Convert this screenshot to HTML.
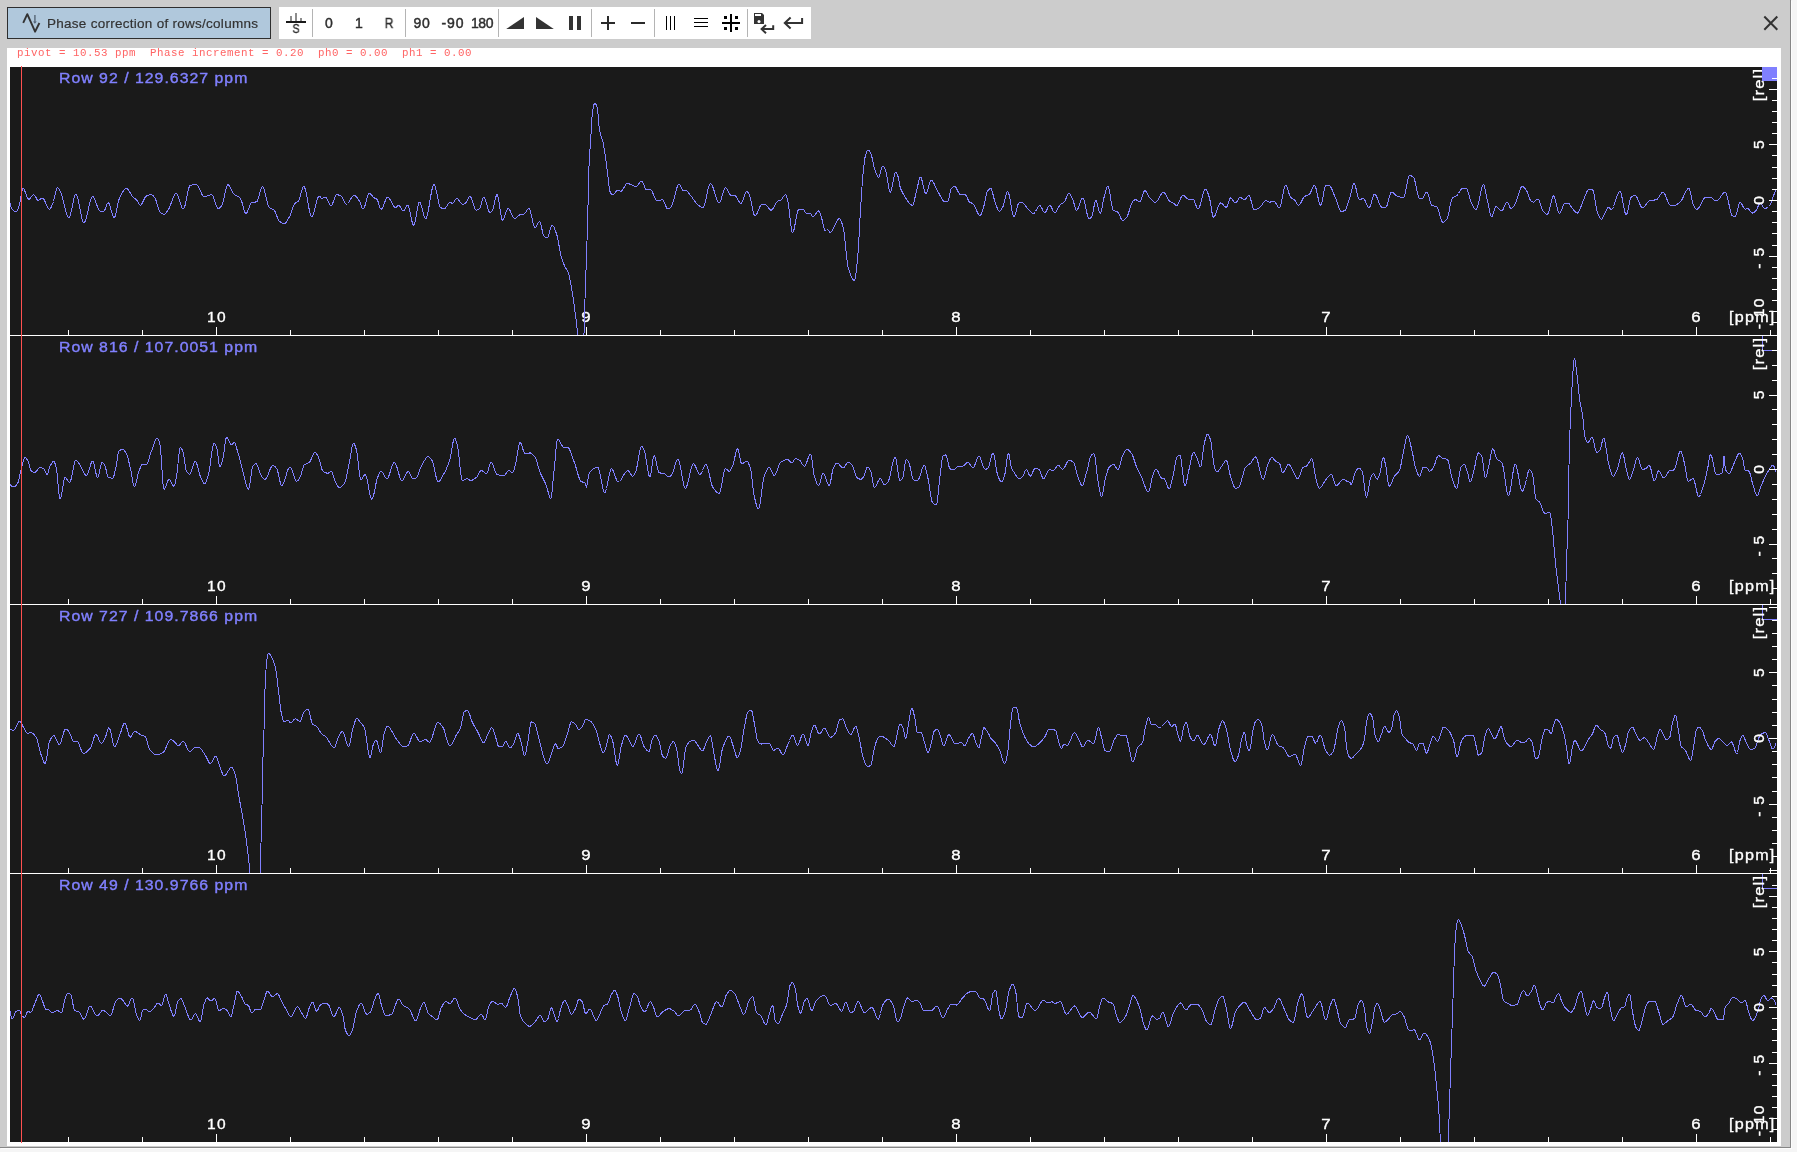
<!DOCTYPE html>
<html><head><meta charset="utf-8"><title>Phase correction of rows/columns</title>
<style>
html,body{margin:0;padding:0;}
body{width:1797px;height:1152px;overflow:hidden;background:#f5f5f5;position:relative;font-family:"Liberation Sans",sans-serif;}
.abs{position:absolute;}
.t{position:absolute;white-space:pre;line-height:1;will-change:transform;}
#win{left:0;top:0;width:1790px;height:1147px;background:#cccccc;border-right:1px solid #868686;border-bottom:1px solid #868686;box-shadow:1px 1px 0 #fcfcfc;}
#btn{left:7px;top:7px;width:262px;height:30px;background:#b0c8dc;border:1px solid #2e2e2e;}
#tb{left:279px;top:7px;width:532px;height:32px;background:#ffffff;}
#white{left:7px;top:48px;width:1774px;height:1098px;background:#ffffff;}
#plot{left:10px;top:67px;width:1767px;height:1075px;background:#1a1a1a;}
.tl{font-size:13px;color:#333333;}
.row{font-size:14px;color:#8080ff;-webkit-text-stroke:0.38px #8080ff;}
.ax{font-size:14px;color:#ffffff;-webkit-text-stroke:0.33px #ffffff;}
.mono{font-family:"Liberation Mono",monospace;color:#ff6464;}
svg{position:absolute;left:0;top:0;will-change:transform;}
.yl{font-family:"Liberation Sans",sans-serif;font-size:14px;fill:#ffffff;stroke:#ffffff;stroke-width:0.33px;}
</style></head><body>
<div id="win" class="abs"></div>
<div id="btn" class="abs"></div>
<div id="tb" class="abs"></div>
<div id="white" class="abs"></div>
<div id="plot" class="abs"></div>
<span class="t tl" id="btntxt" style="left:46.7px;top:16.6px;font-size:13.5px;letter-spacing:0.27px;-webkit-text-stroke:0.2px #333;">Phase correction of rows/columns</span>
<span class="t tl" style="left:278.9px;width:100px;text-align:center;top:16.15px;font-size:14px;letter-spacing:0px;-webkit-text-stroke:0.45px #2e2e2e;color:#2e2e2e;">0</span>
<span class="t tl" style="left:309.3px;width:100px;text-align:center;top:16.15px;font-size:14px;letter-spacing:0px;-webkit-text-stroke:0.45px #2e2e2e;color:#2e2e2e;">1</span>
<span class="t tl" style="left:339.3px;width:100px;text-align:center;top:16.15px;font-size:14px;letter-spacing:0px;-webkit-text-stroke:0.45px #2e2e2e;color:#2e2e2e;transform:scaleX(0.86);">R</span>
<span class="t tl" style="left:372.2px;width:100px;text-align:center;top:16.15px;font-size:14px;letter-spacing:0.6px;-webkit-text-stroke:0.45px #2e2e2e;color:#2e2e2e;">90</span>
<span class="t tl" style="left:402.7px;width:100px;text-align:center;top:16.15px;font-size:14px;letter-spacing:1.0px;-webkit-text-stroke:0.45px #2e2e2e;color:#2e2e2e;">-90</span>
<span class="t tl" style="left:431.8px;width:100px;text-align:center;top:16.15px;font-size:14px;letter-spacing:-0.4px;-webkit-text-stroke:0.45px #2e2e2e;color:#2e2e2e;">180</span>
<span class="t tl" style="left:246.0px;width:100px;text-align:center;top:23.08px;font-size:12.9px;transform:scaleX(0.82);-webkit-text-stroke:0.4px #2a2a2a;color:#2a2a2a;">S</span>
<span class="t mono" id="status" style="left:16.9px;top:48.2px;font-size:10.8px;letter-spacing:0.52px;">pivot = 10.53 ppm  Phase increment = 0.20  ph0 = 0.00  ph1 = 0.00</span>
<span class="t row" style="left:58.5px;top:71.15px;letter-spacing:0.9px;transform:scaleX(1.13);transform-origin:0 0;">Row 92 / 129.6327 ppm</span>
<span class="t ax" style="left:167.1px;width:100px;text-align:center;top:310.15px;font-size:14px;letter-spacing:1.2px;transform:scaleX(1.11);">10</span>
<span class="t ax" style="left:536.2px;width:100px;text-align:center;top:310.15px;font-size:14px;transform:scaleX(1.2);">9</span>
<span class="t ax" style="left:906.2px;width:100px;text-align:center;top:310.15px;font-size:14px;transform:scaleX(1.2);">8</span>
<span class="t ax" style="left:1276.2px;width:100px;text-align:center;top:310.15px;font-size:14px;transform:scaleX(1.2);">7</span>
<span class="t ax" style="left:1646.2px;width:100px;text-align:center;top:310.15px;font-size:14px;transform:scaleX(1.2);">6</span>
<span class="t ax" style="left:1729px;top:310.15px;letter-spacing:1.1px;transform:scaleX(1.15);transform-origin:0 0;">[ppm]</span>
<span class="t row" style="left:58.5px;top:340.15px;letter-spacing:0.9px;transform:scaleX(1.13);transform-origin:0 0;">Row 816 / 107.0051 ppm</span>
<span class="t ax" style="left:167.1px;width:100px;text-align:center;top:579.15px;font-size:14px;letter-spacing:1.2px;transform:scaleX(1.11);">10</span>
<span class="t ax" style="left:536.2px;width:100px;text-align:center;top:579.15px;font-size:14px;transform:scaleX(1.2);">9</span>
<span class="t ax" style="left:906.2px;width:100px;text-align:center;top:579.15px;font-size:14px;transform:scaleX(1.2);">8</span>
<span class="t ax" style="left:1276.2px;width:100px;text-align:center;top:579.15px;font-size:14px;transform:scaleX(1.2);">7</span>
<span class="t ax" style="left:1646.2px;width:100px;text-align:center;top:579.15px;font-size:14px;transform:scaleX(1.2);">6</span>
<span class="t ax" style="left:1729px;top:579.15px;letter-spacing:1.1px;transform:scaleX(1.15);transform-origin:0 0;">[ppm]</span>
<span class="t row" style="left:58.5px;top:609.15px;letter-spacing:0.9px;transform:scaleX(1.13);transform-origin:0 0;">Row 727 / 109.7866 ppm</span>
<span class="t ax" style="left:167.1px;width:100px;text-align:center;top:848.15px;font-size:14px;letter-spacing:1.2px;transform:scaleX(1.11);">10</span>
<span class="t ax" style="left:536.2px;width:100px;text-align:center;top:848.15px;font-size:14px;transform:scaleX(1.2);">9</span>
<span class="t ax" style="left:906.2px;width:100px;text-align:center;top:848.15px;font-size:14px;transform:scaleX(1.2);">8</span>
<span class="t ax" style="left:1276.2px;width:100px;text-align:center;top:848.15px;font-size:14px;transform:scaleX(1.2);">7</span>
<span class="t ax" style="left:1646.2px;width:100px;text-align:center;top:848.15px;font-size:14px;transform:scaleX(1.2);">6</span>
<span class="t ax" style="left:1729px;top:848.15px;letter-spacing:1.1px;transform:scaleX(1.15);transform-origin:0 0;">[ppm]</span>
<span class="t row" style="left:58.5px;top:878.15px;letter-spacing:0.9px;transform:scaleX(1.13);transform-origin:0 0;">Row 49 / 130.9766 ppm</span>
<span class="t ax" style="left:167.1px;width:100px;text-align:center;top:1117.15px;font-size:14px;letter-spacing:1.2px;transform:scaleX(1.11);">10</span>
<span class="t ax" style="left:536.2px;width:100px;text-align:center;top:1117.15px;font-size:14px;transform:scaleX(1.2);">9</span>
<span class="t ax" style="left:906.2px;width:100px;text-align:center;top:1117.15px;font-size:14px;transform:scaleX(1.2);">8</span>
<span class="t ax" style="left:1276.2px;width:100px;text-align:center;top:1117.15px;font-size:14px;transform:scaleX(1.2);">7</span>
<span class="t ax" style="left:1646.2px;width:100px;text-align:center;top:1117.15px;font-size:14px;transform:scaleX(1.2);">6</span>
<span class="t ax" style="left:1729px;top:1117.15px;letter-spacing:1.1px;transform:scaleX(1.15);transform-origin:0 0;">[ppm]</span>
<svg width="1797" height="1152" viewBox="0 0 1797 1152" shape-rendering="crispEdges">
<defs><clipPath id="cp0"><rect x="10" y="67" width="1767" height="268"/></clipPath><clipPath id="cp1"><rect x="10" y="336" width="1767" height="268"/></clipPath><clipPath id="cp2"><rect x="10" y="605" width="1767" height="268"/></clipPath><clipPath id="cp3"><rect x="10" y="874" width="1767" height="268"/></clipPath></defs>
<path d="M10.0,203.5 10.5,205.1 11.0,206.6 11.5,207.8 12.0,208.7 12.5,209.5 13.0,210.2 13.5,210.6 14.0,211.0 14.5,211.2 15.0,211.4 15.5,211.5 16.0,211.5 16.5,211.4 17.0,210.9 17.5,210.0 18.0,208.8 18.5,207.3 19.0,205.8 19.5,204.3 20.0,202.3 20.5,199.7 21.0,196.6 21.5,193.7 22.0,191.0 22.5,189.2 23.0,188.5 23.5,188.7 24.0,189.3 24.5,190.2 25.0,191.4 25.5,192.7 26.0,194.1 26.5,195.5 27.0,196.8 27.5,197.9 28.0,198.7 28.5,199.1 29.0,199.2 29.5,199.0 30.0,198.5 30.5,198.0 31.0,197.3 31.5,196.7 32.0,196.0 32.5,195.5 33.0,195.0 33.5,194.8 34.0,194.8 34.5,195.1 35.0,195.8 35.5,196.7 36.0,197.6 36.5,198.6 37.0,199.4 37.5,200.0 38.0,200.2 38.5,200.2 39.0,200.0 39.5,199.7 40.0,199.4 40.5,199.1 41.0,198.8 41.5,198.5 42.0,198.3 42.5,198.2 43.0,198.4 43.5,198.8 44.0,199.5 44.5,200.4 45.0,201.5 45.5,202.7 46.0,203.9 46.5,205.1 47.0,206.3 47.5,207.3 48.0,208.2 48.5,208.8 49.0,209.2 49.5,209.2 50.0,208.9 50.5,208.3 51.0,207.5 51.5,206.5 52.0,205.4 52.5,204.4 53.0,203.1 53.5,201.5 54.0,199.5 54.5,197.3 55.0,195.0 55.5,192.8 56.0,190.9 56.5,189.3 57.0,188.2 57.5,187.7 58.0,187.8 58.5,188.3 59.0,189.1 59.5,190.0 60.0,191.0 60.5,192.1 61.0,193.1 61.5,194.5 62.0,196.1 62.5,197.9 63.0,199.8 63.5,201.9 64.0,204.0 64.5,206.1 65.0,208.2 65.5,210.1 66.0,212.0 66.5,213.7 67.0,215.1 67.5,216.3 68.0,217.2 68.5,217.7 69.0,217.7 69.5,217.2 70.0,216.0 70.5,214.4 71.0,212.4 71.5,210.2 72.0,207.7 72.5,205.2 73.0,202.7 73.5,200.4 74.0,198.3 74.5,196.5 75.0,195.2 75.5,194.4 76.0,194.2 76.5,194.7 77.0,195.8 77.5,197.3 78.0,199.2 78.5,201.5 79.0,203.9 79.5,206.5 80.0,209.2 80.5,211.9 81.0,214.4 81.5,216.7 82.0,218.8 82.5,220.5 83.0,221.8 83.5,222.6 84.0,222.7 84.5,222.4 85.0,221.6 85.5,220.4 86.0,218.9 86.5,217.1 87.0,215.1 87.5,213.0 88.0,210.7 88.5,208.5 89.0,206.3 89.5,204.1 90.0,202.2 90.5,200.4 91.0,198.9 91.5,197.7 92.0,196.9 92.5,196.5 93.0,196.6 93.5,197.0 94.0,197.7 94.5,198.7 95.0,199.9 95.5,201.2 96.0,202.6 96.5,204.0 97.0,205.5 97.5,206.9 98.0,208.1 98.5,209.2 99.0,210.1 99.5,210.7 100.0,211.0 100.5,211.0 101.0,211.0 101.5,211.0 102.0,211.0 102.5,211.0 103.0,211.0 103.5,211.0 104.0,211.0 104.5,210.5 105.0,209.6 105.5,208.4 106.0,206.9 106.5,205.5 107.0,204.2 107.5,203.3 108.0,202.8 108.5,202.9 109.0,203.5 109.5,204.6 110.0,206.1 110.5,207.8 111.0,209.6 111.5,211.5 112.0,213.3 112.5,214.9 113.0,216.3 113.5,217.2 114.0,217.7 114.5,217.6 115.0,216.6 115.5,214.9 116.0,212.8 116.5,210.3 117.0,207.7 117.5,205.2 118.0,202.9 118.5,200.9 119.0,199.6 119.5,198.5 120.0,197.4 120.5,196.3 121.0,195.2 121.5,194.2 122.0,193.2 122.5,192.3 123.0,191.5 123.5,190.7 124.0,190.1 124.5,189.5 125.0,189.0 125.5,188.7 126.0,188.5 126.5,188.5 127.0,188.6 127.5,188.9 128.0,189.5 128.5,190.1 129.0,190.9 129.5,191.7 130.0,192.6 130.5,193.5 131.0,194.3 131.5,195.2 132.0,195.9 132.5,196.5 133.0,197.0 133.5,197.4 134.0,197.8 134.5,198.1 135.0,198.5 135.5,198.9 136.0,199.3 136.5,199.8 137.0,200.4 137.5,201.3 138.0,202.3 138.5,203.3 139.0,204.2 139.5,204.8 140.0,205.2 140.5,205.2 141.0,204.9 141.5,204.3 142.0,203.5 142.5,202.6 143.0,201.6 143.5,200.6 144.0,199.5 144.5,198.5 145.0,197.6 145.5,196.9 146.0,196.3 146.5,196.0 147.0,195.7 147.5,195.6 148.0,195.4 148.5,195.2 149.0,195.1 149.5,194.9 150.0,194.8 150.5,194.8 151.0,194.7 151.5,194.7 152.0,194.8 152.5,195.1 153.0,195.6 153.5,196.1 154.0,196.7 154.5,197.4 155.0,198.1 155.5,199.1 156.0,200.4 156.5,202.0 157.0,203.6 157.5,205.3 158.0,207.0 158.5,208.6 159.0,210.0 159.5,211.1 160.0,212.0 160.5,212.5 161.0,212.9 161.5,213.2 162.0,213.6 162.5,213.8 163.0,214.1 163.5,214.2 164.0,214.2 164.5,214.1 165.0,213.9 165.5,213.4 166.0,212.9 166.5,212.2 167.0,211.5 167.5,210.8 168.0,210.1 168.5,209.4 169.0,208.5 169.5,207.4 170.0,206.2 170.5,204.9 171.0,203.5 171.5,202.1 172.0,200.7 172.5,199.3 173.0,198.0 173.5,196.7 174.0,195.7 174.5,194.8 175.0,194.1 175.5,193.6 176.0,193.5 176.5,193.7 177.0,194.2 177.5,195.1 178.0,196.3 178.5,197.6 179.0,199.1 179.5,200.7 180.0,202.3 180.5,203.9 181.0,205.3 181.5,206.6 182.0,207.7 182.5,208.5 183.0,208.9 183.5,208.9 184.0,208.3 184.5,207.1 185.0,205.5 185.5,203.5 186.0,201.2 186.5,198.7 187.0,196.2 187.5,193.7 188.0,191.4 188.5,189.2 189.0,187.5 189.5,186.2 190.0,185.4 190.5,185.2 191.0,185.1 191.5,185.0 192.0,185.0 192.5,184.9 193.0,184.9 193.5,184.8 194.0,184.8 194.5,184.8 195.0,184.7 195.5,184.7 196.0,184.7 196.5,184.7 197.0,184.8 197.5,185.2 198.0,185.9 198.5,186.7 199.0,187.7 199.5,188.8 200.0,190.0 200.5,191.1 201.0,192.3 201.5,193.5 202.0,194.5 202.5,195.4 203.0,196.1 203.5,196.5 204.0,196.7 204.5,196.7 205.0,196.6 205.5,196.5 206.0,196.4 206.5,196.2 207.0,196.0 207.5,195.8 208.0,195.6 208.5,195.4 209.0,195.3 209.5,195.1 210.0,194.9 210.5,194.8 211.0,194.7 211.5,194.7 212.0,194.9 212.5,195.4 213.0,196.3 213.5,197.4 214.0,198.7 214.5,200.2 215.0,201.7 215.5,203.2 216.0,204.7 216.5,206.0 217.0,207.1 217.5,207.9 218.0,208.4 218.5,208.5 219.0,208.3 219.5,208.1 220.0,207.7 220.5,207.2 221.0,206.7 221.5,206.1 222.0,205.3 222.5,204.0 223.0,202.3 223.5,200.2 224.0,197.9 224.5,195.5 225.0,193.1 225.5,190.8 226.0,188.8 226.5,187.0 227.0,185.7 227.5,184.9 228.0,184.7 228.5,185.0 229.0,185.5 229.5,186.2 230.0,187.1 230.5,188.1 231.0,189.2 231.5,190.3 232.0,191.3 232.5,192.3 233.0,193.0 233.5,193.6 234.0,194.0 234.5,194.4 235.0,194.8 235.5,195.1 236.0,195.4 236.5,195.6 237.0,195.9 237.5,196.2 238.0,196.5 238.5,196.8 239.0,197.1 239.5,197.6 240.0,198.1 240.5,198.6 241.0,199.6 241.5,200.9 242.0,202.5 242.5,204.4 243.0,206.3 243.5,208.1 244.0,209.9 244.5,211.4 245.0,212.6 245.5,213.3 246.0,213.5 246.5,213.2 247.0,212.5 247.5,211.6 248.0,210.4 248.5,209.1 249.0,207.7 249.5,206.4 250.0,205.2 250.5,204.1 251.0,203.3 251.5,202.8 252.0,202.6 252.5,202.5 253.0,202.4 253.5,202.3 254.0,202.3 254.5,202.2 255.0,202.1 255.5,202.0 256.0,201.9 256.5,201.8 257.0,201.5 257.5,200.6 258.0,199.4 258.5,197.8 259.0,196.0 259.5,194.1 260.0,192.2 260.5,190.4 261.0,188.9 261.5,187.7 262.0,186.9 262.5,186.7 263.0,187.1 263.5,188.0 264.0,189.3 264.5,190.9 265.0,192.8 265.5,194.9 266.0,197.0 266.5,199.2 267.0,201.2 267.5,203.1 268.0,204.8 268.5,206.1 269.0,207.0 269.5,207.5 270.0,207.9 270.5,208.2 271.0,208.5 271.5,208.7 272.0,208.9 272.5,209.1 273.0,209.4 273.5,209.7 274.0,210.1 274.5,210.6 275.0,211.4 275.5,212.5 276.0,213.8 276.5,215.1 277.0,216.5 277.5,217.8 278.0,219.0 278.5,220.1 279.0,220.8 279.5,221.3 280.0,221.7 280.5,222.1 281.0,222.5 281.5,222.8 282.0,223.1 282.5,223.4 283.0,223.6 283.5,223.7 284.0,223.8 284.5,223.7 285.0,223.5 285.5,223.1 286.0,222.5 286.5,221.9 287.0,221.1 287.5,220.2 288.0,219.4 288.5,218.5 289.0,217.6 289.5,216.7 290.0,215.7 290.5,214.4 291.0,213.1 291.5,211.6 292.0,210.2 292.5,208.7 293.0,207.4 293.5,206.1 294.0,205.0 294.5,204.1 295.0,203.4 295.5,203.0 296.0,202.6 296.5,202.4 297.0,202.1 297.5,201.8 298.0,201.4 298.5,201.0 299.0,200.1 299.5,198.8 300.0,197.2 300.5,195.4 301.0,193.4 301.5,191.5 302.0,189.7 302.5,188.2 303.0,187.1 303.5,186.5 304.0,186.5 304.5,187.2 305.0,188.5 305.5,190.2 306.0,192.3 306.5,194.8 307.0,197.4 307.5,200.2 308.0,203.0 308.5,205.8 309.0,208.5 309.5,210.9 310.0,213.0 310.5,214.8 311.0,216.0 311.5,216.7 312.0,216.7 312.5,216.2 313.0,215.2 313.5,213.9 314.0,212.3 314.5,210.4 315.0,208.4 315.5,206.4 316.0,204.3 316.5,202.3 317.0,200.5 317.5,198.9 318.0,197.5 318.5,196.6 319.0,196.0 319.5,196.0 320.0,196.5 320.5,197.2 321.0,197.9 321.5,198.4 322.0,198.5 322.5,198.3 323.0,198.2 323.5,197.9 324.0,197.7 324.5,197.4 325.0,197.3 325.5,197.2 326.0,197.4 326.5,197.9 327.0,198.7 327.5,199.7 328.0,200.7 328.5,201.9 329.0,202.9 329.5,203.9 330.0,204.7 330.5,205.3 331.0,205.5 331.5,205.3 332.0,204.7 332.5,203.7 333.0,202.6 333.5,201.2 334.0,199.8 334.5,198.5 335.0,197.2 335.5,196.1 336.0,195.3 336.5,194.8 337.0,194.7 337.5,194.8 338.0,194.9 338.5,195.0 339.0,195.2 339.5,195.4 340.0,195.6 340.5,195.9 341.0,196.2 341.5,196.5 342.0,196.9 342.5,197.6 343.0,198.6 343.5,199.8 344.0,201.0 344.5,202.2 345.0,203.2 345.5,203.9 346.0,204.2 346.5,204.2 347.0,203.9 347.5,203.5 348.0,203.0 348.5,202.4 349.0,201.7 349.5,200.9 350.0,200.1 350.5,199.4 351.0,198.6 351.5,197.8 352.0,197.1 352.5,196.6 353.0,196.1 353.5,195.7 354.0,195.5 354.5,195.5 355.0,195.6 355.5,195.9 356.0,196.4 356.5,196.9 357.0,197.5 357.5,198.2 358.0,199.0 358.5,199.7 359.0,200.5 359.5,201.2 360.0,202.3 360.5,203.6 361.0,205.1 361.5,206.5 362.0,207.7 362.5,208.6 363.0,209.0 363.5,208.8 364.0,208.1 364.5,207.0 365.0,205.5 365.5,203.9 366.0,202.0 366.5,200.2 367.0,198.4 367.5,196.7 368.0,195.3 368.5,194.2 369.0,193.6 369.5,193.5 370.0,193.6 370.5,193.9 371.0,194.4 371.5,194.9 372.0,195.5 372.5,196.1 373.0,196.7 373.5,197.3 374.0,197.7 374.5,198.1 375.0,198.3 375.5,198.5 376.0,198.7 376.5,199.0 377.0,199.4 377.5,200.2 378.0,201.5 378.5,203.0 379.0,204.7 379.5,206.3 380.0,207.7 380.5,208.7 381.0,209.2 381.5,209.1 382.0,208.6 382.5,207.8 383.0,206.8 383.5,205.6 384.0,204.3 384.5,202.9 385.0,201.5 385.5,200.2 386.0,199.1 386.5,198.2 387.0,197.5 387.5,197.2 388.0,197.3 388.5,197.6 389.0,198.0 389.5,198.7 390.0,199.4 390.5,200.3 391.0,201.2 391.5,202.2 392.0,203.2 392.5,204.2 393.0,205.1 393.5,205.9 394.0,206.6 394.5,207.2 395.0,207.5 395.5,207.7 396.0,207.6 396.5,207.2 397.0,206.7 397.5,206.0 398.0,205.5 398.5,205.2 399.0,205.3 399.5,205.8 400.0,206.5 400.5,207.4 401.0,208.3 401.5,209.2 402.0,210.1 402.5,210.7 403.0,211.0 403.5,210.9 404.0,210.5 404.5,209.8 405.0,208.9 405.5,207.9 406.0,207.0 406.5,206.2 407.0,205.6 407.5,205.3 408.0,205.4 408.5,206.3 409.0,207.8 409.5,209.7 410.0,212.0 410.5,214.4 411.0,216.9 411.5,219.3 412.0,221.5 412.5,223.3 413.0,224.6 413.5,225.2 414.0,225.0 414.5,224.0 415.0,222.1 415.5,219.8 416.0,217.0 416.5,214.0 417.0,211.1 417.5,208.3 418.0,205.8 418.5,203.8 419.0,202.6 419.5,202.2 420.0,202.6 420.5,203.5 421.0,204.8 421.5,206.4 422.0,208.2 422.5,210.1 423.0,212.1 423.5,213.9 424.0,215.6 424.5,217.0 425.0,218.0 425.5,218.5 426.0,218.4 426.5,217.6 427.0,216.2 427.5,214.3 428.0,212.0 428.5,209.4 429.0,206.6 429.5,203.6 430.0,200.5 430.5,197.5 431.0,194.6 431.5,191.9 432.0,189.5 432.5,187.5 433.0,185.9 433.5,185.0 434.0,184.7 434.5,185.1 435.0,186.1 435.5,187.7 436.0,189.6 436.5,191.8 437.0,194.3 437.5,196.8 438.0,199.3 438.5,201.6 439.0,203.7 439.5,205.5 440.0,206.8 440.5,207.6 441.0,207.8 441.5,208.0 442.0,208.1 442.5,208.3 443.0,208.4 443.5,208.4 444.0,208.5 444.5,208.5 445.0,208.3 445.5,207.9 446.0,207.3 446.5,206.6 447.0,205.7 447.5,204.9 448.0,204.1 448.5,203.3 449.0,202.7 449.5,202.4 450.0,202.2 450.5,202.4 451.0,202.7 451.5,203.1 452.0,203.4 452.5,203.5 453.0,203.3 453.5,202.8 454.0,202.0 454.5,201.2 455.0,200.3 455.5,199.5 456.0,198.9 456.5,198.5 457.0,198.5 457.5,198.7 458.0,199.2 458.5,199.8 459.0,200.4 459.5,201.2 460.0,201.9 460.5,202.6 461.0,203.3 461.5,203.8 462.0,204.1 462.5,204.2 463.0,204.2 463.5,204.1 464.0,203.9 464.5,203.7 465.0,203.5 465.5,203.1 466.0,202.5 466.5,201.6 467.0,200.7 467.5,199.7 468.0,198.7 468.5,197.9 469.0,197.1 469.5,196.6 470.0,196.5 470.5,196.7 471.0,197.4 471.5,198.4 472.0,199.8 472.5,201.3 473.0,202.9 473.5,204.5 474.0,206.1 474.5,207.6 475.0,208.8 475.5,209.7 476.0,210.2 476.5,210.2 477.0,210.1 477.5,209.9 478.0,209.7 478.5,209.3 479.0,208.9 479.5,208.5 480.0,207.8 480.5,206.5 481.0,204.8 481.5,203.0 482.0,201.1 482.5,199.5 483.0,198.1 483.5,197.4 484.0,197.3 484.5,197.8 485.0,198.7 485.5,200.1 486.0,201.7 486.5,203.4 487.0,205.3 487.5,207.1 488.0,208.8 488.5,210.4 489.0,211.6 489.5,212.4 490.0,212.7 490.5,212.6 491.0,212.1 491.5,211.5 492.0,210.7 492.5,209.8 493.0,208.7 493.5,207.0 494.0,204.9 494.5,202.7 495.0,200.4 495.5,198.3 496.0,196.5 496.5,195.2 497.0,194.7 497.5,195.2 498.0,196.7 498.5,199.0 499.0,202.0 499.5,205.3 500.0,208.8 500.5,212.1 501.0,215.2 501.5,217.7 502.0,219.5 502.5,220.2 503.0,220.1 503.5,219.4 504.0,218.3 504.5,216.9 505.0,215.4 505.5,213.8 506.0,212.3 506.5,210.8 507.0,209.7 507.5,208.8 508.0,208.5 508.5,208.6 509.0,209.0 509.5,209.7 510.0,210.6 510.5,211.6 511.0,212.7 511.5,213.9 512.0,215.0 512.5,216.1 513.0,217.0 513.5,217.8 514.0,218.3 514.5,218.5 515.0,218.4 515.5,218.3 516.0,217.9 516.5,217.6 517.0,217.1 517.5,216.6 518.0,216.1 518.5,215.7 519.0,215.3 519.5,215.0 520.0,214.8 520.5,214.7 521.0,214.6 521.5,214.5 522.0,214.5 522.5,214.5 523.0,214.4 523.5,214.3 524.0,214.2 524.5,213.9 525.0,213.3 525.5,212.6 526.0,211.8 526.5,211.0 527.0,210.2 527.5,209.5 528.0,208.9 528.5,208.6 529.0,208.5 529.5,209.0 530.0,210.2 530.5,211.8 531.0,213.7 531.5,215.9 532.0,218.2 532.5,220.5 533.0,222.6 533.5,224.6 534.0,226.1 534.5,227.2 535.0,227.7 535.5,227.6 536.0,227.1 536.5,226.4 537.0,225.4 537.5,224.4 538.0,223.4 538.5,222.5 539.0,221.8 539.5,221.5 540.0,221.8 540.5,222.9 541.0,224.7 541.5,227.0 542.0,229.4 542.5,231.8 543.0,233.8 543.5,235.4 544.0,236.1 544.5,236.6 545.0,237.1 545.5,237.4 546.0,237.7 546.5,237.9 547.0,238.0 547.5,237.8 548.0,237.0 548.5,235.7 549.0,234.1 549.5,232.2 550.0,230.3 550.5,228.5 551.0,227.0 551.5,225.9 552.0,225.3 552.5,225.4 553.0,225.7 553.5,226.4 554.0,227.3 554.5,228.5 555.0,229.7 555.5,231.0 556.0,232.4 556.5,233.8 557.0,235.5 557.5,237.6 558.0,240.1 558.5,242.7 559.0,245.5 559.5,248.3 560.0,251.0 560.5,253.5 561.0,255.7 561.5,257.6 562.0,259.2 562.5,260.7 563.0,262.1 563.5,263.4 564.0,264.6 564.5,265.7 565.0,266.7 565.5,267.6 566.0,268.4 566.5,269.1 567.0,269.9 567.5,270.8 568.0,271.9 568.5,273.3 569.0,275.1 569.5,277.2 570.0,279.7 570.5,282.3 571.0,285.0 571.5,287.8 572.0,290.6 572.5,293.8 573.0,297.1 573.5,300.6 574.0,304.2 574.5,307.8 575.0,311.5 575.5,315.2 576.0,319.0 576.5,323.2 577.0,327.7 577.5,332.8 578.0,339.6 578.5,349.8 579.0,355.0 579.5,355.0 580.0,355.0 580.5,355.0 581.0,355.0 581.5,355.0 582.0,355.0 582.5,355.0 583.0,355.0 583.5,350.0 584.0,333.5 584.5,316.7 585.0,299.1 585.5,283.9 586.0,270.3 586.5,256.1 587.0,240.9 587.5,224.6 588.0,205.5 588.5,183.0 589.0,166.3 589.5,156.8 590.0,149.6 590.5,142.8 591.0,134.5 591.5,124.8 592.0,116.8 592.5,112.5 593.0,109.2 593.5,106.5 594.0,104.5 594.5,103.4 595.0,103.4 595.5,103.8 596.0,104.6 596.5,105.6 597.0,106.9 597.5,108.9 598.0,113.6 598.5,119.7 599.0,125.6 599.5,129.7 600.0,132.2 600.5,134.1 601.0,135.8 601.5,137.3 602.0,138.8 602.5,140.4 603.0,142.3 603.5,144.7 604.0,147.5 604.5,150.7 605.0,154.1 605.5,157.6 606.0,161.2 606.5,164.7 607.0,168.6 607.5,172.9 608.0,177.4 608.5,181.9 609.0,185.9 609.5,189.2 610.0,191.5 610.5,192.7 611.0,193.6 611.5,194.3 612.0,194.7 612.5,194.7 613.0,194.5 613.5,194.2 614.0,193.8 614.5,193.3 615.0,192.7 615.5,192.2 616.0,191.6 616.5,191.1 617.0,190.7 617.5,190.4 618.0,190.2 618.5,190.2 619.0,190.5 619.5,190.8 620.0,191.2 620.5,191.4 621.0,191.4 621.5,191.2 622.0,190.7 622.5,190.0 623.0,189.3 623.5,188.4 624.0,187.5 624.5,186.6 625.0,185.7 625.5,184.9 626.0,184.2 626.5,183.8 627.0,183.5 627.5,183.4 628.0,183.5 628.5,183.6 629.0,183.8 629.5,184.0 630.0,184.2 630.5,184.4 631.0,184.7 631.5,184.9 632.0,185.2 632.5,185.4 633.0,185.7 633.5,185.9 634.0,186.1 634.5,186.3 635.0,186.4 635.5,186.4 636.0,186.4 636.5,186.2 637.0,185.9 637.5,185.3 638.0,184.7 638.5,184.1 639.0,183.4 639.5,182.7 640.0,182.1 640.5,181.7 641.0,181.3 641.5,181.2 642.0,181.4 642.5,182.0 643.0,182.9 643.5,184.1 644.0,185.3 644.5,186.6 645.0,187.7 645.5,188.7 646.0,189.4 646.5,189.7 647.0,189.7 647.5,189.7 648.0,189.7 648.5,189.7 649.0,189.7 649.5,189.7 650.0,189.7 650.5,189.7 651.0,190.0 651.5,190.6 652.0,191.3 652.5,192.3 653.0,193.4 653.5,194.6 654.0,195.8 654.5,197.0 655.0,198.1 655.5,199.1 656.0,199.9 656.5,200.5 657.0,200.9 657.5,201.0 658.0,200.9 658.5,200.8 659.0,200.6 659.5,200.5 660.0,200.3 660.5,200.1 661.0,199.9 661.5,199.8 662.0,199.7 662.5,199.7 663.0,200.1 663.5,200.8 664.0,201.8 664.5,202.9 665.0,204.1 665.5,205.4 666.0,206.6 666.5,207.6 667.0,208.4 667.5,208.9 668.0,209.0 668.5,208.9 669.0,208.6 669.5,208.3 670.0,208.0 670.5,207.5 671.0,207.1 671.5,206.3 672.0,205.3 672.5,203.9 673.0,202.3 673.5,200.6 674.0,198.7 674.5,196.7 675.0,194.7 675.5,192.8 676.0,190.9 676.5,189.1 677.0,187.6 677.5,186.3 678.0,185.2 678.5,184.5 679.0,184.2 679.5,184.4 680.0,185.0 680.5,185.9 681.0,187.0 681.5,188.2 682.0,189.3 682.5,190.2 683.0,190.8 683.5,190.9 684.0,190.8 684.5,190.5 685.0,190.3 685.5,190.2 686.0,190.3 686.5,190.6 687.0,191.0 687.5,191.5 688.0,192.1 688.5,192.8 689.0,193.5 689.5,194.2 690.0,194.9 690.5,195.5 691.0,196.1 691.5,196.7 692.0,197.3 692.5,198.0 693.0,198.7 693.5,199.4 694.0,200.1 694.5,200.8 695.0,201.5 695.5,202.2 696.0,202.8 696.5,203.4 697.0,203.9 697.5,204.4 698.0,204.8 698.5,205.2 699.0,205.6 699.5,206.1 700.0,206.4 700.5,206.8 701.0,207.1 701.5,207.4 702.0,207.6 702.5,207.7 703.0,207.7 703.5,207.3 704.0,206.3 704.5,204.9 705.0,203.1 705.5,201.0 706.0,198.7 706.5,196.3 707.0,193.9 707.5,191.6 708.0,189.3 708.5,187.4 709.0,185.7 709.5,184.4 710.0,183.7 710.5,183.5 711.0,183.7 711.5,184.3 712.0,185.1 712.5,186.2 713.0,187.5 713.5,188.9 714.0,190.5 714.5,192.1 715.0,193.8 715.5,195.4 716.0,197.0 716.5,198.4 717.0,199.7 717.5,200.9 718.0,201.8 718.5,202.4 719.0,202.7 719.5,202.6 720.0,202.0 720.5,201.0 721.0,199.7 721.5,198.1 722.0,196.3 722.5,194.5 723.0,192.8 723.5,191.1 724.0,189.7 724.5,188.6 725.0,187.9 725.5,187.7 726.0,187.9 726.5,188.3 727.0,189.0 727.5,189.8 728.0,190.7 728.5,191.7 729.0,192.7 729.5,193.6 730.0,194.5 730.5,195.2 731.0,195.7 731.5,195.9 732.0,196.0 732.5,195.9 733.0,195.8 733.5,195.6 734.0,195.5 734.5,195.5 735.0,195.5 735.5,195.8 736.0,196.4 736.5,197.1 737.0,197.9 737.5,198.8 738.0,199.8 738.5,200.7 739.0,201.6 739.5,202.4 740.0,203.0 740.5,203.4 741.0,203.5 741.5,203.2 742.0,202.4 742.5,201.4 743.0,200.0 743.5,198.5 744.0,197.0 744.5,195.4 745.0,194.0 745.5,192.8 746.0,192.0 746.5,191.5 747.0,191.5 747.5,191.9 748.0,192.6 748.5,193.4 749.0,194.3 749.5,195.3 750.0,196.8 750.5,198.8 751.0,201.0 751.5,203.5 752.0,206.1 752.5,208.6 753.0,210.9 753.5,213.0 754.0,214.6 754.5,215.6 755.0,216.0 755.5,215.8 756.0,215.3 756.5,214.6 757.0,213.6 757.5,212.5 758.0,211.3 758.5,210.0 759.0,208.8 759.5,207.6 760.0,206.6 760.5,205.7 761.0,205.1 761.5,204.8 762.0,204.7 762.5,204.7 763.0,204.7 763.5,204.7 764.0,204.7 764.5,204.7 765.0,204.7 765.5,204.7 766.0,204.9 766.5,205.2 767.0,205.7 767.5,206.4 768.0,207.1 768.5,207.8 769.0,208.6 769.5,209.2 770.0,209.7 770.5,210.1 771.0,210.2 771.5,210.1 772.0,209.8 772.5,209.3 773.0,208.6 773.5,207.8 774.0,207.0 774.5,206.0 775.0,205.1 775.5,204.2 776.0,203.3 776.5,202.5 777.0,201.8 777.5,201.3 778.0,201.0 778.5,200.8 779.0,200.7 779.5,200.5 780.0,200.4 780.5,200.2 781.0,199.9 781.5,199.4 782.0,198.8 782.5,198.0 783.0,197.2 783.5,196.5 784.0,195.8 784.5,195.3 785.0,194.9 785.5,194.7 786.0,195.1 786.5,196.2 787.0,197.8 787.5,199.6 788.0,201.8 788.5,205.0 789.0,209.0 789.5,213.4 790.0,218.0 790.5,222.4 791.0,226.4 791.5,229.6 792.0,231.9 792.5,232.8 793.0,232.4 793.5,231.3 794.0,229.5 794.5,227.2 795.0,224.6 795.5,221.8 796.0,219.0 796.5,216.3 797.0,213.9 797.5,211.9 798.0,210.5 798.5,209.8 799.0,209.6 799.5,209.4 800.0,209.3 800.5,209.2 801.0,209.1 801.5,209.0 802.0,209.0 802.5,209.0 803.0,209.1 803.5,209.5 804.0,210.2 804.5,210.9 805.0,211.7 805.5,212.5 806.0,213.1 806.5,213.4 807.0,213.5 807.5,213.5 808.0,213.5 808.5,213.5 809.0,213.5 809.5,213.5 810.0,213.5 810.5,213.7 811.0,214.2 811.5,215.0 812.0,215.8 812.5,216.4 813.0,216.7 813.5,216.7 814.0,216.3 814.5,215.8 815.0,215.1 815.5,214.4 816.0,213.6 816.5,212.9 817.0,212.2 817.5,211.6 818.0,211.2 818.5,211.0 819.0,211.2 819.5,212.1 820.0,213.3 820.5,214.5 821.0,215.8 821.5,217.5 822.0,219.5 822.5,221.7 823.0,223.9 823.5,226.0 824.0,227.9 824.5,229.4 825.0,230.5 825.5,231.0 826.0,230.9 826.5,230.5 827.0,230.0 827.5,229.8 828.0,229.9 828.5,230.5 829.0,231.2 829.5,231.9 830.0,232.3 830.5,232.2 831.0,231.9 831.5,231.4 832.0,230.8 832.5,230.0 833.0,229.1 833.5,228.1 834.0,227.0 834.5,225.9 835.0,224.8 835.5,223.7 836.0,222.7 836.5,221.7 837.0,220.8 837.5,220.0 838.0,219.3 838.5,218.9 839.0,218.6 839.5,218.5 840.0,218.8 840.5,219.5 841.0,220.6 841.5,221.9 842.0,223.4 842.5,225.0 843.0,226.8 843.5,228.9 844.0,232.1 844.5,236.2 845.0,240.9 845.5,245.9 846.0,251.1 846.5,256.0 847.0,260.4 847.5,264.1 848.0,266.8 848.5,268.5 849.0,270.2 849.5,271.7 850.0,273.2 850.5,274.6 851.0,275.9 851.5,277.0 852.0,278.0 852.5,278.8 853.0,279.5 853.5,280.0 854.0,280.3 854.5,280.3 855.0,279.2 855.5,276.7 856.0,273.1 856.5,268.8 857.0,264.0 857.5,258.9 858.0,253.4 858.5,246.0 859.0,237.2 859.5,227.8 860.0,218.4 860.5,209.7 861.0,202.0 861.5,194.2 862.0,186.6 862.5,179.7 863.0,173.9 863.5,169.1 864.0,164.7 864.5,160.8 865.0,157.5 865.5,155.2 866.0,153.7 866.5,152.4 867.0,151.3 867.5,150.6 868.0,150.2 868.5,150.2 869.0,150.6 869.5,151.3 870.0,152.1 870.5,153.2 871.0,154.2 871.5,155.5 872.0,157.4 872.5,159.7 873.0,162.3 873.5,164.7 874.0,166.9 874.5,168.6 875.0,170.0 875.5,171.5 876.0,172.9 876.5,174.1 877.0,175.3 877.5,176.2 878.0,176.8 878.5,177.2 879.0,177.0 879.5,176.0 880.0,174.4 880.5,172.4 881.0,170.3 881.5,168.3 882.0,166.8 882.5,166.0 883.0,166.0 883.5,166.4 884.0,167.1 884.5,168.1 885.0,169.2 885.5,170.4 886.0,171.8 886.5,173.9 887.0,176.7 887.5,179.9 888.0,183.2 888.5,186.3 889.0,189.0 889.5,191.0 890.0,192.1 890.5,192.0 891.0,191.1 891.5,189.4 892.0,187.2 892.5,184.7 893.0,182.0 893.5,179.3 894.0,176.8 894.5,174.7 895.0,173.1 895.5,172.3 896.0,172.3 896.5,172.8 897.0,173.8 897.5,175.1 898.0,176.5 898.5,178.2 899.0,181.1 899.5,184.2 900.0,186.5 900.5,188.0 901.0,189.4 901.5,190.6 902.0,191.6 902.5,192.6 903.0,193.5 903.5,194.3 904.0,195.1 904.5,196.0 905.0,196.8 905.5,197.6 906.0,198.5 906.5,199.3 907.0,200.1 907.5,200.8 908.0,201.6 908.5,202.3 909.0,202.9 909.5,203.5 910.0,204.0 910.5,204.4 911.0,204.8 911.5,205.0 912.0,205.2 912.5,205.2 913.0,204.8 913.5,203.6 914.0,201.9 914.5,199.8 915.0,197.6 915.5,195.3 916.0,193.2 916.5,191.3 917.0,189.2 917.5,186.9 918.0,184.6 918.5,182.3 919.0,180.3 919.5,178.7 920.0,177.6 920.5,177.2 921.0,177.6 921.5,178.7 922.0,180.4 922.5,182.4 923.0,184.7 923.5,187.0 924.0,189.2 924.5,191.1 925.0,192.5 925.5,193.3 926.0,193.4 926.5,192.8 927.0,191.8 927.5,190.4 928.0,188.8 928.5,187.0 929.0,185.3 929.5,183.6 930.0,182.2 930.5,181.1 931.0,180.5 931.5,180.5 932.0,180.7 932.5,181.2 933.0,181.9 933.5,182.7 934.0,183.6 934.5,184.7 935.0,185.8 935.5,186.9 936.0,188.0 936.5,189.1 937.0,190.0 937.5,190.9 938.0,191.7 938.5,192.6 939.0,193.5 939.5,194.4 940.0,195.4 940.5,196.3 941.0,197.3 941.5,198.1 942.0,199.0 942.5,199.7 943.0,200.4 943.5,200.9 944.0,201.3 944.5,201.6 945.0,201.7 945.5,201.7 946.0,201.6 946.5,201.5 947.0,201.4 947.5,201.2 948.0,201.0 948.5,200.3 949.0,198.4 949.5,196.0 950.0,193.3 950.5,190.8 951.0,189.1 951.5,188.3 952.0,187.8 952.5,187.3 953.0,187.0 953.5,186.7 954.0,186.5 954.5,186.5 955.0,186.6 955.5,187.0 956.0,187.6 956.5,188.5 957.0,189.4 957.5,190.4 958.0,191.5 958.5,192.4 959.0,193.3 959.5,194.0 960.0,194.5 960.5,194.7 961.0,194.7 961.5,194.7 962.0,194.7 962.5,194.7 963.0,194.7 963.5,194.7 964.0,194.7 964.5,194.7 965.0,194.7 965.5,194.9 966.0,195.4 966.5,196.3 967.0,197.3 967.5,198.5 968.0,199.6 968.5,200.7 969.0,201.6 969.5,202.2 970.0,202.5 970.5,202.7 971.0,202.8 971.5,203.0 972.0,203.2 972.5,203.4 973.0,203.8 973.5,204.4 974.0,205.1 974.5,206.0 975.0,207.1 975.5,208.1 976.0,209.3 976.5,210.4 977.0,211.5 977.5,212.5 978.0,213.4 978.5,214.2 979.0,214.9 979.5,215.3 980.0,215.5 980.5,215.3 981.0,214.6 981.5,213.6 982.0,212.2 982.5,210.6 983.0,208.9 983.5,207.2 984.0,205.6 984.5,203.6 985.0,201.3 985.5,198.9 986.0,196.4 986.5,194.2 987.0,192.4 987.5,191.2 988.0,190.5 988.5,189.9 989.0,189.3 989.5,188.9 990.0,188.6 990.5,188.5 991.0,188.6 991.5,189.4 992.0,190.8 992.5,192.4 993.0,194.4 993.5,196.4 994.0,198.4 994.5,200.3 995.0,201.9 995.5,203.2 996.0,204.6 996.5,206.1 997.0,207.5 997.5,208.8 998.0,209.9 998.5,210.8 999.0,211.3 999.5,211.5 1000.0,211.3 1000.5,210.8 1001.0,210.1 1001.5,209.3 1002.0,208.4 1002.5,207.5 1003.0,206.5 1003.5,205.0 1004.0,203.1 1004.5,201.0 1005.0,198.9 1005.5,196.8 1006.0,194.8 1006.5,193.2 1007.0,192.1 1007.5,191.5 1008.0,191.7 1008.5,192.7 1009.0,194.4 1009.5,196.7 1010.0,199.4 1010.5,202.4 1011.0,205.4 1011.5,208.3 1012.0,211.1 1012.5,213.4 1013.0,215.3 1013.5,216.4 1014.0,216.7 1014.5,216.3 1015.0,215.2 1015.5,213.7 1016.0,211.8 1016.5,209.9 1017.0,207.9 1017.5,206.1 1018.0,204.5 1018.5,203.4 1019.0,202.9 1019.5,202.7 1020.0,202.5 1020.5,202.4 1021.0,202.3 1021.5,202.2 1022.0,202.3 1022.5,202.6 1023.0,202.9 1023.5,203.4 1024.0,203.9 1024.5,204.6 1025.0,205.2 1025.5,205.9 1026.0,206.5 1026.5,207.2 1027.0,207.8 1027.5,208.3 1028.0,208.8 1028.5,209.3 1029.0,209.9 1029.5,210.4 1030.0,211.0 1030.5,211.6 1031.0,212.1 1031.5,212.6 1032.0,213.0 1032.5,213.3 1033.0,213.4 1033.5,213.5 1034.0,213.3 1034.5,212.9 1035.0,212.3 1035.5,211.5 1036.0,210.6 1036.5,209.6 1037.0,208.7 1037.5,207.8 1038.0,206.9 1038.5,206.3 1039.0,205.8 1039.5,205.5 1040.0,205.6 1040.5,206.0 1041.0,206.7 1041.5,207.6 1042.0,208.6 1042.5,209.7 1043.0,210.8 1043.5,211.7 1044.0,212.3 1044.5,212.7 1045.0,212.7 1045.5,212.3 1046.0,211.5 1046.5,210.6 1047.0,209.5 1047.5,208.4 1048.0,207.3 1048.5,206.4 1049.0,205.7 1049.5,205.3 1050.0,205.3 1050.5,205.7 1051.0,206.4 1051.5,207.4 1052.0,208.5 1052.5,209.6 1053.0,210.7 1053.5,211.6 1054.0,212.3 1054.5,212.7 1055.0,212.7 1055.5,212.4 1056.0,211.9 1056.5,211.2 1057.0,210.3 1057.5,209.3 1058.0,208.4 1058.5,207.4 1059.0,206.4 1059.5,205.6 1060.0,205.0 1060.5,204.5 1061.0,204.2 1061.5,203.8 1062.0,203.6 1062.5,203.3 1063.0,203.0 1063.5,202.7 1064.0,202.2 1064.5,201.6 1065.0,200.7 1065.5,199.6 1066.0,198.5 1066.5,197.3 1067.0,196.1 1067.5,195.1 1068.0,194.2 1068.5,193.7 1069.0,193.5 1069.5,193.6 1070.0,194.1 1070.5,194.9 1071.0,195.8 1071.5,196.9 1072.0,198.0 1072.5,199.1 1073.0,200.3 1073.5,201.8 1074.0,203.5 1074.5,205.4 1075.0,207.2 1075.5,208.7 1076.0,209.8 1076.5,210.2 1077.0,210.0 1077.5,209.4 1078.0,208.5 1078.5,207.3 1079.0,206.0 1079.5,204.5 1080.0,203.1 1080.5,201.7 1081.0,200.4 1081.5,199.3 1082.0,198.5 1082.5,198.0 1083.0,198.0 1083.5,198.7 1084.0,200.0 1084.5,201.8 1085.0,203.9 1085.5,206.2 1086.0,208.7 1086.5,211.1 1087.0,213.4 1087.5,215.4 1088.0,217.0 1088.5,218.1 1089.0,218.5 1089.5,218.5 1090.0,218.3 1090.5,218.0 1091.0,217.7 1091.5,217.3 1092.0,216.4 1092.5,214.6 1093.0,212.2 1093.5,209.4 1094.0,206.6 1094.5,204.0 1095.0,202.0 1095.5,200.7 1096.0,200.5 1096.5,201.3 1097.0,202.7 1097.5,204.6 1098.0,206.7 1098.5,208.9 1099.0,210.8 1099.5,212.4 1100.0,213.3 1100.5,213.4 1101.0,212.4 1101.5,210.5 1102.0,208.0 1102.5,205.2 1103.0,202.3 1103.5,199.6 1104.0,197.5 1104.5,195.7 1105.0,193.8 1105.5,191.8 1106.0,190.0 1106.5,188.5 1107.0,187.3 1107.5,186.6 1108.0,186.5 1108.5,187.4 1109.0,189.1 1109.5,191.4 1110.0,194.3 1110.5,197.4 1111.0,200.5 1111.5,203.5 1112.0,206.2 1112.5,208.3 1113.0,209.8 1113.5,210.3 1114.0,210.6 1114.5,210.8 1115.0,210.9 1115.5,211.1 1116.0,211.2 1116.5,211.4 1117.0,211.6 1117.5,211.9 1118.0,212.4 1118.5,213.2 1119.0,214.1 1119.5,215.2 1120.0,216.3 1120.5,217.4 1121.0,218.4 1121.5,219.3 1122.0,220.0 1122.5,220.4 1123.0,220.5 1123.5,220.4 1124.0,220.1 1124.5,219.7 1125.0,219.2 1125.5,218.6 1126.0,218.0 1126.5,217.4 1127.0,216.7 1127.5,215.7 1128.0,214.5 1128.5,213.1 1129.0,211.5 1129.5,210.0 1130.0,208.4 1130.5,206.8 1131.0,205.3 1131.5,204.0 1132.0,202.8 1132.5,201.9 1133.0,201.3 1133.5,200.8 1134.0,200.4 1134.5,200.0 1135.0,199.8 1135.5,199.7 1136.0,199.8 1136.5,200.0 1137.0,200.3 1137.5,200.6 1138.0,201.0 1138.5,201.3 1139.0,201.5 1139.5,201.7 1140.0,201.7 1140.5,201.2 1141.0,200.3 1141.5,199.0 1142.0,197.4 1142.5,195.7 1143.0,194.1 1143.5,192.6 1144.0,191.4 1144.5,190.6 1145.0,190.5 1145.5,190.8 1146.0,191.4 1146.5,192.2 1147.0,193.2 1147.5,194.3 1148.0,195.3 1148.5,196.3 1149.0,197.0 1149.5,197.6 1150.0,198.2 1150.5,198.7 1151.0,199.3 1151.5,199.8 1152.0,200.3 1152.5,200.8 1153.0,201.2 1153.5,201.6 1154.0,201.8 1154.5,202.1 1155.0,202.2 1155.5,202.2 1156.0,202.1 1156.5,201.7 1157.0,201.2 1157.5,200.5 1158.0,199.8 1158.5,198.9 1159.0,198.0 1159.5,197.1 1160.0,196.1 1160.5,195.2 1161.0,194.4 1161.5,193.7 1162.0,193.0 1162.5,192.6 1163.0,192.3 1163.5,192.2 1164.0,192.4 1164.5,192.8 1165.0,193.4 1165.5,194.2 1166.0,195.0 1166.5,196.0 1167.0,197.0 1167.5,198.0 1168.0,198.9 1168.5,199.8 1169.0,200.5 1169.5,201.1 1170.0,201.5 1170.5,201.8 1171.0,202.0 1171.5,202.2 1172.0,202.3 1172.5,202.5 1173.0,202.8 1173.5,203.1 1174.0,203.6 1174.5,204.0 1175.0,204.5 1175.5,205.0 1176.0,205.3 1176.5,205.5 1177.0,205.4 1177.5,205.0 1178.0,204.3 1178.5,203.4 1179.0,202.3 1179.5,201.1 1180.0,199.9 1180.5,198.7 1181.0,197.6 1181.5,196.6 1182.0,195.9 1182.5,195.4 1183.0,195.2 1183.5,195.3 1184.0,195.6 1184.5,196.1 1185.0,196.6 1185.5,197.1 1186.0,197.7 1186.5,198.2 1187.0,198.6 1187.5,198.9 1188.0,199.0 1188.5,199.0 1189.0,199.0 1189.5,199.0 1190.0,199.0 1190.5,199.0 1191.0,199.0 1191.5,199.0 1192.0,199.0 1192.5,199.0 1193.0,199.0 1193.5,199.3 1194.0,200.1 1194.5,201.2 1195.0,202.6 1195.5,204.1 1196.0,205.5 1196.5,206.9 1197.0,208.0 1197.5,208.7 1198.0,209.0 1198.5,208.7 1199.0,208.0 1199.5,206.9 1200.0,205.5 1200.5,203.8 1201.0,202.0 1201.5,200.0 1202.0,198.0 1202.5,196.1 1203.0,194.3 1203.5,192.6 1204.0,191.2 1204.5,190.1 1205.0,189.4 1205.5,189.2 1206.0,189.4 1206.5,190.0 1207.0,191.0 1207.5,192.2 1208.0,193.5 1208.5,195.0 1209.0,196.5 1209.5,198.1 1210.0,200.4 1210.5,203.2 1211.0,206.4 1211.5,209.6 1212.0,212.5 1212.5,215.0 1213.0,216.6 1213.5,217.3 1214.0,217.0 1214.5,216.5 1215.0,215.6 1215.5,214.4 1216.0,213.1 1216.5,211.6 1217.0,210.1 1217.5,208.6 1218.0,207.2 1218.5,205.8 1219.0,204.7 1219.5,203.8 1220.0,203.2 1220.5,203.0 1221.0,203.1 1221.5,203.3 1222.0,203.7 1222.5,204.1 1223.0,204.7 1223.5,205.2 1224.0,205.8 1224.5,206.3 1225.0,206.7 1225.5,207.0 1226.0,207.2 1226.5,207.2 1227.0,206.5 1227.5,205.4 1228.0,203.9 1228.5,202.3 1229.0,200.7 1229.5,199.3 1230.0,198.4 1230.5,198.0 1231.0,198.1 1231.5,198.5 1232.0,199.0 1232.5,199.7 1233.0,200.4 1233.5,201.2 1234.0,201.8 1234.5,202.4 1235.0,202.8 1235.5,203.0 1236.0,202.8 1236.5,202.3 1237.0,201.6 1237.5,200.7 1238.0,199.7 1238.5,198.8 1239.0,198.0 1239.5,197.5 1240.0,197.2 1240.5,197.3 1241.0,197.5 1241.5,197.9 1242.0,198.3 1242.5,198.8 1243.0,199.2 1243.5,199.5 1244.0,199.7 1244.5,199.7 1245.0,199.4 1245.5,199.0 1246.0,198.4 1246.5,197.7 1247.0,197.0 1247.5,196.3 1248.0,195.8 1248.5,195.5 1249.0,195.5 1249.5,196.1 1250.0,197.2 1250.5,198.7 1251.0,200.4 1251.5,202.3 1252.0,204.3 1252.5,206.1 1253.0,207.7 1253.5,208.9 1254.0,209.6 1254.5,209.7 1255.0,209.7 1255.5,209.6 1256.0,209.4 1256.5,209.2 1257.0,209.0 1257.5,208.8 1258.0,208.5 1258.5,208.2 1259.0,207.9 1259.5,207.6 1260.0,207.2 1260.5,206.7 1261.0,206.1 1261.5,205.4 1262.0,204.7 1262.5,203.9 1263.0,203.2 1263.5,202.5 1264.0,201.9 1264.5,201.3 1265.0,200.9 1265.5,200.6 1266.0,200.5 1266.5,200.5 1267.0,200.8 1267.5,201.2 1268.0,201.6 1268.5,201.9 1269.0,202.2 1269.5,202.2 1270.0,202.1 1270.5,202.0 1271.0,201.8 1271.5,201.6 1272.0,201.4 1272.5,201.2 1273.0,201.0 1273.5,201.0 1274.0,201.1 1274.5,201.4 1275.0,202.0 1275.5,202.7 1276.0,203.5 1276.5,204.4 1277.0,205.3 1277.5,206.1 1278.0,206.8 1278.5,207.3 1279.0,207.7 1279.5,207.7 1280.0,207.1 1280.5,205.8 1281.0,203.9 1281.5,201.6 1282.0,199.1 1282.5,196.4 1283.0,193.7 1283.5,191.2 1284.0,188.9 1284.5,187.1 1285.0,185.8 1285.5,185.2 1286.0,185.4 1286.5,186.0 1287.0,187.2 1287.5,188.6 1288.0,190.2 1288.5,191.8 1289.0,193.5 1289.5,195.0 1290.0,196.2 1290.5,197.1 1291.0,197.6 1291.5,197.9 1292.0,198.3 1292.5,198.5 1293.0,198.8 1293.5,199.1 1294.0,199.4 1294.5,199.8 1295.0,200.4 1295.5,201.2 1296.0,202.0 1296.5,202.9 1297.0,203.7 1297.5,204.4 1298.0,205.0 1298.5,205.2 1299.0,205.2 1299.5,204.8 1300.0,204.2 1300.5,203.4 1301.0,202.5 1301.5,201.5 1302.0,200.5 1302.5,199.5 1303.0,198.6 1303.5,197.7 1304.0,197.1 1304.5,196.6 1305.0,196.3 1305.5,196.1 1306.0,195.8 1306.5,195.6 1307.0,195.5 1307.5,195.3 1308.0,195.1 1308.5,194.8 1309.0,194.5 1309.5,194.1 1310.0,193.5 1310.5,192.6 1311.0,191.5 1311.5,190.3 1312.0,189.0 1312.5,187.8 1313.0,186.7 1313.5,185.9 1314.0,185.4 1314.5,185.2 1315.0,185.7 1315.5,186.8 1316.0,188.4 1316.5,190.4 1317.0,192.6 1317.5,195.0 1318.0,197.4 1318.5,199.6 1319.0,201.7 1319.5,203.4 1320.0,204.6 1320.5,205.2 1321.0,205.0 1321.5,203.9 1322.0,202.0 1322.5,199.6 1323.0,196.9 1323.5,194.1 1324.0,191.4 1324.5,189.0 1325.0,187.2 1325.5,186.1 1326.0,185.8 1326.5,185.6 1327.0,185.5 1327.5,185.3 1328.0,185.2 1328.5,185.2 1329.0,185.2 1329.5,185.5 1330.0,186.0 1330.5,186.7 1331.0,187.5 1331.5,188.5 1332.0,189.5 1332.5,190.7 1333.0,191.9 1333.5,193.2 1334.0,194.4 1334.5,195.7 1335.0,196.9 1335.5,198.0 1336.0,199.1 1336.5,200.4 1337.0,201.9 1337.5,203.4 1338.0,205.0 1338.5,206.5 1339.0,208.0 1339.5,209.3 1340.0,210.3 1340.5,211.1 1341.0,211.4 1341.5,211.5 1342.0,211.4 1342.5,211.4 1343.0,211.2 1343.5,211.1 1344.0,210.8 1344.5,210.6 1345.0,210.3 1345.5,209.9 1346.0,209.3 1346.5,207.7 1347.0,205.9 1347.5,204.5 1348.0,203.0 1348.5,201.6 1349.0,200.2 1349.5,198.7 1350.0,197.2 1350.5,195.3 1351.0,193.2 1351.5,190.9 1352.0,188.7 1352.5,186.6 1353.0,185.0 1353.5,183.8 1354.0,183.4 1354.5,183.8 1355.0,184.9 1355.5,186.4 1356.0,188.4 1356.5,190.5 1357.0,192.7 1357.5,194.8 1358.0,196.8 1358.5,198.3 1359.0,199.3 1359.5,199.7 1360.0,199.7 1360.5,199.5 1361.0,199.3 1361.5,199.0 1362.0,198.8 1362.5,198.6 1363.0,198.5 1363.5,198.5 1364.0,198.9 1364.5,199.6 1365.0,200.5 1365.5,201.6 1366.0,202.8 1366.5,204.0 1367.0,205.1 1367.5,206.1 1368.0,207.0 1368.5,207.5 1369.0,207.7 1369.5,207.4 1370.0,206.6 1370.5,205.3 1371.0,203.8 1371.5,202.0 1372.0,200.1 1372.5,198.4 1373.0,196.8 1373.5,195.5 1374.0,194.6 1374.5,194.2 1375.0,194.4 1375.5,194.8 1376.0,195.5 1376.5,196.4 1377.0,197.5 1377.5,198.7 1378.0,200.0 1378.5,201.3 1379.0,202.6 1379.5,203.8 1380.0,204.9 1380.5,205.8 1381.0,206.6 1381.5,207.0 1382.0,207.2 1382.5,207.2 1383.0,207.2 1383.5,207.2 1384.0,207.2 1384.5,207.2 1385.0,207.2 1385.5,207.2 1386.0,207.2 1386.5,206.6 1387.0,205.5 1387.5,204.0 1388.0,202.3 1388.5,200.4 1389.0,198.4 1389.5,196.6 1390.0,194.9 1390.5,193.5 1391.0,192.6 1391.5,192.2 1392.0,192.3 1392.5,192.5 1393.0,192.7 1393.5,193.1 1394.0,193.5 1394.5,194.0 1395.0,194.5 1395.5,194.9 1396.0,195.3 1396.5,195.7 1397.0,195.9 1397.5,196.1 1398.0,196.3 1398.5,196.5 1399.0,196.7 1399.5,196.9 1400.0,197.1 1400.5,197.3 1401.0,197.4 1401.5,197.5 1402.0,197.6 1402.5,197.7 1403.0,197.7 1403.5,197.7 1404.0,197.0 1404.5,195.6 1405.0,193.8 1405.5,191.5 1406.0,189.0 1406.5,186.3 1407.0,183.7 1407.5,181.2 1408.0,179.0 1408.5,177.2 1409.0,176.0 1409.5,175.4 1410.0,175.5 1410.5,175.6 1411.0,175.7 1411.5,176.0 1412.0,176.2 1412.5,176.6 1413.0,176.9 1413.5,177.3 1414.0,178.2 1414.5,179.6 1415.0,181.5 1415.5,183.6 1416.0,185.9 1416.5,188.3 1417.0,190.7 1417.5,192.9 1418.0,194.9 1418.5,196.6 1419.0,197.8 1419.5,198.4 1420.0,198.6 1420.5,198.7 1421.0,198.9 1421.5,198.9 1422.0,199.0 1422.5,198.8 1423.0,198.3 1423.5,197.4 1424.0,196.4 1424.5,195.3 1425.0,194.2 1425.5,193.2 1426.0,192.5 1426.5,192.2 1427.0,192.4 1427.5,193.1 1428.0,194.2 1428.5,195.6 1429.0,197.2 1429.5,199.0 1430.0,200.7 1430.5,202.3 1431.0,203.7 1431.5,204.8 1432.0,205.4 1432.5,205.6 1433.0,205.8 1433.5,205.9 1434.0,206.0 1434.5,206.1 1435.0,206.2 1435.5,206.3 1436.0,206.5 1436.5,206.7 1437.0,207.0 1437.5,207.9 1438.0,209.0 1438.5,210.5 1439.0,212.2 1439.5,213.9 1440.0,215.7 1440.5,217.5 1441.0,219.1 1441.5,220.4 1442.0,221.5 1442.5,222.1 1443.0,222.3 1443.5,222.2 1444.0,221.9 1444.5,221.6 1445.0,221.2 1445.5,220.6 1446.0,220.0 1446.5,219.4 1447.0,218.7 1447.5,217.8 1448.0,216.3 1448.5,214.2 1449.0,211.8 1449.5,209.1 1450.0,206.5 1450.5,203.9 1451.0,201.7 1451.5,199.9 1452.0,198.7 1452.5,198.1 1453.0,197.7 1453.5,197.3 1454.0,197.0 1454.5,196.8 1455.0,196.5 1455.5,196.3 1456.0,196.0 1456.5,195.7 1457.0,195.3 1457.5,194.9 1458.0,194.2 1458.5,193.5 1459.0,192.6 1459.5,191.7 1460.0,190.9 1460.5,190.1 1461.0,189.4 1461.5,188.8 1462.0,188.5 1462.5,188.4 1463.0,188.3 1463.5,188.2 1464.0,188.1 1464.5,188.0 1465.0,188.0 1465.5,188.0 1466.0,188.0 1466.5,188.3 1467.0,189.1 1467.5,190.2 1468.0,191.6 1468.5,193.3 1469.0,195.0 1469.5,196.9 1470.0,198.7 1470.5,200.4 1471.0,201.9 1471.5,203.1 1472.0,204.1 1472.5,205.1 1473.0,206.1 1473.5,207.0 1474.0,207.9 1474.5,208.7 1475.0,209.3 1475.5,209.6 1476.0,209.7 1476.5,209.3 1477.0,208.4 1477.5,207.0 1478.0,205.1 1478.5,203.0 1479.0,200.7 1479.5,198.2 1480.0,195.7 1480.5,193.3 1481.0,191.0 1481.5,188.9 1482.0,187.2 1482.5,185.8 1483.0,185.0 1483.5,184.7 1484.0,185.3 1484.5,186.7 1485.0,188.8 1485.5,191.2 1486.0,193.9 1486.5,196.5 1487.0,198.9 1487.5,200.9 1488.0,203.2 1488.5,205.6 1489.0,208.1 1489.5,210.4 1490.0,212.6 1490.5,214.4 1491.0,215.7 1491.5,216.4 1492.0,216.4 1492.5,215.6 1493.0,214.4 1493.5,212.8 1494.0,211.1 1494.5,209.5 1495.0,208.0 1495.5,207.1 1496.0,206.7 1496.5,206.8 1497.0,207.1 1497.5,207.5 1498.0,208.0 1498.5,208.6 1499.0,209.2 1499.5,209.7 1500.0,210.2 1500.5,210.6 1501.0,210.9 1501.5,211.0 1502.0,210.8 1502.5,210.3 1503.0,209.5 1503.5,208.5 1504.0,207.4 1504.5,206.3 1505.0,205.2 1505.5,204.2 1506.0,203.3 1506.5,202.6 1507.0,202.3 1507.5,202.3 1508.0,202.9 1508.5,203.8 1509.0,205.0 1509.5,206.3 1510.0,207.4 1510.5,208.2 1511.0,208.5 1511.5,208.4 1512.0,208.1 1512.5,207.7 1513.0,207.1 1513.5,206.5 1514.0,205.8 1514.5,205.1 1515.0,204.4 1515.5,203.4 1516.0,202.2 1516.5,200.8 1517.0,199.3 1517.5,197.7 1518.0,196.0 1518.5,194.4 1519.0,192.7 1519.5,191.2 1520.0,189.8 1520.5,188.6 1521.0,187.6 1521.5,186.9 1522.0,186.5 1522.5,186.5 1523.0,186.6 1523.5,186.9 1524.0,187.4 1524.5,187.9 1525.0,188.4 1525.5,189.0 1526.0,189.7 1526.5,190.4 1527.0,191.5 1527.5,192.7 1528.0,194.1 1528.5,195.5 1529.0,196.9 1529.5,198.3 1530.0,199.4 1530.5,200.3 1531.0,200.9 1531.5,201.3 1532.0,201.7 1532.5,201.9 1533.0,202.1 1533.5,202.2 1534.0,202.1 1534.5,201.8 1535.0,201.3 1535.5,200.8 1536.0,200.2 1536.5,199.7 1537.0,199.3 1537.5,199.0 1538.0,199.0 1538.5,199.4 1539.0,200.2 1539.5,201.3 1540.0,202.6 1540.5,204.1 1541.0,205.6 1541.5,207.2 1542.0,208.6 1542.5,209.9 1543.0,211.0 1543.5,211.7 1544.0,212.2 1544.5,212.7 1545.0,213.1 1545.5,213.5 1546.0,213.8 1546.5,214.1 1547.0,214.2 1547.5,214.2 1548.0,213.6 1548.5,212.5 1549.0,211.0 1549.5,209.1 1550.0,207.0 1550.5,204.8 1551.0,202.7 1551.5,200.6 1552.0,198.8 1552.5,197.4 1553.0,196.4 1553.5,196.0 1554.0,196.2 1554.5,197.2 1555.0,198.7 1555.5,200.6 1556.0,202.7 1556.5,205.0 1557.0,207.2 1557.5,209.3 1558.0,211.1 1558.5,212.5 1559.0,213.3 1559.5,213.5 1560.0,213.1 1560.5,212.3 1561.0,211.3 1561.5,210.1 1562.0,208.7 1562.5,207.4 1563.0,206.1 1563.5,205.0 1564.0,204.1 1564.5,203.6 1565.0,203.5 1565.5,203.5 1566.0,203.5 1566.5,203.5 1567.0,203.5 1567.5,203.5 1568.0,203.5 1568.5,203.5 1569.0,203.6 1569.5,204.0 1570.0,204.7 1570.5,205.5 1571.0,206.4 1571.5,207.3 1572.0,208.0 1572.5,208.6 1573.0,209.2 1573.5,209.8 1574.0,210.4 1574.5,211.0 1575.0,211.6 1575.5,212.1 1576.0,212.5 1576.5,212.8 1577.0,213.0 1577.5,213.0 1578.0,212.7 1578.5,212.2 1579.0,211.4 1579.5,210.4 1580.0,209.2 1580.5,207.9 1581.0,206.6 1581.5,205.2 1582.0,203.8 1582.5,202.4 1583.0,201.1 1583.5,200.0 1584.0,198.9 1584.5,197.7 1585.0,196.4 1585.5,195.0 1586.0,193.7 1586.5,192.5 1587.0,191.5 1587.5,190.6 1588.0,190.0 1588.5,189.7 1589.0,189.7 1589.5,189.7 1590.0,189.7 1590.5,189.7 1591.0,189.7 1591.5,189.7 1592.0,189.7 1592.5,189.7 1593.0,190.5 1593.5,192.0 1594.0,194.3 1594.5,197.0 1595.0,200.0 1595.5,203.1 1596.0,206.1 1596.5,208.8 1597.0,211.0 1597.5,212.5 1598.0,213.8 1598.5,215.1 1599.0,216.3 1599.5,217.4 1600.0,218.3 1600.5,218.9 1601.0,219.2 1601.5,219.2 1602.0,218.8 1602.5,218.2 1603.0,217.4 1603.5,216.5 1604.0,215.4 1604.5,214.2 1605.0,213.0 1605.5,211.8 1606.0,210.7 1606.5,209.7 1607.0,208.7 1607.5,208.0 1608.0,207.5 1608.5,207.3 1609.0,207.4 1609.5,207.9 1610.0,208.6 1610.5,209.3 1611.0,209.7 1611.5,209.7 1612.0,209.3 1612.5,208.6 1613.0,207.7 1613.5,206.5 1614.0,205.2 1614.5,203.8 1615.0,202.3 1615.5,200.8 1616.0,199.2 1616.5,197.7 1617.0,196.2 1617.5,194.9 1618.0,193.7 1618.5,192.8 1619.0,192.0 1619.5,191.6 1620.0,191.5 1620.5,192.0 1621.0,193.3 1621.5,195.1 1622.0,197.4 1622.5,200.0 1623.0,202.7 1623.5,205.5 1624.0,208.2 1624.5,210.5 1625.0,212.5 1625.5,213.9 1626.0,214.7 1626.5,214.6 1627.0,213.6 1627.5,212.0 1628.0,209.9 1628.5,207.5 1629.0,205.0 1629.5,202.6 1630.0,200.4 1630.5,198.6 1631.0,197.5 1631.5,197.0 1632.0,196.5 1632.5,196.2 1633.0,195.8 1633.5,195.6 1634.0,195.4 1634.5,195.3 1635.0,195.2 1635.5,195.4 1636.0,195.9 1636.5,196.6 1637.0,197.5 1637.5,198.5 1638.0,199.7 1638.5,200.9 1639.0,202.2 1639.5,203.4 1640.0,204.6 1640.5,205.6 1641.0,206.5 1641.5,207.2 1642.0,207.6 1642.5,207.7 1643.0,207.6 1643.5,207.4 1644.0,207.0 1644.5,206.5 1645.0,205.9 1645.5,205.3 1646.0,204.6 1646.5,203.9 1647.0,203.2 1647.5,202.6 1648.0,202.0 1648.5,201.4 1649.0,201.0 1649.5,200.7 1650.0,200.5 1650.5,200.4 1651.0,200.3 1651.5,200.2 1652.0,200.2 1652.5,200.1 1653.0,200.1 1653.5,200.1 1654.0,200.0 1654.5,200.0 1655.0,199.9 1655.5,199.9 1656.0,199.8 1656.5,199.6 1657.0,199.3 1657.5,198.9 1658.0,198.3 1658.5,197.6 1659.0,196.8 1659.5,196.0 1660.0,195.2 1660.5,194.4 1661.0,193.7 1661.5,193.1 1662.0,192.6 1662.5,192.3 1663.0,192.2 1663.5,192.4 1664.0,192.8 1664.5,193.6 1665.0,194.5 1665.5,195.6 1666.0,196.8 1666.5,198.1 1667.0,199.5 1667.5,200.8 1668.0,202.0 1668.5,203.1 1669.0,204.1 1669.5,204.8 1670.0,205.3 1670.5,205.5 1671.0,205.5 1671.5,205.5 1672.0,205.5 1672.5,205.5 1673.0,205.5 1673.5,205.5 1674.0,205.5 1674.5,205.4 1675.0,205.3 1675.5,205.1 1676.0,204.9 1676.5,204.7 1677.0,204.4 1677.5,204.1 1678.0,203.7 1678.5,203.4 1679.0,203.0 1679.5,202.6 1680.0,202.3 1680.5,201.8 1681.0,201.2 1681.5,200.4 1682.0,199.6 1682.5,198.6 1683.0,197.6 1683.5,196.5 1684.0,195.4 1684.5,194.3 1685.0,193.3 1685.5,192.3 1686.0,191.3 1686.5,190.5 1687.0,189.7 1687.5,189.1 1688.0,188.7 1688.5,188.5 1689.0,188.5 1689.5,189.3 1690.0,190.7 1690.5,192.6 1691.0,194.8 1691.5,197.2 1692.0,199.7 1692.5,201.9 1693.0,203.9 1693.5,205.4 1694.0,206.3 1694.5,207.0 1695.0,207.7 1695.5,208.3 1696.0,208.8 1696.5,209.1 1697.0,209.2 1697.5,209.1 1698.0,208.8 1698.5,208.3 1699.0,207.6 1699.5,206.8 1700.0,205.8 1700.5,204.8 1701.0,203.8 1701.5,202.7 1702.0,201.7 1702.5,200.7 1703.0,199.8 1703.5,199.1 1704.0,198.4 1704.5,198.0 1705.0,197.7 1705.5,197.6 1706.0,197.6 1706.5,197.5 1707.0,197.4 1707.5,197.4 1708.0,197.3 1708.5,197.3 1709.0,197.2 1709.5,197.2 1710.0,197.2 1710.5,197.3 1711.0,197.4 1711.5,197.7 1712.0,198.1 1712.5,198.5 1713.0,198.9 1713.5,199.3 1714.0,199.8 1714.5,200.2 1715.0,200.5 1715.5,200.8 1716.0,200.9 1716.5,201.0 1717.0,200.8 1717.5,200.6 1718.0,200.2 1718.5,199.6 1719.0,199.1 1719.5,198.4 1720.0,197.7 1720.5,196.9 1721.0,196.2 1721.5,195.4 1722.0,194.7 1722.5,194.1 1723.0,193.5 1723.5,193.0 1724.0,192.6 1724.5,192.3 1725.0,192.2 1725.5,192.4 1726.0,193.1 1726.5,194.3 1727.0,195.9 1727.5,197.7 1728.0,199.8 1728.5,202.1 1729.0,204.4 1729.5,206.7 1730.0,209.0 1730.5,211.0 1731.0,212.8 1731.5,214.3 1732.0,215.4 1732.5,215.9 1733.0,216.1 1733.5,216.3 1734.0,216.4 1734.5,216.5 1735.0,216.5 1735.5,216.3 1736.0,215.4 1736.5,213.9 1737.0,212.0 1737.5,209.9 1738.0,207.8 1738.5,205.8 1739.0,204.1 1739.5,202.9 1740.0,202.3 1740.5,202.3 1741.0,202.8 1741.5,203.5 1742.0,204.4 1742.5,205.4 1743.0,206.5 1743.5,207.5 1744.0,208.3 1744.5,208.9 1745.0,209.2 1745.5,209.2 1746.0,209.0 1746.5,208.8 1747.0,208.6 1747.5,208.5 1748.0,208.6 1748.5,208.9 1749.0,209.5 1749.5,210.1 1750.0,210.9 1750.5,211.6 1751.0,212.3 1751.5,212.7 1752.0,213.0 1752.5,213.0 1753.0,212.8 1753.5,212.6 1754.0,212.3 1754.5,211.9 1755.0,211.5 1755.5,211.1 1756.0,210.6 1756.5,209.8 1757.0,208.8 1757.5,207.7 1758.0,206.6 1758.5,205.5 1759.0,204.5 1759.5,203.9 1760.0,203.5 1760.5,203.6 1761.0,203.9 1761.5,204.5 1762.0,205.3 1762.5,206.1 1763.0,206.9 1763.5,207.6 1764.0,208.2 1764.5,208.5 1765.0,208.5 1765.5,208.4 1766.0,208.2 1766.5,208.0 1767.0,207.7 1767.5,207.3 1768.0,206.9 1768.5,206.5 1769.0,206.0 1769.5,205.5 1770.0,204.9 1770.5,204.3 1771.0,203.3 1771.5,202.1 1772.0,200.6 1772.5,199.0 1773.0,197.4 1773.5,195.9 1774.0,194.6 1774.5,193.3 1775.0,192.0 1775.5,190.8 1776.0,189.5" fill="none" stroke="#8080ff" stroke-width="1" stroke-linejoin="round" shape-rendering="crispEdges" clip-path="url(#cp0)"/>
<path d="M68 330h1v5h-1zM142 330h1v5h-1zM216 327h1v8h-1zM290 330h1v5h-1zM364 330h1v5h-1zM438 330h1v5h-1zM512 330h1v5h-1zM586 327h1v8h-1zM660 330h1v5h-1zM734 330h1v5h-1zM808 330h1v5h-1zM882 330h1v5h-1zM956 327h1v8h-1zM1030 330h1v5h-1zM1104 330h1v5h-1zM1178 330h1v5h-1zM1252 330h1v5h-1zM1326 327h1v8h-1zM1400 330h1v5h-1zM1474 330h1v5h-1zM1548 330h1v5h-1zM1622 330h1v5h-1zM1696 327h1v8h-1zM1770 330h1v5h-1z" fill="#ffffff"/>
<rect x="10" y="335" width="1767" height="1" fill="#ffffff"/>
<path d="M10.0,484.2 10.5,485.0 11.0,485.6 11.5,486.1 12.0,486.4 12.5,486.7 13.0,486.9 13.5,487.0 14.0,487.0 14.5,486.8 15.0,486.5 15.5,486.1 16.0,485.5 16.5,484.9 17.0,484.2 17.5,483.4 18.0,482.5 18.5,481.3 19.0,479.4 19.5,477.0 20.0,474.5 20.5,472.0 21.0,469.8 21.5,467.9 22.0,465.9 22.5,463.9 23.0,462.0 23.5,460.2 24.0,458.8 24.5,457.8 25.0,457.5 25.5,457.6 26.0,458.0 26.5,458.6 27.0,459.4 27.5,460.3 28.0,461.2 28.5,462.3 29.0,463.9 29.5,465.7 30.0,467.6 30.5,469.2 31.0,470.4 31.5,470.9 32.0,471.3 32.5,471.7 33.0,472.0 33.5,472.3 34.0,472.4 34.5,472.5 35.0,472.4 35.5,472.1 36.0,471.6 36.5,471.0 37.0,470.4 37.5,469.7 38.0,469.0 38.5,468.4 39.0,467.9 39.5,467.6 40.0,467.5 40.5,467.5 41.0,467.6 41.5,467.7 42.0,467.9 42.5,468.1 43.0,468.3 43.5,468.6 44.0,468.9 44.5,469.7 45.0,470.8 45.5,472.0 46.0,473.2 46.5,474.1 47.0,474.5 47.5,474.1 48.0,472.9 48.5,471.3 49.0,469.4 49.5,467.6 50.0,466.3 50.5,465.4 51.0,464.5 51.5,463.6 52.0,462.8 52.5,462.1 53.0,461.6 53.5,461.3 54.0,461.3 54.5,462.0 55.0,463.4 55.5,465.3 56.0,467.3 56.5,469.6 57.0,473.3 57.5,478.2 58.0,483.8 58.5,489.3 59.0,494.1 59.5,497.6 60.0,499.2 60.5,498.8 61.0,497.3 61.5,495.0 62.0,492.1 62.5,488.9 63.0,485.7 63.5,482.7 64.0,480.1 64.5,478.3 65.0,477.5 65.5,477.6 66.0,478.0 66.5,478.6 67.0,479.4 67.5,480.2 68.0,481.1 68.5,481.7 69.0,482.3 69.5,482.5 70.0,482.2 70.5,481.2 71.0,479.6 71.5,477.5 72.0,475.1 72.5,472.5 73.0,469.8 73.5,467.2 74.0,464.7 74.5,462.7 75.0,461.1 75.5,460.2 76.0,460.0 76.5,460.2 77.0,460.7 77.5,461.3 78.0,462.0 78.5,462.7 79.0,463.4 79.5,464.1 80.0,465.0 80.5,466.0 81.0,467.0 81.5,468.1 82.0,469.2 82.5,470.3 83.0,471.3 83.5,472.3 84.0,473.2 84.5,474.0 85.0,474.7 85.5,475.1 86.0,475.4 86.5,475.5 87.0,475.1 87.5,474.3 88.0,473.1 88.5,471.6 89.0,470.0 89.5,468.3 90.0,466.7 90.5,465.0 91.0,463.6 91.5,462.4 92.0,461.6 92.5,461.2 93.0,461.5 93.5,462.5 94.0,464.2 94.5,466.3 95.0,468.7 95.5,471.1 96.0,473.4 96.5,475.3 97.0,476.8 97.5,477.4 98.0,477.2 98.5,476.1 99.0,474.2 99.5,471.9 100.0,469.4 100.5,467.0 101.0,464.9 101.5,463.3 102.0,462.5 102.5,462.5 103.0,462.8 103.5,463.4 104.0,464.0 104.5,464.7 105.0,465.7 105.5,467.4 106.0,469.5 106.5,471.8 107.0,474.0 107.5,475.8 108.0,476.8 108.5,477.2 109.0,477.4 109.5,477.6 110.0,477.8 110.5,477.9 111.0,478.1 111.5,478.1 112.0,478.2 112.5,478.2 113.0,478.0 113.5,477.1 114.0,475.6 114.5,473.7 115.0,471.5 115.5,469.4 116.0,467.2 116.5,464.2 117.0,460.8 117.5,457.3 118.0,454.3 118.5,452.1 119.0,451.1 119.5,450.7 120.0,450.4 120.5,450.1 121.0,449.8 121.5,449.6 122.0,449.5 122.5,449.4 123.0,449.5 123.5,449.7 124.0,450.1 124.5,450.7 125.0,451.4 125.5,452.1 126.0,452.9 126.5,453.8 127.0,454.9 127.5,456.4 128.0,458.2 128.5,460.2 129.0,462.4 129.5,464.5 130.0,466.6 130.5,468.8 131.0,471.4 131.5,474.3 132.0,477.3 132.5,480.3 133.0,482.9 133.5,485.0 134.0,486.3 134.5,486.7 135.0,486.3 135.5,485.1 136.0,483.3 136.5,481.3 137.0,479.0 137.5,476.7 138.0,474.5 138.5,472.6 139.0,471.1 139.5,469.9 140.0,468.6 140.5,467.4 141.0,466.2 141.5,465.3 142.0,464.6 142.5,464.3 143.0,464.2 143.5,464.3 144.0,464.5 144.5,464.6 145.0,464.8 145.5,464.9 146.0,465.0 146.5,464.7 147.0,464.1 147.5,463.1 148.0,461.9 148.5,460.4 149.0,458.8 149.5,457.2 150.0,455.5 150.5,453.9 151.0,452.4 151.5,451.1 152.0,449.9 152.5,448.5 153.0,447.0 153.5,445.5 154.0,444.0 154.5,442.6 155.0,441.3 155.5,440.1 156.0,439.2 156.5,438.6 157.0,438.2 157.5,438.3 158.0,438.8 158.5,439.9 159.0,441.2 159.5,442.8 160.0,444.9 160.5,449.2 161.0,455.3 161.5,462.6 162.0,470.2 162.5,477.4 163.0,483.5 163.5,487.7 164.0,489.3 164.5,489.0 165.0,488.2 165.5,487.2 166.0,485.8 166.5,484.4 167.0,482.9 167.5,481.6 168.0,480.5 168.5,479.8 169.0,479.5 169.5,479.7 170.0,480.2 170.5,480.9 171.0,481.8 171.5,482.8 172.0,483.8 172.5,484.8 173.0,485.5 173.5,486.0 174.0,486.3 174.5,485.7 175.0,484.0 175.5,481.7 176.0,479.0 176.5,476.3 177.0,473.1 177.5,468.6 178.0,463.6 178.5,458.4 179.0,453.7 179.5,450.0 180.0,447.8 180.5,447.5 181.0,447.9 181.5,448.6 182.0,449.5 182.5,450.6 183.0,451.8 183.5,454.0 184.0,457.0 184.5,460.4 185.0,463.9 185.5,467.1 186.0,469.6 186.5,471.2 187.0,472.0 187.5,472.7 188.0,473.3 188.5,473.8 189.0,474.1 189.5,474.2 190.0,474.0 190.5,473.3 191.0,472.2 191.5,470.8 192.0,469.2 192.5,467.5 193.0,465.8 193.5,464.3 194.0,462.9 194.5,461.9 195.0,461.3 195.5,461.3 196.0,461.8 196.5,462.9 197.0,464.4 197.5,466.2 198.0,468.1 198.5,470.2 199.0,472.2 199.5,474.0 200.0,475.5 200.5,476.6 201.0,477.8 201.5,478.9 202.0,480.0 202.5,481.1 203.0,482.0 203.5,482.8 204.0,483.4 204.5,483.7 205.0,483.7 205.5,483.2 206.0,482.3 206.5,481.0 207.0,479.4 207.5,477.7 208.0,475.8 208.5,474.0 209.0,472.0 209.5,469.2 210.0,465.9 210.5,462.3 211.0,458.5 211.5,454.8 212.0,451.3 212.5,448.2 213.0,445.7 213.5,444.0 214.0,443.2 214.5,443.3 215.0,443.9 215.5,444.8 216.0,445.9 216.5,447.2 217.0,449.1 217.5,452.4 218.0,456.4 218.5,460.5 219.0,464.1 219.5,466.4 220.0,466.9 220.5,466.4 221.0,465.3 221.5,463.7 222.0,461.9 222.5,460.0 223.0,458.1 223.5,455.4 224.0,451.9 224.5,448.1 225.0,444.3 225.5,441.0 226.0,438.6 226.5,437.5 227.0,437.5 227.5,438.0 228.0,438.8 228.5,439.8 229.0,440.9 229.5,442.0 230.0,443.1 230.5,444.0 231.0,444.6 231.5,444.9 232.0,444.8 232.5,444.2 233.0,443.5 233.5,442.8 234.0,442.4 234.5,442.6 235.0,443.3 235.5,444.5 236.0,446.0 236.5,447.7 237.0,449.5 237.5,451.2 238.0,452.8 238.5,454.5 239.0,456.3 239.5,458.1 240.0,460.1 240.5,462.1 241.0,464.1 241.5,466.0 242.0,468.0 242.5,469.9 243.0,471.7 243.5,473.6 244.0,475.6 244.5,477.8 245.0,480.0 245.5,482.1 246.0,484.1 246.5,485.8 247.0,487.3 247.5,488.4 248.0,489.1 248.5,489.2 249.0,488.2 249.5,486.0 250.0,483.0 250.5,479.6 251.0,475.9 251.5,472.4 252.0,469.4 252.5,467.2 253.0,466.1 253.5,465.4 254.0,464.9 254.5,464.4 255.0,464.0 255.5,463.8 256.0,463.7 256.5,464.0 257.0,464.7 257.5,465.7 258.0,466.9 258.5,468.2 259.0,469.7 259.5,471.2 260.0,472.6 260.5,474.0 261.0,475.1 261.5,476.0 262.0,476.7 262.5,477.3 263.0,477.9 263.5,478.5 264.0,478.9 264.5,479.2 265.0,479.2 265.5,479.0 266.0,478.6 266.5,477.8 267.0,476.9 267.5,475.9 268.0,474.7 268.5,473.4 269.0,472.2 269.5,470.9 270.0,469.6 270.5,468.5 271.0,467.5 271.5,466.6 272.0,466.0 272.5,465.6 273.0,465.5 273.5,465.6 274.0,465.8 274.5,466.2 275.0,466.7 275.5,467.2 276.0,467.8 276.5,468.5 277.0,469.3 277.5,470.7 278.0,472.5 278.5,474.7 279.0,477.0 279.5,479.4 280.0,481.5 280.5,483.4 281.0,484.7 281.5,485.4 282.0,485.4 282.5,485.0 283.0,484.3 283.5,483.2 284.0,482.0 284.5,480.6 285.0,479.0 285.5,477.3 286.0,475.7 286.5,474.0 287.0,472.4 287.5,470.9 288.0,469.6 288.5,468.5 289.0,467.7 289.5,467.1 290.0,467.0 290.5,467.2 291.0,467.9 291.5,468.9 292.0,470.1 292.5,471.5 293.0,473.0 293.5,474.6 294.0,476.2 294.5,477.6 295.0,478.9 295.5,480.0 296.0,480.8 296.5,481.2 297.0,481.2 297.5,480.9 298.0,480.4 298.5,479.8 299.0,479.0 299.5,478.1 300.0,477.1 300.5,476.2 301.0,475.0 301.5,473.4 302.0,471.5 302.5,469.6 303.0,467.8 303.5,466.3 304.0,465.3 304.5,464.7 305.0,464.4 305.5,464.1 306.0,463.9 306.5,463.7 307.0,463.6 307.5,463.4 308.0,463.2 308.5,462.9 309.0,462.6 309.5,462.2 310.0,461.6 310.5,460.7 311.0,459.6 311.5,458.4 312.0,457.2 312.5,456.0 313.0,454.9 313.5,453.9 314.0,453.1 314.5,452.6 315.0,452.4 315.5,452.6 316.0,453.0 316.5,453.7 317.0,454.5 317.5,455.3 318.0,456.2 318.5,457.3 319.0,458.7 319.5,460.4 320.0,462.3 320.5,464.3 321.0,466.2 321.5,467.9 322.0,469.4 322.5,470.6 323.0,471.2 323.5,471.6 324.0,471.9 324.5,472.2 325.0,472.4 325.5,472.7 326.0,472.9 326.5,473.0 327.0,473.1 327.5,473.2 328.0,473.2 328.5,473.1 329.0,472.7 329.5,472.3 330.0,471.8 330.5,471.4 331.0,471.2 331.5,471.5 332.0,472.3 332.5,473.5 333.0,475.0 333.5,476.6 334.0,478.3 334.5,479.9 335.0,481.3 335.5,482.4 336.0,483.3 336.5,484.2 337.0,485.1 337.5,485.9 338.0,486.6 338.5,487.1 339.0,487.4 339.5,487.5 340.0,487.4 340.5,487.2 341.0,487.0 341.5,486.7 342.0,486.3 342.5,485.8 343.0,485.3 343.5,484.7 344.0,484.1 344.5,483.4 345.0,482.3 345.5,480.7 346.0,478.8 346.5,476.5 347.0,474.1 347.5,471.5 348.0,468.9 348.5,466.3 349.0,463.9 349.5,461.6 350.0,459.0 350.5,456.1 351.0,453.1 351.5,450.1 352.0,447.5 352.5,445.3 353.0,443.8 353.5,443.2 354.0,443.4 354.5,444.2 355.0,445.4 355.5,446.9 356.0,448.5 356.5,450.5 357.0,453.4 357.5,457.1 358.0,461.3 358.5,465.6 359.0,469.8 359.5,473.7 360.0,476.8 360.5,479.0 361.0,480.0 361.5,479.8 362.0,479.3 362.5,478.4 363.0,477.4 363.5,476.4 364.0,475.5 364.5,474.8 365.0,474.5 365.5,474.7 366.0,475.7 366.5,477.3 367.0,479.3 367.5,481.7 368.0,484.3 368.5,487.0 369.0,489.8 369.5,492.4 370.0,494.7 370.5,496.7 371.0,498.2 371.5,499.1 372.0,499.2 372.5,498.7 373.0,497.4 373.5,495.7 374.0,493.6 374.5,491.2 375.0,488.7 375.5,486.1 376.0,483.6 376.5,481.3 377.0,479.3 377.5,477.8 378.0,476.5 378.5,475.3 379.0,474.1 379.5,473.0 380.0,472.2 380.5,471.5 381.0,471.2 381.5,471.3 382.0,471.7 382.5,472.3 383.0,473.1 383.5,474.0 384.0,475.0 384.5,476.0 385.0,476.9 385.5,477.7 386.0,478.3 386.5,478.6 387.0,478.7 387.5,478.4 388.0,477.7 388.5,476.8 389.0,475.6 389.5,474.2 390.0,472.6 390.5,471.0 391.0,469.4 391.5,467.8 392.0,466.3 392.5,465.0 393.0,463.9 393.5,463.1 394.0,462.6 394.5,462.5 395.0,462.8 395.5,463.5 396.0,464.6 396.5,465.9 397.0,467.5 397.5,469.2 398.0,471.0 398.5,472.8 399.0,474.5 399.5,476.1 400.0,477.6 400.5,478.8 401.0,479.8 401.5,480.3 402.0,480.5 402.5,480.3 403.0,479.8 403.5,479.1 404.0,478.2 404.5,477.2 405.0,476.2 405.5,475.1 406.0,474.1 406.5,473.2 407.0,472.5 407.5,472.0 408.0,471.7 408.5,471.8 409.0,472.3 409.5,473.0 410.0,473.9 410.5,474.9 411.0,475.9 411.5,476.9 412.0,477.8 412.5,478.4 413.0,478.7 413.5,478.7 414.0,478.7 414.5,478.6 415.0,478.4 415.5,478.3 416.0,478.1 416.5,477.5 417.0,476.8 417.5,475.8 418.0,474.7 418.5,473.4 419.0,472.1 419.5,470.7 420.0,469.3 420.5,468.0 421.0,466.8 421.5,465.7 422.0,464.9 422.5,464.0 423.0,463.1 423.5,462.2 424.0,461.3 424.5,460.5 425.0,459.7 425.5,458.9 426.0,458.2 426.5,457.6 427.0,457.2 427.5,456.9 428.0,456.7 428.5,456.7 429.0,456.9 429.5,457.3 430.0,457.8 430.5,458.4 431.0,459.1 431.5,459.8 432.0,460.5 432.5,461.6 433.0,463.1 433.5,465.0 434.0,467.2 434.5,469.5 435.0,471.9 435.5,474.2 436.0,476.4 436.5,478.3 437.0,479.9 437.5,481.1 438.0,481.7 438.5,481.7 439.0,481.5 439.5,481.0 440.0,480.5 440.5,479.8 441.0,478.9 441.5,478.1 442.0,477.2 442.5,476.3 443.0,475.4 443.5,474.5 444.0,473.6 444.5,472.7 445.0,471.7 445.5,470.7 446.0,469.7 446.5,468.6 447.0,467.4 447.5,466.2 448.0,464.9 448.5,463.6 449.0,462.2 449.5,460.7 450.0,459.1 450.5,457.1 451.0,454.5 451.5,451.5 452.0,448.4 452.5,445.3 453.0,442.5 453.5,440.2 454.0,438.7 454.5,438.2 455.0,438.5 455.5,439.4 456.0,440.6 456.5,442.1 457.0,443.7 457.5,445.9 458.0,449.0 458.5,452.9 459.0,457.3 459.5,462.0 460.0,466.6 460.5,470.9 461.0,474.7 461.5,477.8 462.0,479.8 462.5,480.5 463.0,480.4 463.5,480.3 464.0,480.1 464.5,479.9 465.0,479.6 465.5,479.4 466.0,479.1 466.5,478.9 467.0,478.8 467.5,478.7 468.0,478.9 468.5,479.2 469.0,479.6 469.5,480.0 470.0,480.4 470.5,480.5 471.0,480.5 471.5,480.4 472.0,480.2 472.5,480.0 473.0,479.8 473.5,479.5 474.0,479.2 474.5,478.8 475.0,478.5 475.5,478.1 476.0,477.7 476.5,477.3 477.0,476.7 477.5,475.9 478.0,475.0 478.5,474.0 479.0,473.1 479.5,472.2 480.0,471.4 480.5,470.9 481.0,470.5 481.5,470.5 482.0,470.7 482.5,471.0 483.0,471.4 483.5,471.8 484.0,472.3 484.5,472.8 485.0,473.2 485.5,473.5 486.0,473.7 486.5,473.7 487.0,473.1 487.5,472.1 488.0,470.7 488.5,469.1 489.0,467.4 489.5,465.8 490.0,464.3 490.5,463.2 491.0,462.6 491.5,462.5 492.0,462.9 492.5,463.8 493.0,464.9 493.5,466.2 494.0,467.7 494.5,469.2 495.0,470.7 495.5,472.1 496.0,473.2 496.5,474.0 497.0,474.5 497.5,474.6 498.0,474.7 498.5,474.9 499.0,475.0 499.5,475.1 500.0,475.2 500.5,475.2 501.0,475.3 501.5,475.4 502.0,475.4 502.5,475.4 503.0,475.5 503.5,475.5 504.0,475.5 504.5,475.2 505.0,474.8 505.5,474.2 506.0,473.6 506.5,472.9 507.0,472.2 507.5,471.6 508.0,471.1 508.5,470.8 509.0,470.7 509.5,470.9 510.0,471.1 510.5,471.5 511.0,471.8 511.5,472.1 512.0,472.4 512.5,472.5 513.0,472.2 513.5,471.2 514.0,469.7 514.5,467.9 515.0,465.9 515.5,464.0 516.0,462.0 516.5,459.4 517.0,456.4 517.5,453.2 518.0,450.1 518.5,447.3 519.0,444.9 519.5,443.2 520.0,442.5 520.5,442.6 521.0,443.4 521.5,444.6 522.0,446.1 522.5,447.7 523.0,449.4 523.5,451.0 524.0,452.3 524.5,453.2 525.0,453.7 525.5,453.7 526.0,453.6 526.5,453.6 527.0,453.5 527.5,453.3 528.0,453.2 528.5,453.1 529.0,453.0 529.5,453.0 530.0,452.9 530.5,453.0 531.0,453.1 531.5,453.4 532.0,453.8 532.5,454.2 533.0,454.7 533.5,455.3 534.0,455.9 534.5,456.6 535.0,457.3 535.5,458.1 536.0,459.2 536.5,460.6 537.0,462.1 537.5,463.8 538.0,465.6 538.5,467.4 539.0,469.1 539.5,470.7 540.0,472.1 540.5,473.4 541.0,474.5 541.5,475.6 542.0,476.6 542.5,477.6 543.0,478.6 543.5,479.5 544.0,480.5 544.5,481.5 545.0,482.5 545.5,483.6 546.0,484.8 546.5,486.0 547.0,487.6 547.5,489.5 548.0,491.5 548.5,493.5 549.0,495.4 549.5,497.0 550.0,498.2 550.5,498.7 551.0,498.2 551.5,495.7 552.0,491.7 552.5,486.7 553.0,481.4 553.5,476.2 554.0,471.6 554.5,466.6 555.0,460.9 555.5,455.1 556.0,449.5 556.5,444.6 557.0,441.1 557.5,439.3 558.0,439.2 558.5,439.6 559.0,440.1 559.5,440.9 560.0,441.8 560.5,442.7 561.0,443.7 561.5,444.7 562.0,445.6 562.5,446.4 563.0,447.0 563.5,447.3 564.0,447.4 564.5,447.4 565.0,447.4 565.5,447.4 566.0,447.4 566.5,447.4 567.0,447.4 567.5,447.4 568.0,447.5 568.5,447.9 569.0,448.5 569.5,449.3 570.0,450.4 570.5,451.6 571.0,452.9 571.5,454.4 572.0,455.8 572.5,457.3 573.0,458.7 573.5,460.1 574.0,461.4 574.5,462.7 575.0,464.2 575.5,465.8 576.0,467.5 576.5,469.2 577.0,471.0 577.5,472.7 578.0,474.4 578.5,476.0 579.0,477.5 579.5,478.8 580.0,479.9 580.5,480.8 581.0,481.4 581.5,481.8 582.0,481.9 582.5,482.0 583.0,482.1 583.5,482.1 584.0,482.3 584.5,482.4 585.0,482.9 585.5,484.6 586.0,486.3 586.5,487.0 587.0,485.5 587.5,482.4 588.0,478.6 588.5,475.4 589.0,473.7 589.5,473.0 590.0,472.3 590.5,471.7 591.0,471.1 591.5,470.6 592.0,470.1 592.5,469.6 593.0,469.2 593.5,468.9 594.0,468.6 594.5,468.3 595.0,468.1 595.5,467.9 596.0,467.7 596.5,467.6 597.0,467.5 597.5,467.5 598.0,467.6 598.5,468.3 599.0,469.6 599.5,471.5 600.0,473.6 600.5,476.1 601.0,478.7 601.5,481.4 602.0,484.0 602.5,486.5 603.0,488.6 603.5,490.4 604.0,491.7 604.5,492.4 605.0,492.4 605.5,491.7 606.0,490.3 606.5,488.5 607.0,486.3 607.5,483.9 608.0,481.2 608.5,478.6 609.0,476.1 609.5,473.7 610.0,471.7 610.5,470.1 611.0,469.1 611.5,468.7 612.0,468.9 612.5,469.5 613.0,470.4 613.5,471.5 614.0,472.8 614.5,474.2 615.0,475.7 615.5,477.2 616.0,478.5 616.5,479.8 617.0,480.8 617.5,481.5 618.0,481.9 618.5,482.0 619.0,481.8 619.5,481.5 620.0,481.0 620.5,480.4 621.0,479.7 621.5,479.0 622.0,478.1 622.5,477.3 623.0,476.4 623.5,475.5 624.0,474.6 624.5,473.8 625.0,473.0 625.5,472.4 626.0,471.8 626.5,471.3 627.0,470.9 627.5,470.8 628.0,470.8 628.5,471.0 629.0,471.5 629.5,472.2 630.0,473.0 630.5,473.8 631.0,474.6 631.5,475.3 632.0,475.9 632.5,476.2 633.0,476.2 633.5,475.8 634.0,475.1 634.5,474.2 635.0,473.1 635.5,471.9 636.0,470.7 636.5,468.9 637.0,466.6 637.5,464.0 638.0,461.1 638.5,458.1 639.0,455.1 639.5,452.4 640.0,449.9 640.5,448.0 641.0,446.7 641.5,446.2 642.0,446.4 642.5,446.9 643.0,447.8 643.5,448.8 644.0,449.8 644.5,451.2 645.0,453.3 645.5,455.9 646.0,458.9 646.5,462.1 647.0,465.3 647.5,468.4 648.0,471.3 648.5,473.7 649.0,475.5 649.5,476.5 650.0,476.6 650.5,475.3 651.0,472.7 651.5,469.4 652.0,465.8 652.5,462.2 653.0,459.0 653.5,456.7 654.0,455.7 654.5,456.0 655.0,457.2 655.5,458.9 656.0,461.0 656.5,463.4 657.0,465.9 657.5,468.2 658.0,470.2 658.5,471.6 659.0,472.4 659.5,472.7 660.0,472.8 660.5,473.0 661.0,473.1 661.5,473.2 662.0,473.2 662.5,473.3 663.0,473.4 663.5,473.5 664.0,473.7 664.5,473.9 665.0,474.2 665.5,474.6 666.0,475.0 666.5,475.4 667.0,475.8 667.5,476.1 668.0,476.4 668.5,476.6 669.0,476.7 669.5,476.7 670.0,476.4 670.5,476.1 671.0,475.6 671.5,475.1 672.0,474.4 672.5,473.4 673.0,472.1 673.5,470.6 674.0,468.9 674.5,467.1 675.0,465.4 675.5,463.7 676.0,462.2 676.5,460.9 677.0,459.9 677.5,459.3 678.0,459.2 678.5,459.8 679.0,461.0 679.5,462.8 680.0,464.9 680.5,467.5 681.0,470.2 681.5,473.1 682.0,476.0 682.5,478.8 683.0,481.4 683.5,483.7 684.0,485.7 684.5,487.2 685.0,488.0 685.5,488.2 686.0,487.8 686.5,486.9 687.0,485.6 687.5,484.0 688.0,482.1 688.5,480.0 689.0,477.7 689.5,475.4 690.0,473.2 690.5,471.0 691.0,469.0 691.5,467.2 692.0,465.7 692.5,464.6 693.0,463.9 693.5,463.7 694.0,464.0 694.5,464.5 695.0,465.4 695.5,466.4 696.0,467.5 696.5,468.7 697.0,470.0 697.5,471.2 698.0,472.3 698.5,473.2 699.0,473.9 699.5,474.4 700.0,474.5 700.5,474.2 701.0,473.6 701.5,472.7 702.0,471.7 702.5,470.5 703.0,469.2 703.5,468.0 704.0,466.9 704.5,465.9 705.0,465.1 705.5,464.6 706.0,464.5 706.5,464.9 707.0,465.8 707.5,467.1 708.0,468.8 708.5,470.7 709.0,472.9 709.5,475.1 710.0,477.4 710.5,479.7 711.0,481.8 711.5,483.8 712.0,485.4 712.5,486.7 713.0,487.6 713.5,488.3 714.0,489.0 714.5,489.7 715.0,490.3 715.5,490.9 716.0,491.4 716.5,491.9 717.0,492.4 717.5,492.7 718.0,493.0 718.5,493.2 719.0,493.3 719.5,493.1 720.0,492.1 720.5,490.4 721.0,488.2 721.5,485.6 722.0,482.8 722.5,479.9 723.0,477.0 723.5,474.3 724.0,472.0 724.5,470.2 725.0,469.1 725.5,468.7 726.0,468.9 726.5,469.2 727.0,469.7 727.5,470.2 728.0,470.6 728.5,471.0 729.0,471.2 729.5,471.2 730.0,470.8 730.5,470.2 731.0,469.3 731.5,468.3 732.0,467.2 732.5,466.0 733.0,464.8 733.5,463.3 734.0,461.3 734.5,459.0 735.0,456.6 735.5,454.2 736.0,452.0 736.5,450.2 737.0,449.1 737.5,448.7 738.0,449.4 738.5,450.9 739.0,453.2 739.5,455.7 740.0,458.3 740.5,460.7 741.0,462.6 741.5,463.6 742.0,463.7 742.5,463.5 743.0,463.3 743.5,463.0 744.0,462.6 744.5,462.3 745.0,461.9 745.5,461.6 746.0,461.3 746.5,461.2 747.0,461.3 747.5,461.6 748.0,462.3 748.5,463.3 749.0,464.4 749.5,465.8 750.0,467.2 750.5,468.8 751.0,471.1 751.5,474.5 752.0,478.7 752.5,483.3 753.0,487.8 753.5,491.8 754.0,495.1 754.5,497.4 755.0,499.5 755.5,501.6 756.0,503.5 756.5,505.2 757.0,506.7 757.5,507.8 758.0,508.5 758.5,508.8 759.0,508.2 759.5,506.5 760.0,504.0 760.5,500.9 761.0,497.3 761.5,493.4 762.0,489.5 762.5,485.7 763.0,482.2 763.5,479.2 764.0,477.0 764.5,475.6 765.0,474.3 765.5,473.0 766.0,471.8 766.5,470.7 767.0,469.7 767.5,468.9 768.0,468.2 768.5,467.8 769.0,467.5 769.5,467.5 770.0,467.9 770.5,468.7 771.0,469.7 771.5,470.8 772.0,472.0 772.5,473.2 773.0,474.2 773.5,475.0 774.0,475.4 774.5,475.4 775.0,475.0 775.5,474.3 776.0,473.3 776.5,472.1 777.0,470.7 777.5,469.2 778.0,467.8 778.5,466.3 779.0,465.0 779.5,463.9 780.0,463.0 780.5,462.5 781.0,462.1 781.5,461.8 782.0,461.5 782.5,461.1 783.0,460.9 783.5,460.6 784.0,460.3 784.5,460.1 785.0,459.9 785.5,459.8 786.0,459.6 786.5,459.5 787.0,459.5 787.5,459.5 788.0,459.6 788.5,459.9 789.0,460.4 789.5,461.0 790.0,461.6 790.5,462.2 791.0,462.6 791.5,462.9 792.0,462.9 792.5,462.6 793.0,461.9 793.5,461.1 794.0,460.3 794.5,459.5 795.0,459.0 795.5,458.7 796.0,458.7 796.5,458.8 797.0,458.9 797.5,459.1 798.0,459.3 798.5,459.6 799.0,459.8 799.5,460.1 800.0,460.5 800.5,461.2 801.0,462.0 801.5,462.9 802.0,463.7 802.5,464.6 803.0,465.3 803.5,465.8 804.0,466.2 804.5,466.2 805.0,465.8 805.5,465.1 806.0,464.1 806.5,462.9 807.0,461.5 807.5,460.1 808.0,458.6 808.5,457.3 809.0,456.1 809.5,455.1 810.0,454.5 810.5,454.2 811.0,454.8 811.5,457.0 812.0,460.2 812.5,464.0 813.0,468.1 813.5,471.8 814.0,474.8 814.5,476.7 815.0,478.3 815.5,479.9 816.0,481.3 816.5,482.7 817.0,483.8 817.5,484.7 818.0,485.2 818.5,485.5 819.0,485.2 819.5,484.2 820.0,482.7 820.5,480.8 821.0,478.7 821.5,476.8 822.0,475.1 822.5,473.8 823.0,473.2 823.5,473.4 824.0,473.9 824.5,474.8 825.0,475.9 825.5,477.3 826.0,478.7 826.5,480.2 827.0,481.6 827.5,482.9 828.0,484.0 828.5,484.9 829.0,485.4 829.5,485.4 830.0,484.4 830.5,482.4 831.0,479.6 831.5,476.6 832.0,473.6 832.5,470.9 833.0,469.0 833.5,467.9 834.0,466.7 834.5,465.7 835.0,464.8 835.5,464.0 836.0,463.4 836.5,463.0 837.0,463.0 837.5,463.1 838.0,463.4 838.5,463.8 839.0,464.3 839.5,464.9 840.0,465.5 840.5,466.1 841.0,466.6 841.5,467.1 842.0,467.5 842.5,467.8 843.0,468.0 843.5,467.9 844.0,467.5 844.5,467.0 845.0,466.3 845.5,465.4 846.0,464.6 846.5,463.9 847.0,463.2 847.5,462.7 848.0,462.5 848.5,462.5 849.0,462.6 849.5,462.9 850.0,463.2 850.5,463.6 851.0,464.1 851.5,464.6 852.0,465.1 852.5,465.9 853.0,467.1 853.5,468.5 854.0,470.1 854.5,471.7 855.0,473.3 855.5,474.8 856.0,476.1 856.5,477.0 857.0,477.6 857.5,477.9 858.0,478.3 858.5,478.6 859.0,478.8 859.5,479.0 860.0,479.2 860.5,479.2 861.0,479.2 861.5,479.0 862.0,478.6 862.5,478.2 863.0,477.7 863.5,477.0 864.0,476.0 864.5,474.6 865.0,473.0 865.5,471.4 866.0,469.9 866.5,468.5 867.0,467.5 867.5,467.0 868.0,467.0 868.5,467.4 869.0,468.0 869.5,468.9 870.0,469.8 870.5,470.8 871.0,472.1 871.5,474.3 872.0,477.0 872.5,480.0 873.0,482.9 873.5,485.3 874.0,487.0 874.5,487.5 875.0,487.3 875.5,486.7 876.0,485.9 876.5,484.9 877.0,483.8 877.5,482.7 878.0,481.6 878.5,480.6 879.0,479.7 879.5,479.1 880.0,478.8 880.5,478.8 881.0,479.3 881.5,480.1 882.0,481.2 882.5,482.3 883.0,483.3 883.5,484.2 884.0,484.8 884.5,485.0 885.0,484.9 885.5,484.7 886.0,484.3 886.5,483.8 887.0,483.3 887.5,482.7 888.0,482.1 888.5,481.0 889.0,479.5 889.5,477.7 890.0,475.7 890.5,473.4 891.0,471.1 891.5,468.7 892.0,466.4 892.5,464.2 893.0,462.2 893.5,460.4 894.0,459.0 894.5,458.0 895.0,457.5 895.5,457.7 896.0,459.1 896.5,461.6 897.0,464.7 897.5,468.2 898.0,471.8 898.5,475.2 899.0,478.0 899.5,479.8 900.0,480.5 900.5,480.4 901.0,480.1 901.5,479.8 902.0,479.3 902.5,478.7 903.0,477.3 903.5,474.6 904.0,471.2 904.5,467.5 905.0,464.0 905.5,461.3 906.0,459.7 906.5,459.5 907.0,459.8 907.5,460.4 908.0,461.2 908.5,462.1 909.0,463.0 909.5,464.5 910.0,466.4 910.5,468.6 911.0,471.0 911.5,473.3 912.0,475.6 912.5,477.5 913.0,479.0 913.5,479.8 914.0,480.0 914.5,480.2 915.0,480.3 915.5,480.3 916.0,480.4 916.5,480.5 917.0,480.5 917.5,480.5 918.0,480.3 918.5,479.6 919.0,478.6 919.5,477.4 920.0,475.9 920.5,474.3 921.0,472.6 921.5,471.0 922.0,469.4 922.5,468.0 923.0,466.9 923.5,466.0 924.0,465.5 924.5,465.6 925.0,466.3 925.5,467.8 926.0,469.6 926.5,471.8 927.0,474.0 927.5,476.1 928.0,478.4 928.5,481.2 929.0,484.3 929.5,487.6 930.0,491.0 930.5,494.2 931.0,497.1 931.5,499.6 932.0,501.4 932.5,502.5 933.0,503.0 933.5,503.6 934.0,504.0 934.5,504.4 935.0,504.7 935.5,504.9 936.0,505.0 936.5,504.9 937.0,503.1 937.5,499.9 938.0,495.6 938.5,490.7 939.0,485.6 939.5,480.8 940.0,476.6 940.5,472.8 941.0,468.5 941.5,464.3 942.0,460.5 942.5,457.7 943.0,456.3 943.5,455.8 944.0,455.5 944.5,455.2 945.0,455.0 945.5,454.9 946.0,455.3 946.5,456.4 947.0,458.1 947.5,460.1 948.0,462.3 948.5,464.4 949.0,466.4 949.5,467.8 950.0,468.7 950.5,469.0 951.0,469.3 951.5,469.6 952.0,469.8 952.5,469.9 953.0,470.0 953.5,469.9 954.0,469.7 954.5,469.4 955.0,469.0 955.5,468.5 956.0,468.0 956.5,467.6 957.0,467.1 957.5,466.7 958.0,466.4 958.5,466.3 959.0,466.2 959.5,466.2 960.0,466.2 960.5,466.2 961.0,466.2 961.5,466.2 962.0,466.2 962.5,466.2 963.0,466.1 963.5,465.9 964.0,465.5 964.5,465.0 965.0,464.4 965.5,463.9 966.0,463.4 966.5,462.9 967.0,462.6 967.5,462.5 968.0,462.5 968.5,462.8 969.0,463.3 969.5,463.8 970.0,464.5 970.5,465.2 971.0,465.8 971.5,466.4 972.0,466.9 972.5,467.3 973.0,467.5 973.5,467.3 974.0,466.7 974.5,465.8 975.0,464.6 975.5,463.2 976.0,461.8 976.5,460.3 977.0,459.0 977.5,457.8 978.0,456.9 978.5,456.3 979.0,456.2 979.5,456.6 980.0,457.3 980.5,458.4 981.0,459.7 981.5,461.2 982.0,462.7 982.5,464.3 983.0,465.8 983.5,467.1 984.0,468.1 984.5,468.9 985.0,469.2 985.5,469.2 986.0,469.1 986.5,469.0 987.0,468.9 987.5,468.8 988.0,468.4 988.5,467.5 989.0,466.0 989.5,464.2 990.0,462.2 990.5,460.1 991.0,458.1 991.5,456.2 992.0,454.6 992.5,453.5 993.0,453.0 993.5,453.3 994.0,454.7 994.5,457.0 995.0,460.0 995.5,463.2 996.0,466.6 996.5,469.8 997.0,472.5 997.5,474.6 998.0,475.9 998.5,477.2 999.0,478.4 999.5,479.5 1000.0,480.5 1000.5,481.2 1001.0,481.6 1001.5,481.7 1002.0,481.4 1002.5,480.7 1003.0,479.7 1003.5,478.4 1004.0,476.9 1004.5,475.4 1005.0,473.6 1005.5,470.6 1006.0,466.9 1006.5,462.9 1007.0,459.1 1007.5,455.9 1008.0,453.8 1008.5,453.2 1009.0,454.4 1009.5,457.0 1010.0,460.2 1010.5,463.6 1011.0,466.4 1011.5,468.2 1012.0,469.2 1012.5,470.2 1013.0,470.9 1013.5,471.6 1014.0,472.3 1014.5,473.0 1015.0,473.7 1015.5,474.6 1016.0,475.4 1016.5,476.3 1017.0,477.1 1017.5,477.8 1018.0,478.3 1018.5,478.6 1019.0,478.7 1019.5,478.7 1020.0,478.5 1020.5,478.2 1021.0,477.8 1021.5,477.4 1022.0,476.9 1022.5,476.4 1023.0,475.8 1023.5,474.9 1024.0,473.8 1024.5,472.5 1025.0,471.4 1025.5,470.4 1026.0,469.7 1026.5,469.5 1027.0,469.9 1027.5,470.8 1028.0,472.0 1028.5,473.3 1029.0,474.6 1029.5,475.6 1030.0,476.2 1030.5,476.2 1031.0,475.7 1031.5,474.9 1032.0,473.9 1032.5,472.7 1033.0,471.5 1033.5,470.4 1034.0,469.4 1034.5,468.7 1035.0,468.3 1035.5,468.2 1036.0,468.3 1036.5,468.4 1037.0,468.6 1037.5,468.7 1038.0,469.0 1038.5,469.2 1039.0,469.5 1039.5,470.1 1040.0,471.1 1040.5,472.4 1041.0,473.8 1041.5,475.3 1042.0,476.6 1042.5,477.7 1043.0,478.5 1043.5,478.7 1044.0,478.5 1044.5,478.1 1045.0,477.3 1045.5,476.4 1046.0,475.4 1046.5,474.3 1047.0,473.2 1047.5,472.2 1048.0,471.2 1048.5,470.4 1049.0,469.8 1049.5,469.5 1050.0,469.5 1050.5,469.7 1051.0,470.0 1051.5,470.3 1052.0,470.5 1052.5,470.7 1053.0,470.7 1053.5,470.4 1054.0,470.0 1054.5,469.4 1055.0,468.8 1055.5,468.1 1056.0,467.4 1056.5,466.7 1057.0,466.1 1057.5,465.7 1058.0,465.5 1058.5,465.5 1059.0,465.7 1059.5,466.2 1060.0,466.7 1060.5,467.4 1061.0,468.0 1061.5,468.5 1062.0,468.9 1062.5,469.2 1063.0,469.2 1063.5,468.9 1064.0,468.3 1064.5,467.6 1065.0,466.6 1065.5,465.6 1066.0,464.6 1066.5,463.6 1067.0,462.6 1067.5,461.7 1068.0,461.1 1068.5,460.6 1069.0,460.5 1069.5,460.5 1070.0,460.6 1070.5,460.7 1071.0,460.8 1071.5,461.0 1072.0,461.2 1072.5,461.5 1073.0,461.8 1073.5,462.2 1074.0,463.0 1074.5,464.4 1075.0,466.0 1075.5,467.9 1076.0,469.9 1076.5,471.9 1077.0,473.8 1077.5,475.5 1078.0,476.8 1078.5,478.2 1079.0,479.6 1079.5,481.0 1080.0,482.3 1080.5,483.5 1081.0,484.5 1081.5,485.3 1082.0,485.7 1082.5,485.7 1083.0,485.1 1083.5,483.9 1084.0,482.4 1084.5,480.5 1085.0,478.5 1085.5,476.4 1086.0,474.4 1086.5,472.6 1087.0,470.8 1087.5,468.8 1088.0,466.7 1088.5,464.5 1089.0,462.3 1089.5,460.3 1090.0,458.5 1090.5,456.9 1091.0,455.7 1091.5,455.0 1092.0,454.6 1092.5,454.2 1093.0,454.0 1093.5,453.8 1094.0,453.7 1094.5,454.5 1095.0,456.9 1095.5,460.6 1096.0,465.0 1096.5,469.7 1097.0,474.2 1097.5,478.1 1098.0,481.0 1098.5,483.9 1099.0,486.8 1099.5,489.6 1100.0,492.2 1100.5,494.2 1101.0,495.7 1101.5,496.3 1102.0,495.8 1102.5,494.2 1103.0,491.8 1103.5,488.9 1104.0,485.7 1104.5,482.7 1105.0,480.1 1105.5,478.1 1106.0,476.2 1106.5,474.4 1107.0,472.6 1107.5,471.0 1108.0,469.5 1108.5,468.4 1109.0,467.6 1109.5,467.0 1110.0,466.5 1110.5,466.0 1111.0,465.6 1111.5,465.2 1112.0,464.9 1112.5,464.7 1113.0,464.5 1113.5,464.5 1114.0,464.6 1114.5,465.1 1115.0,465.8 1115.5,466.6 1116.0,467.5 1116.5,468.3 1117.0,469.0 1117.5,469.4 1118.0,469.4 1118.5,468.9 1119.0,467.9 1119.5,466.4 1120.0,464.6 1120.5,462.7 1121.0,460.7 1121.5,458.8 1122.0,457.1 1122.5,455.7 1123.0,454.7 1123.5,453.8 1124.0,452.9 1124.5,452.0 1125.0,451.2 1125.5,450.5 1126.0,450.0 1126.5,449.6 1127.0,449.4 1127.5,449.5 1128.0,449.7 1128.5,450.0 1129.0,450.4 1129.5,450.9 1130.0,451.5 1130.5,452.2 1131.0,452.8 1131.5,453.5 1132.0,454.3 1132.5,455.3 1133.0,456.5 1133.5,457.9 1134.0,459.4 1134.5,460.9 1135.0,462.4 1135.5,464.0 1136.0,465.4 1136.5,466.7 1137.0,467.8 1137.5,469.0 1138.0,470.0 1138.5,471.1 1139.0,472.1 1139.5,473.1 1140.0,474.1 1140.5,475.2 1141.0,476.2 1141.5,477.2 1142.0,478.3 1142.5,479.5 1143.0,480.8 1143.5,482.2 1144.0,483.6 1144.5,485.0 1145.0,486.4 1145.5,487.7 1146.0,488.8 1146.5,489.8 1147.0,490.7 1147.5,491.3 1148.0,491.7 1148.5,491.7 1149.0,491.1 1149.5,489.7 1150.0,487.7 1150.5,485.4 1151.0,482.9 1151.5,480.4 1152.0,478.1 1152.5,476.1 1153.0,474.7 1153.5,473.5 1154.0,472.3 1154.5,471.2 1155.0,470.3 1155.5,469.6 1156.0,469.2 1156.5,469.3 1157.0,469.8 1157.5,470.5 1158.0,471.4 1158.5,472.5 1159.0,473.7 1159.5,474.9 1160.0,476.0 1160.5,477.0 1161.0,477.7 1161.5,478.2 1162.0,478.3 1162.5,478.4 1163.0,478.5 1163.5,478.6 1164.0,478.7 1164.5,479.0 1165.0,479.7 1165.5,480.7 1166.0,482.0 1166.5,483.4 1167.0,484.9 1167.5,486.3 1168.0,487.4 1168.5,488.3 1169.0,488.7 1169.5,488.6 1170.0,487.8 1170.5,486.3 1171.0,484.5 1171.5,482.4 1172.0,480.2 1172.5,478.0 1173.0,476.0 1173.5,473.7 1174.0,471.1 1174.5,468.3 1175.0,465.4 1175.5,462.7 1176.0,460.2 1176.5,458.2 1177.0,456.8 1177.5,456.2 1178.0,455.9 1178.5,455.7 1179.0,455.6 1179.5,455.5 1180.0,455.5 1180.5,456.5 1181.0,458.9 1181.5,462.3 1182.0,466.5 1182.5,470.9 1183.0,475.4 1183.5,479.4 1184.0,482.7 1184.5,484.8 1185.0,485.5 1185.5,485.0 1186.0,483.7 1186.5,481.8 1187.0,479.6 1187.5,477.0 1188.0,474.4 1188.5,471.9 1189.0,469.6 1189.5,467.5 1190.0,465.2 1190.5,462.7 1191.0,460.2 1191.5,457.8 1192.0,455.6 1192.5,453.9 1193.0,452.8 1193.5,452.4 1194.0,452.7 1194.5,453.2 1195.0,454.0 1195.5,455.0 1196.0,456.0 1196.5,457.0 1197.0,458.1 1197.5,459.4 1198.0,461.0 1198.5,462.6 1199.0,464.2 1199.5,465.5 1200.0,466.4 1200.5,466.7 1201.0,465.8 1201.5,463.3 1202.0,459.9 1202.5,455.9 1203.0,451.7 1203.5,447.9 1204.0,444.8 1204.5,442.6 1205.0,440.6 1205.5,438.6 1206.0,436.9 1206.5,435.5 1207.0,434.5 1207.5,434.2 1208.0,434.4 1208.5,435.0 1209.0,435.9 1209.5,437.1 1210.0,438.5 1210.5,439.9 1211.0,442.1 1211.5,445.5 1212.0,449.6 1212.5,454.0 1213.0,458.4 1213.5,462.2 1214.0,465.2 1214.5,467.1 1215.0,468.7 1215.5,470.1 1216.0,471.2 1216.5,471.9 1217.0,472.0 1217.5,471.7 1218.0,471.4 1218.5,470.9 1219.0,470.2 1219.5,469.5 1220.0,468.8 1220.5,468.0 1221.0,467.3 1221.5,466.6 1222.0,465.9 1222.5,465.2 1223.0,464.4 1223.5,463.5 1224.0,462.7 1224.5,461.9 1225.0,461.3 1225.5,460.8 1226.0,460.5 1226.5,460.6 1227.0,461.4 1227.5,462.9 1228.0,464.9 1228.5,467.3 1229.0,469.8 1229.5,472.2 1230.0,474.4 1230.5,476.1 1231.0,477.7 1231.5,479.3 1232.0,480.9 1232.5,482.5 1233.0,484.0 1233.5,485.3 1234.0,486.5 1234.5,487.4 1235.0,488.0 1235.5,488.3 1236.0,488.2 1236.5,488.2 1237.0,488.0 1237.5,487.9 1238.0,487.7 1238.5,487.5 1239.0,487.1 1239.5,486.3 1240.0,485.2 1240.5,483.8 1241.0,482.1 1241.5,480.3 1242.0,478.4 1242.5,476.5 1243.0,474.6 1243.5,472.8 1244.0,471.1 1244.5,469.6 1245.0,468.4 1245.5,467.5 1246.0,466.9 1246.5,466.4 1247.0,466.0 1247.5,465.6 1248.0,465.2 1248.5,464.9 1249.0,464.5 1249.5,464.1 1250.0,463.7 1250.5,463.3 1251.0,462.7 1251.5,462.0 1252.0,461.2 1252.5,460.4 1253.0,459.6 1253.5,458.8 1254.0,458.1 1254.5,457.5 1255.0,457.1 1255.5,457.0 1256.0,457.2 1256.5,457.9 1257.0,459.1 1257.5,460.6 1258.0,462.4 1258.5,464.5 1259.0,466.6 1259.5,468.9 1260.0,471.0 1260.5,473.1 1261.0,475.0 1261.5,476.7 1262.0,478.0 1262.5,478.8 1263.0,479.2 1263.5,479.0 1264.0,478.2 1264.5,476.8 1265.0,475.1 1265.5,473.2 1266.0,471.1 1266.5,469.0 1267.0,467.0 1267.5,465.3 1268.0,463.9 1268.5,462.8 1269.0,461.7 1269.5,460.6 1270.0,459.5 1270.5,458.6 1271.0,457.9 1271.5,457.5 1272.0,457.5 1272.5,457.7 1273.0,458.1 1273.5,458.7 1274.0,459.4 1274.5,460.0 1275.0,460.6 1275.5,461.1 1276.0,461.5 1276.5,461.7 1277.0,461.9 1277.5,462.1 1278.0,462.3 1278.5,462.6 1279.0,462.9 1279.5,463.4 1280.0,464.5 1280.5,466.3 1281.0,468.3 1281.5,470.2 1282.0,471.7 1282.5,472.4 1283.0,472.4 1283.5,472.0 1284.0,471.4 1284.5,470.6 1285.0,469.7 1285.5,468.7 1286.0,467.7 1286.5,466.8 1287.0,465.9 1287.5,465.2 1288.0,464.7 1288.5,464.5 1289.0,464.6 1289.5,465.0 1290.0,465.6 1290.5,466.4 1291.0,467.3 1291.5,468.1 1292.0,468.9 1292.5,469.8 1293.0,470.8 1293.5,471.9 1294.0,473.0 1294.5,474.2 1295.0,475.3 1295.5,476.4 1296.0,477.3 1296.5,478.0 1297.0,478.5 1297.5,478.7 1298.0,478.6 1298.5,478.1 1299.0,477.2 1299.5,476.1 1300.0,474.7 1300.5,473.3 1301.0,471.9 1301.5,470.5 1302.0,469.3 1302.5,468.3 1303.0,467.6 1303.5,467.2 1304.0,467.0 1304.5,466.8 1305.0,466.6 1305.5,466.4 1306.0,466.2 1306.5,466.0 1307.0,465.7 1307.5,465.1 1308.0,464.4 1308.5,463.5 1309.0,462.6 1309.5,461.6 1310.0,460.7 1310.5,459.9 1311.0,459.2 1311.5,458.8 1312.0,458.7 1312.5,459.6 1313.0,461.7 1313.5,464.5 1314.0,467.8 1314.5,471.1 1315.0,474.3 1315.5,476.8 1316.0,478.7 1316.5,480.7 1317.0,482.6 1317.5,484.4 1318.0,486.0 1318.5,487.2 1319.0,488.0 1319.5,488.3 1320.0,488.1 1320.5,487.8 1321.0,487.3 1321.5,486.7 1322.0,485.9 1322.5,485.1 1323.0,484.2 1323.5,483.4 1324.0,482.5 1324.5,481.7 1325.0,480.9 1325.5,480.2 1326.0,479.6 1326.5,479.0 1327.0,478.3 1327.5,477.7 1328.0,477.0 1328.5,476.4 1329.0,475.8 1329.5,475.3 1330.0,474.9 1330.5,474.6 1331.0,474.5 1331.5,474.6 1332.0,475.3 1332.5,476.4 1333.0,477.8 1333.5,479.4 1334.0,481.1 1334.5,482.7 1335.0,484.1 1335.5,485.1 1336.0,485.7 1336.5,485.7 1337.0,485.5 1337.5,485.2 1338.0,484.7 1338.5,484.1 1339.0,483.5 1339.5,482.8 1340.0,482.1 1340.5,481.4 1341.0,480.8 1341.5,480.2 1342.0,479.8 1342.5,479.4 1343.0,479.3 1343.5,479.3 1344.0,479.4 1344.5,479.6 1345.0,480.0 1345.5,480.3 1346.0,480.7 1346.5,481.0 1347.0,481.3 1347.5,481.4 1348.0,481.6 1348.5,481.7 1349.0,481.9 1349.5,482.2 1350.0,482.5 1350.5,484.1 1351.0,484.4 1351.5,483.8 1352.0,482.7 1352.5,481.3 1353.0,479.6 1353.5,477.7 1354.0,475.9 1354.5,474.2 1355.0,472.7 1355.5,471.6 1356.0,470.9 1356.5,470.2 1357.0,469.6 1357.5,469.1 1358.0,468.6 1358.5,468.3 1359.0,468.2 1359.5,468.3 1360.0,468.6 1360.5,469.1 1361.0,469.7 1361.5,470.4 1362.0,471.2 1362.5,472.7 1363.0,475.4 1363.5,478.9 1364.0,482.9 1364.5,487.0 1365.0,490.8 1365.5,494.0 1366.0,496.2 1366.5,497.0 1367.0,496.4 1367.5,494.7 1368.0,492.3 1368.5,489.3 1369.0,486.1 1369.5,483.0 1370.0,480.3 1370.5,478.2 1371.0,477.0 1371.5,475.9 1372.0,475.0 1372.5,474.2 1373.0,473.8 1373.5,473.8 1374.0,474.3 1374.5,475.1 1375.0,476.2 1375.5,477.2 1376.0,478.2 1376.5,478.9 1377.0,479.2 1377.5,479.0 1378.0,478.4 1378.5,477.4 1379.0,476.3 1379.5,475.1 1380.0,473.4 1380.5,470.8 1381.0,467.7 1381.5,464.5 1382.0,461.5 1382.5,459.1 1383.0,457.7 1383.5,457.6 1384.0,458.5 1384.5,460.3 1385.0,462.5 1385.5,464.9 1386.0,467.3 1386.5,470.6 1387.0,474.6 1387.5,478.7 1388.0,482.4 1388.5,485.1 1389.0,486.2 1389.5,486.1 1390.0,485.7 1390.5,484.9 1391.0,484.0 1391.5,483.0 1392.0,481.8 1392.5,480.6 1393.0,479.4 1393.5,478.2 1394.0,477.2 1394.5,476.3 1395.0,475.6 1395.5,475.0 1396.0,474.5 1396.5,474.0 1397.0,473.5 1397.5,473.0 1398.0,472.4 1398.5,471.8 1399.0,471.0 1399.5,470.1 1400.0,468.8 1400.5,467.0 1401.0,464.6 1401.5,462.0 1402.0,459.2 1402.5,456.5 1403.0,453.9 1403.5,451.6 1404.0,449.2 1404.5,446.6 1405.0,443.9 1405.5,441.4 1406.0,439.1 1406.5,437.3 1407.0,436.0 1407.5,435.4 1408.0,435.7 1408.5,436.5 1409.0,437.9 1409.5,439.7 1410.0,441.7 1410.5,444.0 1411.0,446.4 1411.5,448.7 1412.0,450.8 1412.5,453.0 1413.0,455.4 1413.5,458.0 1414.0,460.7 1414.5,463.3 1415.0,465.6 1415.5,467.6 1416.0,469.2 1416.5,470.6 1417.0,472.0 1417.5,473.3 1418.0,474.4 1418.5,475.3 1419.0,475.9 1419.5,476.2 1420.0,475.9 1420.5,474.9 1421.0,473.3 1421.5,471.5 1422.0,469.7 1422.5,468.2 1423.0,467.2 1423.5,467.0 1424.0,467.0 1424.5,467.0 1425.0,467.1 1425.5,467.2 1426.0,467.3 1426.5,467.4 1427.0,467.7 1427.5,468.4 1428.0,469.2 1428.5,470.1 1429.0,470.8 1429.5,471.2 1430.0,471.2 1430.5,470.9 1431.0,470.5 1431.5,470.0 1432.0,469.4 1432.5,468.7 1433.0,468.0 1433.5,467.3 1434.0,466.3 1434.5,465.0 1435.0,463.5 1435.5,461.9 1436.0,460.3 1436.5,458.8 1437.0,457.5 1437.5,456.5 1438.0,455.9 1438.5,455.7 1439.0,455.8 1439.5,456.0 1440.0,456.4 1440.5,456.7 1441.0,457.2 1441.5,457.6 1442.0,458.0 1442.5,458.3 1443.0,458.6 1443.5,458.7 1444.0,458.8 1444.5,458.9 1445.0,458.9 1445.5,459.0 1446.0,459.0 1446.5,459.1 1447.0,459.2 1447.5,459.5 1448.0,460.5 1448.5,462.1 1449.0,464.2 1449.5,466.6 1450.0,469.2 1450.5,471.8 1451.0,474.3 1451.5,476.5 1452.0,478.3 1452.5,479.7 1453.0,481.1 1453.5,482.6 1454.0,484.0 1454.5,485.3 1455.0,486.4 1455.5,487.3 1456.0,487.9 1456.5,488.2 1457.0,487.9 1457.5,486.3 1458.0,483.8 1458.5,480.7 1459.0,477.2 1459.5,473.8 1460.0,470.8 1460.5,468.5 1461.0,467.3 1461.5,466.6 1462.0,466.0 1462.5,465.4 1463.0,465.0 1463.5,464.6 1464.0,464.5 1464.5,464.6 1465.0,465.3 1465.5,466.3 1466.0,467.7 1466.5,469.2 1467.0,470.7 1467.5,472.3 1468.0,474.3 1468.5,476.7 1469.0,478.9 1469.5,480.7 1470.0,481.7 1470.5,481.6 1471.0,480.8 1471.5,479.5 1472.0,477.8 1472.5,475.9 1473.0,474.0 1473.5,472.3 1474.0,470.4 1474.5,468.1 1475.0,465.6 1475.5,463.0 1476.0,460.4 1476.5,458.0 1477.0,455.9 1477.5,454.3 1478.0,453.3 1478.5,452.9 1479.0,453.1 1479.5,453.4 1480.0,453.8 1480.5,454.4 1481.0,455.1 1481.5,455.9 1482.0,457.0 1482.5,459.5 1483.0,463.0 1483.5,467.0 1484.0,470.9 1484.5,474.3 1485.0,476.7 1485.5,477.5 1486.0,476.9 1486.5,475.6 1487.0,473.8 1487.5,471.6 1488.0,469.4 1488.5,467.4 1489.0,465.1 1489.5,462.5 1490.0,459.6 1490.5,456.6 1491.0,453.9 1491.5,451.5 1492.0,449.7 1492.5,448.8 1493.0,448.8 1493.5,449.4 1494.0,450.5 1494.5,452.0 1495.0,453.6 1495.5,455.2 1496.0,456.8 1496.5,458.2 1497.0,459.2 1497.5,459.7 1498.0,460.1 1498.5,460.4 1499.0,460.7 1499.5,460.9 1500.0,461.2 1500.5,461.4 1501.0,461.8 1501.5,462.2 1502.0,462.9 1502.5,464.3 1503.0,466.4 1503.5,469.1 1504.0,472.2 1504.5,475.6 1505.0,479.1 1505.5,482.6 1506.0,485.9 1506.5,489.0 1507.0,491.6 1507.5,493.7 1508.0,495.0 1508.5,495.5 1509.0,495.0 1509.5,493.7 1510.0,491.6 1510.5,489.0 1511.0,485.9 1511.5,482.6 1512.0,479.2 1512.5,475.8 1513.0,472.6 1513.5,469.7 1514.0,467.3 1514.5,465.6 1515.0,464.6 1515.5,464.6 1516.0,465.3 1516.5,466.7 1517.0,468.6 1517.5,470.9 1518.0,473.5 1518.5,476.3 1519.0,479.2 1519.5,482.0 1520.0,484.6 1520.5,487.0 1521.0,488.9 1521.5,490.4 1522.0,491.1 1522.5,491.2 1523.0,490.6 1523.5,489.6 1524.0,488.2 1524.5,486.5 1525.0,484.8 1525.5,483.0 1526.0,481.3 1526.5,479.5 1527.0,477.3 1527.5,474.8 1528.0,472.6 1528.5,470.7 1529.0,469.7 1529.5,469.5 1530.0,469.8 1530.5,470.3 1531.0,471.1 1531.5,472.0 1532.0,473.1 1532.5,474.4 1533.0,476.9 1533.5,480.6 1534.0,485.0 1534.5,489.4 1535.0,493.5 1535.5,496.8 1536.0,498.7 1536.5,499.5 1537.0,500.1 1537.5,500.5 1538.0,500.9 1538.5,501.3 1539.0,501.7 1539.5,502.2 1540.0,502.8 1540.5,503.8 1541.0,505.0 1541.5,506.4 1542.0,507.9 1542.5,509.3 1543.0,510.7 1543.5,511.8 1544.0,512.7 1544.5,513.2 1545.0,513.3 1545.5,513.3 1546.0,513.2 1546.5,513.1 1547.0,513.0 1547.5,512.9 1548.0,512.8 1548.5,512.7 1549.0,512.6 1549.5,512.6 1550.0,512.7 1550.5,514.4 1551.0,517.6 1551.5,521.7 1552.0,526.1 1552.5,530.3 1553.0,535.2 1553.5,540.7 1554.0,546.6 1554.5,552.5 1555.0,558.1 1555.5,563.0 1556.0,567.5 1556.5,571.8 1557.0,575.9 1557.5,580.0 1558.0,584.1 1558.5,588.2 1559.0,592.2 1559.5,595.9 1560.0,600.2 1560.5,606.6 1561.0,619.9 1561.5,624.0 1562.0,624.0 1562.5,624.0 1563.0,624.0 1563.5,624.0 1564.0,624.0 1564.5,624.0 1565.0,617.5 1565.5,598.7 1566.0,581.9 1566.5,565.1 1567.0,549.3 1567.5,535.5 1568.0,520.0 1568.5,495.9 1569.0,465.3 1569.5,443.7 1570.0,429.9 1570.5,418.4 1571.0,407.1 1571.5,396.4 1572.0,386.8 1572.5,379.0 1573.0,371.3 1573.5,364.4 1574.0,359.7 1574.5,358.6 1575.0,360.1 1575.5,363.0 1576.0,366.8 1576.5,370.8 1577.0,374.6 1577.5,378.9 1578.0,383.9 1578.5,389.0 1579.0,394.0 1579.5,398.4 1580.0,401.9 1580.5,404.6 1581.0,406.8 1581.5,409.0 1582.0,411.5 1582.5,414.5 1583.0,419.0 1583.5,424.5 1584.0,429.8 1584.5,434.1 1585.0,436.6 1585.5,438.2 1586.0,439.7 1586.5,440.9 1587.0,441.8 1587.5,442.3 1588.0,442.4 1588.5,442.1 1589.0,441.5 1589.5,440.6 1590.0,439.7 1590.5,438.8 1591.0,438.0 1591.5,437.6 1592.0,437.4 1592.5,438.0 1593.0,439.3 1593.5,441.1 1594.0,443.2 1594.5,445.4 1595.0,447.6 1595.5,449.6 1596.0,451.2 1596.5,452.2 1597.0,452.4 1597.5,452.3 1598.0,452.0 1598.5,451.6 1599.0,451.0 1599.5,450.4 1600.0,449.8 1600.5,448.6 1601.0,446.8 1601.5,444.7 1602.0,442.5 1602.5,440.5 1603.0,439.0 1603.5,438.2 1604.0,438.4 1604.5,439.7 1605.0,441.7 1605.5,444.4 1606.0,447.6 1606.5,451.0 1607.0,454.4 1607.5,457.7 1608.0,460.7 1608.5,463.1 1609.0,464.9 1609.5,466.8 1610.0,468.7 1610.5,470.5 1611.0,472.2 1611.5,473.7 1612.0,474.9 1612.5,475.8 1613.0,476.2 1613.5,476.2 1614.0,475.8 1614.5,475.1 1615.0,474.3 1615.5,473.2 1616.0,472.1 1616.5,470.9 1617.0,469.7 1617.5,468.6 1618.0,467.2 1618.5,465.4 1619.0,463.4 1619.5,461.3 1620.0,459.2 1620.5,457.2 1621.0,455.4 1621.5,454.1 1622.0,453.2 1622.5,453.0 1623.0,453.6 1623.5,455.2 1624.0,457.4 1624.5,460.1 1625.0,462.9 1625.5,465.6 1626.0,467.9 1626.5,469.9 1627.0,472.0 1627.5,474.2 1628.0,476.3 1628.5,478.0 1629.0,479.1 1629.5,479.5 1630.0,479.2 1630.5,478.4 1631.0,477.2 1631.5,475.8 1632.0,474.2 1632.5,472.5 1633.0,470.9 1633.5,469.3 1634.0,467.9 1634.5,466.1 1635.0,464.1 1635.5,462.1 1636.0,460.3 1636.5,458.8 1637.0,457.8 1637.5,457.5 1638.0,457.8 1638.5,458.8 1639.0,460.2 1639.5,461.8 1640.0,463.6 1640.5,465.4 1641.0,467.0 1641.5,468.3 1642.0,469.2 1642.5,469.5 1643.0,469.4 1643.5,469.3 1644.0,469.2 1644.5,469.0 1645.0,468.8 1645.5,468.6 1646.0,468.3 1646.5,468.0 1647.0,467.6 1647.5,466.9 1648.0,466.3 1648.5,465.8 1649.0,465.5 1649.5,465.6 1650.0,466.4 1650.5,467.7 1651.0,469.5 1651.5,471.5 1652.0,473.7 1652.5,475.8 1653.0,477.8 1653.5,479.3 1654.0,480.4 1654.5,480.7 1655.0,480.3 1655.5,479.3 1656.0,477.9 1656.5,476.2 1657.0,474.4 1657.5,472.8 1658.0,471.5 1658.5,470.8 1659.0,470.8 1659.5,471.2 1660.0,471.9 1660.5,472.8 1661.0,473.8 1661.5,474.9 1662.0,475.9 1662.5,476.8 1663.0,477.5 1663.5,477.9 1664.0,478.0 1664.5,477.7 1665.0,477.3 1665.5,476.6 1666.0,475.9 1666.5,475.1 1667.0,474.2 1667.5,473.3 1668.0,472.5 1668.5,471.8 1669.0,471.2 1669.5,470.7 1670.0,470.5 1670.5,470.4 1671.0,470.3 1671.5,470.3 1672.0,470.2 1672.5,470.2 1673.0,470.1 1673.5,470.0 1674.0,469.9 1674.5,469.2 1675.0,468.1 1675.5,466.7 1676.0,465.0 1676.5,463.0 1677.0,461.0 1677.5,459.0 1678.0,457.0 1678.5,455.2 1679.0,453.6 1679.5,452.4 1680.0,451.5 1680.5,451.2 1681.0,451.5 1681.5,452.3 1682.0,453.7 1682.5,455.4 1683.0,457.3 1683.5,459.4 1684.0,461.5 1684.5,463.6 1685.0,465.9 1685.5,468.9 1686.0,472.2 1686.5,475.5 1687.0,478.3 1687.5,480.4 1688.0,481.2 1688.5,481.2 1689.0,481.0 1689.5,480.7 1690.0,480.4 1690.5,480.0 1691.0,479.7 1691.5,479.3 1692.0,479.0 1692.5,478.8 1693.0,478.7 1693.5,479.0 1694.0,480.0 1694.5,481.6 1695.0,483.5 1695.5,485.7 1696.0,488.0 1696.5,490.3 1697.0,492.5 1697.5,494.4 1698.0,495.8 1698.5,496.6 1699.0,496.7 1699.5,496.4 1700.0,495.6 1700.5,494.5 1701.0,493.2 1701.5,491.8 1702.0,490.4 1702.5,488.9 1703.0,487.5 1703.5,485.9 1704.0,484.1 1704.5,482.1 1705.0,480.1 1705.5,477.9 1706.0,475.7 1706.5,473.5 1707.0,471.3 1707.5,469.1 1708.0,466.6 1708.5,463.6 1709.0,460.5 1709.5,457.6 1710.0,455.5 1710.5,454.5 1711.0,454.7 1711.5,455.8 1712.0,457.5 1712.5,459.6 1713.0,462.0 1713.5,464.6 1714.0,467.2 1714.5,469.6 1715.0,471.7 1715.5,473.3 1716.0,474.3 1716.5,474.5 1717.0,474.5 1717.5,474.4 1718.0,474.4 1718.5,474.3 1719.0,474.2 1719.5,474.1 1720.0,473.9 1720.5,473.7 1721.0,473.5 1721.5,473.2 1722.0,472.9 1722.5,472.6 1723.0,468.6 1723.5,459.4 1724.0,456.4 1724.5,460.1 1725.0,465.7 1725.5,469.6 1726.0,470.6 1726.5,471.3 1727.0,471.9 1727.5,472.4 1728.0,472.8 1728.5,473.1 1729.0,473.2 1729.5,473.2 1730.0,472.9 1730.5,472.1 1731.0,471.1 1731.5,469.9 1732.0,468.5 1732.5,467.1 1733.0,465.8 1733.5,464.5 1734.0,463.5 1734.5,462.4 1735.0,461.2 1735.5,460.0 1736.0,458.8 1736.5,457.6 1737.0,456.5 1737.5,455.5 1738.0,454.6 1738.5,453.9 1739.0,453.4 1739.5,453.2 1740.0,453.3 1740.5,453.8 1741.0,454.7 1741.5,455.8 1742.0,457.0 1742.5,458.3 1743.0,460.0 1743.5,462.6 1744.0,465.6 1744.5,468.2 1745.0,469.8 1745.5,470.2 1746.0,470.4 1746.5,470.5 1747.0,470.6 1747.5,470.7 1748.0,470.8 1748.5,471.0 1749.0,471.3 1749.5,472.1 1750.0,473.5 1750.5,475.3 1751.0,477.3 1751.5,479.4 1752.0,481.5 1752.5,483.3 1753.0,484.8 1753.5,486.5 1754.0,488.2 1754.5,489.9 1755.0,491.6 1755.5,493.0 1756.0,494.2 1756.5,495.1 1757.0,495.5 1757.5,495.4 1758.0,494.7 1758.5,493.7 1759.0,492.3 1759.5,490.8 1760.0,489.1 1760.5,487.5 1761.0,486.0 1761.5,484.8 1762.0,483.7 1762.5,482.6 1763.0,481.5 1763.5,480.4 1764.0,479.3 1764.5,478.2 1765.0,477.1 1765.5,476.1 1766.0,475.1 1766.5,474.1 1767.0,473.2 1767.5,472.3 1768.0,471.4 1768.5,470.6 1769.0,469.9 1769.5,469.1 1770.0,468.3 1770.5,467.5 1771.0,466.8 1771.5,466.2 1772.0,465.7 1772.5,465.5 1773.0,465.5 1773.5,465.9 1774.0,466.6 1774.5,467.6 1775.0,468.9 1775.5,470.3 1776.0,472.0" fill="none" stroke="#8080ff" stroke-width="1" stroke-linejoin="round" shape-rendering="crispEdges" clip-path="url(#cp1)"/>
<path d="M68 599h1v5h-1zM142 599h1v5h-1zM216 596h1v8h-1zM290 599h1v5h-1zM364 599h1v5h-1zM438 599h1v5h-1zM512 599h1v5h-1zM586 596h1v8h-1zM660 599h1v5h-1zM734 599h1v5h-1zM808 599h1v5h-1zM882 599h1v5h-1zM956 596h1v8h-1zM1030 599h1v5h-1zM1104 599h1v5h-1zM1178 599h1v5h-1zM1252 599h1v5h-1zM1326 596h1v8h-1zM1400 599h1v5h-1zM1474 599h1v5h-1zM1548 599h1v5h-1zM1622 599h1v5h-1zM1696 596h1v8h-1zM1770 599h1v5h-1z" fill="#ffffff"/>
<rect x="10" y="604" width="1767" height="1" fill="#ffffff"/>
<path d="M10.0,729.0 10.5,729.4 11.0,729.7 11.5,729.9 12.0,730.1 12.5,730.2 13.0,730.2 13.5,730.2 14.0,730.2 14.5,729.8 15.0,729.1 15.5,728.3 16.0,727.2 16.5,726.1 17.0,725.0 17.5,723.9 18.0,722.9 18.5,722.2 19.0,721.6 19.5,721.4 20.0,721.6 20.5,722.0 21.0,722.7 21.5,723.5 22.0,724.5 22.5,725.4 23.0,726.4 23.5,727.3 24.0,728.1 24.5,728.9 25.0,729.9 25.5,730.9 26.0,731.8 26.5,732.5 27.0,733.0 27.5,733.2 28.0,733.2 28.5,733.1 29.0,733.0 29.5,732.9 30.0,732.8 30.5,732.8 31.0,732.7 31.5,732.7 32.0,732.9 32.5,733.1 33.0,733.5 33.5,733.9 34.0,734.5 34.5,735.1 35.0,735.8 35.5,736.5 36.0,737.3 36.5,738.1 37.0,739.3 37.5,740.8 38.0,742.6 38.5,744.6 39.0,746.7 39.5,748.8 40.0,750.8 40.5,752.7 41.0,754.4 41.5,755.8 42.0,757.2 42.5,758.7 43.0,760.2 43.5,761.4 44.0,762.5 44.5,763.2 45.0,763.5 45.5,763.0 46.0,761.4 46.5,758.8 47.0,755.8 47.5,752.4 48.0,749.0 48.5,745.9 49.0,743.3 49.5,741.6 50.0,740.6 50.5,739.6 51.0,738.6 51.5,737.8 52.0,737.0 52.5,736.4 53.0,736.0 53.5,735.8 54.0,735.7 54.5,736.1 55.0,736.8 55.5,737.7 56.0,738.7 56.5,739.9 57.0,741.1 57.5,742.2 58.0,743.2 58.5,743.9 59.0,744.4 59.5,744.4 60.0,744.0 60.5,743.1 61.0,741.8 61.5,740.2 62.0,738.4 62.5,736.6 63.0,734.7 63.5,733.0 64.0,731.5 64.5,730.2 65.0,729.3 65.5,729.0 66.0,729.0 66.5,729.2 67.0,729.6 67.5,730.0 68.0,730.5 68.5,731.1 69.0,731.7 69.5,732.5 70.0,733.6 70.5,734.8 71.0,736.2 71.5,737.6 72.0,738.9 72.5,740.0 73.0,740.8 73.5,741.4 74.0,741.5 74.5,741.5 75.0,741.5 75.5,741.5 76.0,741.5 76.5,741.5 77.0,741.5 77.5,741.6 78.0,742.1 78.5,743.0 79.0,744.0 79.5,745.3 80.0,746.7 80.5,748.1 81.0,749.5 81.5,750.7 82.0,751.8 82.5,752.6 83.0,753.1 83.5,753.2 84.0,753.2 84.5,753.1 85.0,752.9 85.5,752.6 86.0,752.3 86.5,752.0 87.0,751.6 87.5,751.2 88.0,750.7 88.5,750.2 89.0,749.7 89.5,749.2 90.0,748.6 90.5,748.0 91.0,746.9 91.5,745.6 92.0,744.1 92.5,742.4 93.0,740.7 93.5,739.1 94.0,737.5 94.5,736.2 95.0,735.2 95.5,734.6 96.0,734.5 96.5,734.8 97.0,735.4 97.5,736.3 98.0,737.3 98.5,738.5 99.0,739.7 99.5,740.8 100.0,741.8 100.5,742.6 101.0,743.1 101.5,743.2 102.0,743.0 102.5,742.5 103.0,741.8 103.5,741.0 104.0,740.0 104.5,739.0 105.0,738.0 105.5,737.0 106.0,735.5 106.5,733.8 107.0,731.9 107.5,730.3 108.0,728.9 108.5,728.0 109.0,727.7 109.5,728.3 110.0,729.5 110.5,731.2 111.0,733.3 111.5,735.7 112.0,738.1 112.5,740.5 113.0,742.7 113.5,744.5 114.0,745.8 114.5,746.4 115.0,746.4 115.5,745.9 116.0,745.1 116.5,744.1 117.0,742.8 117.5,741.4 118.0,739.9 118.5,738.4 119.0,737.0 119.5,735.6 120.0,734.4 120.5,733.0 121.0,731.5 121.5,729.9 122.0,728.3 122.5,726.8 123.0,725.5 123.5,724.4 124.0,723.6 124.5,723.2 125.0,723.3 125.5,724.0 126.0,725.2 126.5,726.7 127.0,728.5 127.5,730.4 128.0,732.3 128.5,734.0 129.0,735.5 129.5,736.6 130.0,737.2 130.5,737.1 131.0,736.7 131.5,736.1 132.0,735.2 132.5,734.2 133.0,733.3 133.5,732.5 134.0,731.8 134.5,731.5 135.0,731.5 135.5,731.6 136.0,731.7 136.5,732.0 137.0,732.3 137.5,732.6 138.0,732.9 138.5,733.3 139.0,733.7 139.5,734.0 140.0,734.4 140.5,734.7 141.0,735.0 141.5,735.2 142.0,735.4 142.5,735.5 143.0,735.7 143.5,735.8 144.0,735.9 144.5,736.1 145.0,736.3 145.5,736.7 146.0,737.7 146.5,739.1 147.0,740.8 147.5,742.7 148.0,744.6 148.5,746.4 149.0,748.0 149.5,749.1 150.0,749.8 150.5,750.5 151.0,751.0 151.5,751.6 152.0,752.1 152.5,752.6 153.0,753.1 153.5,753.5 154.0,753.9 154.5,754.2 155.0,754.4 155.5,754.6 156.0,754.7 156.5,754.7 157.0,754.7 157.5,754.7 158.0,754.6 158.5,754.5 159.0,754.4 159.5,754.2 160.0,754.0 160.5,753.8 161.0,753.6 161.5,753.4 162.0,753.1 162.5,752.9 163.0,752.6 163.5,752.1 164.0,751.5 164.5,750.7 165.0,749.7 165.5,748.7 166.0,747.6 166.5,746.5 167.0,745.3 167.5,744.2 168.0,743.1 168.5,742.1 169.0,741.3 169.5,740.5 170.0,740.0 170.5,739.6 171.0,739.5 171.5,739.5 172.0,739.8 172.5,740.1 173.0,740.5 173.5,741.0 174.0,741.5 174.5,742.0 175.0,742.5 175.5,743.0 176.0,743.5 176.5,744.2 177.0,744.8 177.5,745.4 178.0,745.7 178.5,745.7 179.0,745.5 179.5,745.1 180.0,744.6 180.5,744.0 181.0,743.3 181.5,742.7 182.0,742.2 182.5,741.8 183.0,741.5 183.5,741.5 184.0,741.8 184.5,742.5 185.0,743.3 185.5,744.3 186.0,745.5 186.5,746.7 187.0,747.9 187.5,749.0 188.0,750.0 188.5,750.7 189.0,751.3 189.5,751.5 190.0,751.4 190.5,751.2 191.0,750.8 191.5,750.4 192.0,749.8 192.5,749.3 193.0,748.7 193.5,748.2 194.0,747.8 194.5,747.5 195.0,747.3 195.5,747.2 196.0,747.3 196.5,747.3 197.0,747.4 197.5,747.4 198.0,747.5 198.5,747.6 199.0,747.7 199.5,747.9 200.0,748.2 200.5,748.6 201.0,749.1 201.5,749.7 202.0,750.3 202.5,751.0 203.0,751.8 203.5,752.5 204.0,753.3 204.5,754.1 205.0,754.8 205.5,755.5 206.0,756.4 206.5,757.4 207.0,758.5 207.5,759.6 208.0,760.6 208.5,761.6 209.0,762.4 209.5,763.1 210.0,763.4 210.5,763.5 211.0,763.2 211.5,762.6 212.0,761.9 212.5,760.9 213.0,759.9 213.5,758.9 214.0,758.0 214.5,757.1 215.0,756.5 215.5,756.1 216.0,756.0 216.5,756.5 217.0,757.6 217.5,759.0 218.0,760.6 218.5,762.3 219.0,764.0 219.5,765.6 220.0,766.9 220.5,768.2 221.0,769.6 221.5,771.1 222.0,772.5 222.5,773.7 223.0,774.7 223.5,775.5 224.0,775.8 224.5,775.7 225.0,775.4 225.5,775.0 226.0,774.4 226.5,773.7 227.0,773.0 227.5,772.1 228.0,771.3 228.5,770.5 229.0,769.7 229.5,768.9 230.0,768.3 230.5,767.8 231.0,767.4 231.5,767.3 232.0,767.4 232.5,767.9 233.0,768.7 233.5,769.8 234.0,771.1 234.5,772.6 235.0,774.1 235.5,775.7 236.0,777.8 236.5,780.6 237.0,783.7 237.5,787.1 238.0,790.6 238.5,793.9 239.0,797.1 239.5,799.9 240.0,802.5 240.5,805.1 241.0,807.7 241.5,810.3 242.0,812.9 242.5,815.7 243.0,818.6 243.5,821.6 244.0,824.7 244.5,827.8 245.0,831.1 245.5,834.5 246.0,838.1 246.5,841.8 247.0,845.7 247.5,849.6 248.0,853.6 248.5,857.9 249.0,862.7 249.5,868.1 250.0,874.4 250.5,885.1 251.0,893.0 251.5,893.0 252.0,893.0 252.5,893.0 253.0,893.0 253.5,893.0 254.0,893.0 254.5,893.0 255.0,893.0 255.5,893.0 256.0,893.0 256.5,893.0 257.0,893.0 257.5,893.0 258.0,893.0 258.5,893.0 259.0,893.0 259.5,893.0 260.0,887.6 260.5,869.4 261.0,843.5 261.5,822.6 262.0,804.7 262.5,780.9 263.0,757.4 263.5,743.1 264.0,730.3 264.5,712.2 265.0,689.8 265.5,676.5 266.0,669.7 266.5,663.9 267.0,659.2 267.5,655.7 268.0,653.7 268.5,653.1 269.0,653.3 269.5,653.8 270.0,654.5 270.5,655.4 271.0,656.3 271.5,657.3 272.0,658.2 272.5,659.2 273.0,660.2 273.5,661.4 274.0,662.7 274.5,664.2 275.0,665.9 275.5,667.9 276.0,670.5 276.5,674.0 277.0,678.0 277.5,682.3 278.0,686.6 278.5,690.6 279.0,694.7 279.5,699.2 280.0,703.6 280.5,707.9 281.0,711.5 281.5,714.3 282.0,716.3 282.5,718.1 283.0,719.6 283.5,720.8 284.0,721.4 284.5,721.4 285.0,721.3 285.5,721.1 286.0,720.9 286.5,720.6 287.0,720.4 287.5,720.2 288.0,720.2 288.5,720.5 289.0,721.1 289.5,721.9 290.0,722.5 290.5,722.7 291.0,722.6 291.5,722.3 292.0,721.8 292.5,721.3 293.0,720.8 293.5,720.2 294.0,719.7 294.5,719.3 295.0,719.0 295.5,718.9 296.0,719.0 296.5,719.3 297.0,719.6 297.5,720.0 298.0,720.4 298.5,720.8 299.0,721.1 299.5,721.4 300.0,721.4 300.5,721.1 301.0,720.2 301.5,718.8 302.0,717.3 302.5,715.6 303.0,714.0 303.5,712.7 304.0,711.7 304.5,711.2 305.0,710.8 305.5,710.4 306.0,710.1 306.5,709.8 307.0,709.6 307.5,709.5 308.0,709.4 308.5,709.9 309.0,711.1 309.5,712.9 310.0,715.0 310.5,717.3 311.0,719.5 311.5,721.5 312.0,723.1 312.5,723.9 313.0,724.4 313.5,724.7 314.0,725.0 314.5,725.2 315.0,725.4 315.5,725.7 316.0,725.9 316.5,726.2 317.0,726.7 317.5,727.3 318.0,728.0 318.5,728.8 319.0,729.7 319.5,730.6 320.0,731.5 320.5,732.3 321.0,733.1 321.5,733.7 322.0,734.2 322.5,734.5 323.0,734.9 323.5,735.2 324.0,735.4 324.5,735.7 325.0,736.1 325.5,736.5 326.0,736.9 326.5,737.5 327.0,738.2 327.5,738.9 328.0,739.7 328.5,740.6 329.0,741.5 329.5,742.3 330.0,743.2 330.5,744.0 331.0,744.8 331.5,745.6 332.0,746.2 332.5,746.8 333.0,747.2 333.5,747.5 334.0,747.7 334.5,747.7 335.0,747.1 335.5,745.9 336.0,744.4 336.5,742.7 337.0,740.9 337.5,739.2 338.0,737.7 338.5,736.5 339.0,735.7 339.5,734.8 340.0,734.0 340.5,733.2 341.0,732.5 341.5,732.0 342.0,731.6 342.5,731.5 343.0,731.7 343.5,732.5 344.0,733.7 344.5,735.2 345.0,736.9 345.5,738.8 346.0,740.6 346.5,742.4 347.0,744.0 347.5,745.2 348.0,746.1 348.5,746.5 349.0,746.1 349.5,744.9 350.0,742.9 350.5,740.5 351.0,737.8 351.5,735.0 352.0,732.3 352.5,729.9 353.0,727.9 353.5,726.3 354.0,724.7 354.5,723.0 355.0,721.5 355.5,720.1 356.0,719.1 356.5,718.6 357.0,718.5 357.5,718.7 358.0,719.1 358.5,719.7 359.0,720.4 359.5,721.2 360.0,721.9 360.5,722.6 361.0,723.2 361.5,723.7 362.0,724.3 362.5,724.9 363.0,725.5 363.5,726.2 364.0,727.1 364.5,728.1 365.0,729.9 365.5,732.4 366.0,735.5 366.5,738.9 367.0,742.6 367.5,746.2 368.0,749.7 368.5,752.7 369.0,755.2 369.5,757.0 370.0,757.7 370.5,757.3 371.0,755.5 371.5,752.9 372.0,750.1 372.5,747.4 373.0,745.5 373.5,744.3 374.0,743.1 374.5,742.0 375.0,741.2 375.5,740.5 376.0,740.2 376.5,740.5 377.0,741.5 377.5,743.1 378.0,745.0 378.5,747.1 379.0,749.1 379.5,750.8 380.0,752.1 380.5,752.7 381.0,752.3 381.5,750.4 382.0,747.5 382.5,744.0 383.0,740.4 383.5,737.0 384.0,734.1 384.5,732.3 385.0,730.8 385.5,729.4 386.0,728.1 386.5,727.1 387.0,726.3 387.5,726.0 388.0,726.0 388.5,726.3 389.0,726.9 389.5,727.6 390.0,728.3 390.5,729.2 391.0,730.1 391.5,730.9 392.0,731.6 392.5,732.4 393.0,733.2 393.5,734.0 394.0,734.9 394.5,735.8 395.0,736.7 395.5,737.5 396.0,738.4 396.5,739.2 397.0,740.0 397.5,740.7 398.0,741.3 398.5,741.9 399.0,742.5 399.5,743.1 400.0,743.7 400.5,744.3 401.0,744.8 401.5,745.4 402.0,745.8 402.5,746.2 403.0,746.6 403.5,746.8 404.0,746.9 404.5,747.0 405.0,746.9 405.5,746.8 406.0,746.6 406.5,746.3 407.0,746.0 407.5,745.7 408.0,745.4 408.5,744.9 409.0,744.1 409.5,742.9 410.0,741.6 410.5,740.1 411.0,738.6 411.5,737.1 412.0,735.8 412.5,734.7 413.0,733.9 413.5,733.5 414.0,733.5 414.5,733.8 415.0,734.3 415.5,735.0 416.0,735.8 416.5,736.7 417.0,737.6 417.5,738.5 418.0,739.4 418.5,740.2 419.0,740.8 419.5,741.2 420.0,741.5 420.5,741.5 421.0,741.4 421.5,741.2 422.0,741.0 422.5,740.8 423.0,740.6 423.5,740.3 424.0,740.1 424.5,739.9 425.0,739.8 425.5,739.7 426.0,739.8 426.5,740.0 427.0,740.4 427.5,740.9 428.0,741.4 428.5,741.8 429.0,742.1 429.5,742.2 430.0,742.0 430.5,741.4 431.0,740.4 431.5,739.2 432.0,737.8 432.5,736.2 433.0,734.5 433.5,732.7 434.0,731.0 434.5,729.3 435.0,727.6 435.5,726.1 436.0,724.9 436.5,723.8 437.0,723.1 437.5,722.7 438.0,722.7 438.5,722.8 439.0,723.0 439.5,723.4 440.0,723.7 440.5,724.2 441.0,724.7 441.5,725.3 442.0,726.0 442.5,726.7 443.0,727.4 443.5,728.2 444.0,729.5 444.5,731.2 445.0,733.2 445.5,735.2 446.0,737.2 446.5,738.9 447.0,740.3 447.5,741.5 448.0,742.8 448.5,743.9 449.0,744.9 449.5,745.5 450.0,745.7 450.5,745.6 451.0,745.2 451.5,744.7 452.0,743.9 452.5,743.0 453.0,742.1 453.5,741.0 454.0,739.9 454.5,738.8 455.0,737.7 455.5,736.6 456.0,735.6 456.5,734.8 457.0,734.0 457.5,733.2 458.0,732.4 458.5,731.6 459.0,730.8 459.5,729.9 460.0,728.9 460.5,727.7 461.0,726.1 461.5,723.9 462.0,721.3 462.5,718.6 463.0,716.0 463.5,713.8 464.0,712.2 464.5,711.4 465.0,711.2 465.5,711.0 466.0,710.9 466.5,710.8 467.0,710.7 467.5,710.7 468.0,710.9 468.5,711.6 469.0,712.6 469.5,713.9 470.0,715.4 470.5,717.0 471.0,718.6 471.5,720.1 472.0,721.5 472.5,722.7 473.0,723.6 473.5,724.6 474.0,725.5 474.5,726.3 475.0,727.2 475.5,728.0 476.0,728.9 476.5,729.7 477.0,730.5 477.5,731.4 478.0,732.4 478.5,733.4 479.0,734.6 479.5,735.7 480.0,736.9 480.5,738.1 481.0,739.2 481.5,740.3 482.0,741.1 482.5,741.9 483.0,742.4 483.5,742.7 484.0,742.7 484.5,742.2 485.0,741.4 485.5,740.3 486.0,739.0 486.5,737.7 487.0,736.4 487.5,735.3 488.0,734.3 488.5,733.2 489.0,732.0 489.5,730.8 490.0,729.8 490.5,728.9 491.0,728.2 491.5,727.8 492.0,727.8 492.5,728.3 493.0,729.3 493.5,730.6 494.0,732.1 494.5,733.6 495.0,735.1 495.5,736.5 496.0,738.4 496.5,740.3 497.0,742.3 497.5,744.1 498.0,745.5 498.5,746.3 499.0,746.5 499.5,746.5 500.0,746.5 500.5,746.5 501.0,746.5 501.5,746.5 502.0,746.5 502.5,746.5 503.0,746.2 503.5,745.3 504.0,744.2 504.5,742.9 505.0,742.0 505.5,741.5 506.0,741.6 506.5,742.2 507.0,743.0 507.5,743.9 508.0,745.0 508.5,746.0 509.0,746.8 509.5,747.5 510.0,747.7 510.5,747.7 511.0,747.4 511.5,746.9 512.0,746.3 512.5,745.6 513.0,744.8 513.5,744.0 514.0,743.2 514.5,741.9 515.0,740.3 515.5,738.4 516.0,736.6 516.5,735.0 517.0,733.8 517.5,733.2 518.0,733.4 518.5,734.2 519.0,735.4 519.5,736.8 520.0,738.4 520.5,739.9 521.0,741.6 521.5,743.8 522.0,746.3 522.5,748.9 523.0,751.4 523.5,753.5 524.0,755.0 524.5,755.7 525.0,755.4 525.5,754.1 526.0,752.0 526.5,749.4 527.0,746.5 527.5,743.5 528.0,740.8 528.5,738.0 529.0,734.6 529.5,730.8 530.0,727.3 530.5,724.3 531.0,722.4 531.5,721.9 532.0,722.0 532.5,722.1 533.0,722.3 533.5,722.5 534.0,722.8 534.5,723.3 535.0,724.3 535.5,725.6 536.0,727.1 536.5,728.9 537.0,730.8 537.5,732.9 538.0,735.0 538.5,737.1 539.0,739.1 539.5,741.0 540.0,742.9 540.5,744.9 541.0,747.0 541.5,749.2 542.0,751.3 542.5,753.2 543.0,754.8 543.5,756.3 544.0,757.8 544.5,759.3 545.0,760.7 545.5,761.9 546.0,762.9 546.5,763.7 547.0,764.0 547.5,763.9 548.0,763.3 548.5,762.3 549.0,761.0 549.5,759.6 550.0,758.0 550.5,756.5 551.0,755.0 551.5,753.8 552.0,752.4 552.5,750.9 553.0,749.4 553.5,747.8 554.0,746.4 554.5,745.3 555.0,744.4 555.5,744.0 556.0,744.2 556.5,745.2 557.0,746.5 557.5,747.7 558.0,748.4 558.5,748.5 559.0,748.4 559.5,748.3 560.0,748.1 560.5,747.9 561.0,747.6 561.5,747.3 562.0,747.0 562.5,746.6 563.0,746.2 563.5,745.4 564.0,744.3 564.5,743.0 565.0,741.4 565.5,739.8 566.0,738.1 566.5,736.4 567.0,734.8 567.5,733.2 568.0,731.7 568.5,730.0 569.0,728.1 569.5,726.2 570.0,724.5 570.5,723.1 571.0,722.2 571.5,721.9 572.0,722.0 572.5,722.2 573.0,722.4 573.5,722.7 574.0,723.0 574.5,723.4 575.0,723.8 575.5,724.3 576.0,725.0 576.5,725.9 577.0,726.9 577.5,727.9 578.0,728.7 578.5,729.3 579.0,729.5 579.5,729.3 580.0,729.1 580.5,728.6 581.0,728.1 581.5,727.5 582.0,726.9 582.5,726.2 583.0,725.4 583.5,724.2 584.0,722.8 584.5,721.4 585.0,720.2 585.5,719.5 586.0,719.5 586.5,719.5 587.0,719.6 587.5,719.8 588.0,720.0 588.5,720.2 589.0,720.4 589.5,720.7 590.0,721.0 590.5,721.3 591.0,721.7 591.5,722.1 592.0,722.7 592.5,723.4 593.0,724.1 593.5,725.0 594.0,726.0 594.5,727.0 595.0,728.0 595.5,729.2 596.0,730.3 596.5,731.5 597.0,733.0 597.5,734.7 598.0,736.7 598.5,738.7 599.0,740.8 599.5,742.8 600.0,744.5 600.5,746.1 601.0,747.7 601.5,749.4 602.0,750.9 602.5,752.0 603.0,752.7 603.5,752.7 604.0,752.1 604.5,751.1 605.0,749.8 605.5,748.2 606.0,746.7 606.5,745.2 607.0,743.4 607.5,741.2 608.0,738.8 608.5,736.6 609.0,735.1 609.5,734.5 610.0,734.7 610.5,735.4 611.0,736.5 611.5,737.7 612.0,739.2 612.5,740.7 613.0,742.4 613.5,744.8 614.0,747.9 614.5,751.4 615.0,755.0 615.5,758.5 616.0,761.5 616.5,763.8 617.0,765.1 617.5,765.1 618.0,764.0 618.5,762.0 619.0,759.4 619.5,756.4 620.0,753.2 620.5,750.1 621.0,747.4 621.5,745.3 622.0,743.5 622.5,741.7 623.0,739.9 623.5,738.3 624.0,736.9 624.5,735.9 625.0,735.3 625.5,735.2 626.0,735.5 626.5,736.0 627.0,736.6 627.5,737.4 628.0,738.1 628.5,738.8 629.0,739.7 629.5,740.8 630.0,742.0 630.5,743.2 631.0,744.3 631.5,745.3 632.0,746.0 632.5,746.4 633.0,746.4 633.5,746.0 634.0,745.2 634.5,744.2 635.0,742.9 635.5,741.5 636.0,740.0 636.5,738.5 637.0,737.1 637.5,735.9 638.0,734.9 638.5,734.2 639.0,734.0 639.5,734.2 640.0,734.9 640.5,736.1 641.0,737.5 641.5,739.2 642.0,740.9 642.5,742.6 643.0,744.1 643.5,745.4 644.0,746.4 644.5,747.1 645.0,747.8 645.5,748.5 646.0,749.2 646.5,749.8 647.0,750.4 647.5,750.8 648.0,751.2 648.5,751.4 649.0,751.5 649.5,751.0 650.0,749.3 650.5,747.0 651.0,744.3 651.5,741.8 652.0,739.8 652.5,738.6 653.0,737.7 653.5,736.9 654.0,736.1 654.5,735.6 655.0,735.3 655.5,735.2 656.0,735.5 656.5,736.1 657.0,736.9 657.5,737.8 658.0,738.9 658.5,740.1 659.0,741.3 659.5,742.7 660.0,744.8 660.5,747.3 661.0,749.9 661.5,752.3 662.0,754.5 662.5,756.0 663.0,756.7 663.5,757.1 664.0,757.5 664.5,757.9 665.0,758.1 665.5,758.2 666.0,758.2 666.5,757.6 667.0,756.3 667.5,754.6 668.0,752.7 668.5,750.7 669.0,748.8 669.5,747.3 670.0,746.2 670.5,745.3 671.0,744.4 671.5,743.5 672.0,742.7 672.5,742.1 673.0,741.7 673.5,741.5 674.0,741.7 674.5,742.4 675.0,743.6 675.5,745.1 676.0,746.8 676.5,748.6 677.0,750.8 677.5,754.1 678.0,758.1 678.5,762.2 679.0,766.0 679.5,768.9 680.0,770.6 680.5,771.8 681.0,772.8 681.5,773.3 682.0,772.8 682.5,770.8 683.0,767.7 683.5,763.9 684.0,759.7 684.5,755.5 685.0,751.9 685.5,749.0 686.0,747.4 686.5,746.3 687.0,745.2 687.5,744.3 688.0,743.5 688.5,742.8 689.0,742.2 689.5,741.7 690.0,741.4 690.5,741.1 691.0,740.9 691.5,740.7 692.0,740.5 692.5,740.3 693.0,740.2 693.5,740.2 694.0,740.4 694.5,740.7 695.0,741.2 695.5,741.9 696.0,742.6 696.5,743.3 697.0,744.0 697.5,744.7 698.0,745.4 698.5,746.1 699.0,746.9 699.5,747.7 700.0,748.5 700.5,749.3 701.0,750.0 701.5,750.6 702.0,750.9 702.5,751.0 703.0,750.6 703.5,749.8 704.0,748.6 704.5,747.3 705.0,745.8 705.5,744.3 706.0,742.9 706.5,741.8 707.0,740.9 707.5,739.9 708.0,738.9 708.5,738.0 709.0,737.1 709.5,736.5 710.0,736.1 710.5,736.0 711.0,736.9 711.5,738.9 712.0,741.6 712.5,744.9 713.0,748.3 713.5,751.6 714.0,754.4 714.5,756.8 715.0,759.5 715.5,762.2 716.0,764.9 716.5,767.3 717.0,769.2 717.5,770.4 718.0,770.8 718.5,770.0 719.0,768.2 719.5,765.7 720.0,762.6 720.5,759.4 721.0,756.1 721.5,753.1 722.0,750.5 722.5,748.8 723.0,747.4 723.5,746.0 724.0,744.6 724.5,743.3 725.0,742.0 725.5,740.8 726.0,739.7 726.5,738.7 727.0,737.8 727.5,737.1 728.0,736.6 728.5,736.2 729.0,736.0 729.5,736.1 730.0,736.7 730.5,737.8 731.0,739.2 731.5,740.7 732.0,742.4 732.5,744.0 733.0,745.4 733.5,746.9 734.0,748.6 734.5,750.4 735.0,752.2 735.5,754.0 736.0,755.5 736.5,756.7 737.0,757.5 737.5,757.8 738.0,757.4 738.5,756.5 739.0,755.2 739.5,753.6 740.0,751.9 740.5,750.1 741.0,747.9 741.5,745.1 742.0,742.0 742.5,738.5 743.0,735.1 743.5,731.8 744.0,728.8 744.5,726.3 745.0,723.7 745.5,721.1 746.0,718.6 746.5,716.3 747.0,714.4 747.5,713.0 748.0,712.2 748.5,711.7 749.0,711.2 749.5,710.8 750.0,710.5 750.5,710.3 751.0,710.2 751.5,710.4 752.0,711.5 752.5,713.5 753.0,716.1 753.5,718.8 754.0,721.5 754.5,724.0 755.0,726.9 755.5,730.2 756.0,733.4 756.5,736.4 757.0,738.7 757.5,740.2 758.0,741.2 758.5,742.1 759.0,742.9 759.5,743.5 760.0,743.8 760.5,744.0 761.0,744.0 761.5,744.0 762.0,743.9 762.5,743.9 763.0,743.8 763.5,743.8 764.0,743.7 764.5,743.7 765.0,743.6 765.5,743.5 766.0,743.5 766.5,743.4 767.0,743.4 767.5,743.3 768.0,743.3 768.5,743.2 769.0,743.2 769.5,743.3 770.0,743.8 770.5,744.7 771.0,745.8 771.5,747.0 772.0,748.2 772.5,749.2 773.0,750.0 773.5,750.2 774.0,750.2 774.5,750.0 775.0,749.7 775.5,749.4 776.0,749.1 776.5,748.8 777.0,748.5 777.5,748.3 778.0,748.2 778.5,748.4 779.0,748.9 779.5,749.6 780.0,750.5 780.5,751.4 781.0,752.4 781.5,753.3 782.0,754.0 782.5,754.5 783.0,754.7 783.5,754.6 784.0,754.0 784.5,753.1 785.0,752.0 785.5,750.7 786.0,749.4 786.5,747.9 787.0,746.5 787.5,745.2 788.0,744.1 788.5,743.0 789.0,741.7 789.5,740.5 790.0,739.2 790.5,738.0 791.0,736.9 791.5,736.0 792.0,735.5 792.5,735.2 793.0,735.4 793.5,736.2 794.0,737.2 794.5,738.6 795.0,740.1 795.5,741.5 796.0,742.9 796.5,744.1 797.0,744.9 797.5,745.2 798.0,745.0 798.5,744.4 799.0,743.3 799.5,742.0 800.0,740.6 800.5,739.0 801.0,737.5 801.5,736.2 802.0,735.1 802.5,734.3 803.0,734.0 803.5,734.2 804.0,735.0 804.5,736.3 805.0,737.9 805.5,739.6 806.0,741.3 806.5,743.0 807.0,744.3 807.5,745.3 808.0,745.7 808.5,745.2 809.0,743.4 809.5,740.8 810.0,737.9 810.5,735.1 811.0,733.0 811.5,731.4 812.0,729.8 812.5,728.3 813.0,727.0 813.5,726.0 814.0,725.3 814.5,725.2 815.0,725.6 815.5,726.4 816.0,727.4 816.5,728.7 817.0,730.0 817.5,731.3 818.0,732.4 818.5,733.3 819.0,733.8 819.5,733.9 820.0,733.7 820.5,733.2 821.0,732.5 821.5,731.7 822.0,730.8 822.5,730.0 823.0,729.2 823.5,728.6 824.0,728.3 824.5,728.2 825.0,728.5 825.5,729.0 826.0,729.8 826.5,730.7 827.0,731.7 827.5,732.8 828.0,733.8 828.5,734.8 829.0,735.7 829.5,736.5 830.0,737.0 830.5,737.2 831.0,737.2 831.5,737.0 832.0,736.8 832.5,736.4 833.0,736.0 833.5,735.5 834.0,734.9 834.5,734.3 835.0,733.6 835.5,732.9 836.0,731.9 836.5,730.3 837.0,728.3 837.5,726.1 838.0,723.9 838.5,722.0 839.0,720.7 839.5,720.1 840.0,719.8 840.5,719.5 841.0,719.3 841.5,719.1 842.0,719.0 842.5,718.9 843.0,719.1 843.5,719.8 844.0,721.0 844.5,722.4 845.0,723.9 845.5,725.5 846.0,726.8 846.5,727.9 847.0,728.9 847.5,730.0 848.0,731.1 848.5,732.1 849.0,733.0 849.5,733.7 850.0,734.2 850.5,734.5 851.0,734.4 851.5,733.9 852.0,733.0 852.5,732.0 853.0,730.8 853.5,729.6 854.0,728.5 854.5,727.5 855.0,726.8 855.5,726.5 856.0,726.6 856.5,727.5 857.0,728.9 857.5,730.7 858.0,732.7 858.5,734.6 859.0,736.6 859.5,738.9 860.0,741.6 860.5,744.5 861.0,747.5 861.5,750.3 862.0,753.0 862.5,755.4 863.0,757.2 863.5,758.7 864.0,760.1 864.5,761.4 865.0,762.7 865.5,763.9 866.0,764.9 866.5,765.7 867.0,766.2 867.5,766.5 868.0,766.5 868.5,766.4 869.0,766.2 869.5,766.0 870.0,765.7 870.5,765.4 871.0,764.8 871.5,763.3 872.0,761.0 872.5,758.2 873.0,755.2 873.5,752.3 874.0,749.6 874.5,747.5 875.0,745.7 875.5,744.0 876.0,742.5 876.5,741.2 877.0,740.1 877.5,739.2 878.0,738.3 878.5,737.4 879.0,736.8 879.5,736.3 880.0,736.0 880.5,736.0 881.0,736.0 881.5,736.1 882.0,736.3 882.5,736.5 883.0,736.7 883.5,737.0 884.0,737.2 884.5,737.6 885.0,737.9 885.5,738.2 886.0,738.6 886.5,739.0 887.0,739.3 887.5,739.7 888.0,740.1 888.5,740.5 889.0,741.0 889.5,741.6 890.0,742.3 890.5,743.0 891.0,743.7 891.5,744.5 892.0,745.1 892.5,745.7 893.0,746.1 893.5,746.4 894.0,746.5 894.5,745.8 895.0,744.3 895.5,742.1 896.0,739.7 896.5,737.2 897.0,735.1 897.5,732.9 898.0,730.5 898.5,728.1 899.0,725.9 899.5,724.5 900.0,723.9 900.5,724.1 901.0,724.5 901.5,725.0 902.0,725.7 902.5,726.5 903.0,727.8 903.5,729.9 904.0,732.4 904.5,734.9 905.0,736.9 905.5,738.1 906.0,738.0 906.5,736.5 907.0,733.8 907.5,730.6 908.0,727.2 908.5,724.0 909.0,721.3 909.5,718.3 910.0,715.1 910.5,712.1 911.0,709.7 911.5,708.4 912.0,708.3 912.5,709.1 913.0,710.5 913.5,712.4 914.0,714.4 914.5,716.4 915.0,719.0 915.5,722.3 916.0,726.0 916.5,729.3 917.0,731.7 917.5,732.7 918.0,732.7 918.5,732.7 919.0,732.7 919.5,732.7 920.0,732.7 920.5,732.7 921.0,732.7 921.5,732.8 922.0,733.6 922.5,735.1 923.0,736.9 923.5,739.0 924.0,741.0 924.5,742.7 925.0,744.3 925.5,746.1 926.0,748.0 926.5,749.8 927.0,751.3 927.5,752.3 928.0,752.7 928.5,752.4 929.0,751.3 929.5,749.7 930.0,747.8 930.5,745.7 931.0,743.7 931.5,741.9 932.0,739.7 932.5,737.3 933.0,734.9 933.5,732.8 934.0,731.4 934.5,730.8 935.0,730.4 935.5,730.1 936.0,729.8 936.5,729.6 937.0,729.5 937.5,729.5 938.0,729.8 938.5,730.8 939.0,732.1 939.5,733.7 940.0,735.1 940.5,736.5 941.0,738.2 941.5,740.1 942.0,741.9 942.5,743.6 943.0,744.8 943.5,745.6 944.0,745.7 944.5,745.1 945.0,744.1 945.5,742.8 946.0,741.2 946.5,739.6 947.0,738.0 947.5,736.6 948.0,735.5 948.5,734.8 949.0,734.7 949.5,735.0 950.0,735.5 950.5,736.3 951.0,737.2 951.5,738.2 952.0,739.2 952.5,740.3 953.0,741.2 953.5,742.1 954.0,742.8 954.5,743.3 955.0,743.5 955.5,743.5 956.0,743.4 956.5,743.4 957.0,743.3 957.5,743.2 958.0,743.1 958.5,743.1 959.0,743.0 959.5,742.9 960.0,742.8 960.5,742.8 961.0,742.7 961.5,742.8 962.0,743.1 962.5,743.6 963.0,744.3 963.5,745.0 964.0,745.5 964.5,745.7 965.0,745.6 965.5,745.0 966.0,744.1 966.5,743.0 967.0,741.8 967.5,740.5 968.0,739.3 968.5,738.3 969.0,737.5 969.5,736.7 970.0,736.0 970.5,735.2 971.0,734.6 971.5,734.0 972.0,733.6 972.5,733.5 973.0,733.8 973.5,734.8 974.0,736.4 974.5,738.3 975.0,740.2 975.5,741.8 976.0,743.0 976.5,744.1 977.0,745.3 977.5,746.3 978.0,747.1 978.5,747.6 979.0,747.7 979.5,746.6 980.0,744.5 980.5,742.0 981.0,739.4 981.5,737.2 982.0,734.7 982.5,732.1 983.0,729.7 983.5,728.1 984.0,727.7 984.5,727.9 985.0,728.3 985.5,728.9 986.0,729.7 986.5,730.4 987.0,731.2 987.5,732.0 988.0,732.8 988.5,733.7 989.0,734.6 989.5,735.7 990.0,736.7 990.5,737.6 991.0,738.4 991.5,739.1 992.0,739.7 992.5,740.2 993.0,740.6 993.5,741.1 994.0,741.5 994.5,742.0 995.0,742.6 995.5,743.2 996.0,743.9 996.5,744.6 997.0,745.4 997.5,746.2 998.0,747.1 998.5,748.0 999.0,748.9 999.5,749.9 1000.0,751.0 1000.5,752.5 1001.0,754.1 1001.5,755.8 1002.0,757.6 1002.5,759.3 1003.0,760.9 1003.5,762.1 1004.0,763.0 1004.5,763.5 1005.0,763.3 1005.5,762.3 1006.0,760.7 1006.5,758.7 1007.0,756.2 1007.5,753.6 1008.0,750.4 1008.5,745.7 1009.0,740.0 1009.5,734.2 1010.0,729.1 1010.5,724.8 1011.0,720.4 1011.5,716.0 1012.0,712.2 1012.5,709.3 1013.0,707.8 1013.5,707.7 1014.0,707.7 1014.5,707.7 1015.0,707.7 1015.5,707.7 1016.0,707.7 1016.5,707.7 1017.0,708.6 1017.5,710.7 1018.0,713.4 1018.5,716.5 1019.0,719.5 1019.5,722.0 1020.0,723.8 1020.5,725.6 1021.0,727.2 1021.5,728.8 1022.0,730.3 1022.5,731.7 1023.0,733.0 1023.5,734.2 1024.0,735.3 1024.5,736.4 1025.0,737.4 1025.5,738.4 1026.0,739.3 1026.5,740.2 1027.0,741.1 1027.5,741.8 1028.0,742.6 1028.5,743.2 1029.0,743.8 1029.5,744.3 1030.0,744.7 1030.5,745.2 1031.0,745.6 1031.5,746.0 1032.0,746.3 1032.5,746.6 1033.0,746.8 1033.5,746.9 1034.0,747.0 1034.5,746.9 1035.0,746.7 1035.5,746.5 1036.0,746.1 1036.5,745.7 1037.0,745.3 1037.5,744.8 1038.0,744.4 1038.5,743.9 1039.0,743.4 1039.5,743.0 1040.0,742.5 1040.5,742.0 1041.0,741.5 1041.5,741.0 1042.0,740.4 1042.5,739.8 1043.0,739.2 1043.5,738.6 1044.0,737.9 1044.5,737.3 1045.0,736.5 1045.5,735.6 1046.0,734.5 1046.5,733.3 1047.0,732.1 1047.5,731.1 1048.0,730.2 1048.5,729.7 1049.0,729.5 1049.5,729.5 1050.0,729.5 1050.5,729.5 1051.0,729.5 1051.5,729.6 1052.0,729.6 1052.5,729.7 1053.0,729.8 1053.5,729.8 1054.0,729.9 1054.5,730.0 1055.0,730.1 1055.5,730.4 1056.0,731.3 1056.5,732.9 1057.0,734.8 1057.5,737.0 1058.0,739.2 1058.5,741.2 1059.0,742.7 1059.5,744.1 1060.0,745.6 1060.5,746.9 1061.0,747.9 1061.5,748.2 1062.0,747.8 1062.5,746.7 1063.0,745.5 1063.5,744.4 1064.0,744.0 1064.5,744.1 1065.0,744.3 1065.5,744.5 1066.0,744.8 1066.5,745.1 1067.0,745.2 1067.5,745.2 1068.0,744.9 1068.5,744.3 1069.0,743.4 1069.5,742.4 1070.0,741.2 1070.5,740.0 1071.0,738.7 1071.5,737.4 1072.0,736.2 1072.5,735.1 1073.0,734.1 1073.5,733.4 1074.0,732.9 1074.5,732.7 1075.0,732.9 1075.5,733.3 1076.0,734.0 1076.5,734.9 1077.0,736.0 1077.5,737.1 1078.0,738.2 1078.5,739.2 1079.0,740.2 1079.5,741.1 1080.0,742.3 1080.5,743.5 1081.0,744.6 1081.5,745.7 1082.0,746.5 1082.5,746.9 1083.0,746.9 1083.5,746.6 1084.0,746.0 1084.5,745.1 1085.0,744.2 1085.5,743.2 1086.0,742.2 1086.5,741.3 1087.0,740.7 1087.5,740.3 1088.0,740.2 1088.5,740.4 1089.0,740.6 1089.5,740.9 1090.0,741.3 1090.5,741.7 1091.0,742.1 1091.5,742.5 1092.0,742.9 1092.5,743.2 1093.0,743.4 1093.5,743.5 1094.0,743.1 1094.5,742.0 1095.0,740.3 1095.5,738.2 1096.0,735.9 1096.5,733.5 1097.0,731.3 1097.5,729.5 1098.0,728.3 1098.5,727.7 1099.0,728.1 1099.5,729.3 1100.0,731.2 1100.5,733.3 1101.0,735.5 1101.5,737.5 1102.0,739.4 1102.5,741.6 1103.0,743.9 1103.5,746.2 1104.0,748.2 1104.5,749.8 1105.0,750.8 1105.5,751.0 1106.0,751.0 1106.5,751.0 1107.0,751.0 1107.5,751.0 1108.0,751.0 1108.5,751.0 1109.0,751.0 1109.5,751.0 1110.0,751.0 1110.5,750.4 1111.0,749.4 1111.5,748.0 1112.0,746.4 1112.5,744.7 1113.0,743.0 1113.5,741.6 1114.0,740.4 1114.5,739.5 1115.0,738.6 1115.5,737.6 1116.0,736.8 1116.5,736.0 1117.0,735.3 1117.5,734.8 1118.0,734.5 1118.5,734.5 1119.0,734.6 1119.5,734.9 1120.0,735.2 1120.5,735.6 1121.0,735.8 1121.5,736.0 1122.0,735.9 1122.5,735.9 1123.0,735.8 1123.5,735.7 1124.0,735.5 1124.5,735.4 1125.0,735.3 1125.5,735.2 1126.0,735.3 1126.5,736.1 1127.0,737.8 1127.5,740.0 1128.0,742.5 1128.5,745.0 1129.0,747.3 1129.5,749.4 1130.0,751.7 1130.5,754.3 1131.0,756.7 1131.5,758.9 1132.0,760.7 1132.5,761.7 1133.0,762.0 1133.5,761.5 1134.0,760.3 1134.5,758.8 1135.0,756.9 1135.5,754.9 1136.0,752.8 1136.5,750.8 1137.0,749.1 1137.5,747.7 1138.0,746.8 1138.5,746.2 1139.0,745.8 1139.5,745.4 1140.0,745.1 1140.5,744.7 1141.0,744.4 1141.5,743.9 1142.0,743.3 1142.5,742.5 1143.0,740.8 1143.5,738.3 1144.0,735.4 1144.5,732.3 1145.0,729.5 1145.5,727.3 1146.0,725.1 1146.5,722.8 1147.0,720.8 1147.5,719.1 1148.0,718.0 1148.5,717.7 1149.0,718.3 1149.5,719.6 1150.0,721.1 1150.5,722.7 1151.0,724.0 1151.5,724.7 1152.0,724.7 1152.5,724.5 1153.0,724.3 1153.5,724.1 1154.0,724.0 1154.5,724.0 1155.0,724.2 1155.5,724.6 1156.0,725.1 1156.5,725.7 1157.0,726.2 1157.5,726.7 1158.0,727.2 1158.5,727.5 1159.0,727.7 1159.5,727.7 1160.0,727.5 1160.5,727.3 1161.0,726.9 1161.5,726.5 1162.0,726.0 1162.5,725.5 1163.0,725.0 1163.5,724.6 1164.0,724.1 1164.5,723.6 1165.0,723.1 1165.5,722.5 1166.0,721.9 1166.5,721.4 1167.0,721.0 1167.5,720.9 1168.0,721.2 1168.5,721.8 1169.0,722.6 1169.5,723.6 1170.0,724.6 1170.5,725.4 1171.0,726.1 1171.5,726.4 1172.0,726.4 1172.5,726.1 1173.0,725.6 1173.5,725.0 1174.0,724.5 1174.5,724.1 1175.0,724.0 1175.5,724.8 1176.0,726.5 1176.5,728.8 1177.0,731.1 1177.5,732.9 1178.0,734.6 1178.5,736.4 1179.0,738.2 1179.5,739.7 1180.0,740.7 1180.5,741.0 1181.0,740.2 1181.5,738.3 1182.0,735.8 1182.5,732.9 1183.0,730.0 1183.5,727.5 1184.0,725.7 1184.5,724.7 1185.0,723.8 1185.5,723.1 1186.0,722.7 1186.5,722.9 1187.0,724.0 1187.5,725.9 1188.0,728.3 1188.5,730.8 1189.0,733.2 1189.5,735.2 1190.0,736.5 1190.5,737.5 1191.0,738.4 1191.5,739.2 1192.0,739.9 1192.5,740.5 1193.0,740.9 1193.5,741.0 1194.0,740.7 1194.5,739.9 1195.0,738.9 1195.5,737.8 1196.0,736.7 1196.5,735.8 1197.0,735.3 1197.5,735.3 1198.0,735.6 1198.5,736.1 1199.0,736.9 1199.5,737.8 1200.0,738.8 1200.5,739.9 1201.0,740.9 1201.5,741.9 1202.0,742.9 1202.5,743.6 1203.0,744.2 1203.5,744.4 1204.0,744.4 1204.5,744.1 1205.0,743.6 1205.5,742.8 1206.0,741.9 1206.5,740.8 1207.0,739.7 1207.5,738.6 1208.0,737.6 1208.5,736.6 1209.0,735.7 1209.5,735.1 1210.0,734.6 1210.5,734.5 1211.0,734.9 1211.5,735.9 1212.0,737.4 1212.5,739.3 1213.0,741.2 1213.5,743.0 1214.0,744.5 1214.5,745.6 1215.0,746.0 1215.5,745.5 1216.0,744.0 1216.5,741.8 1217.0,739.1 1217.5,736.2 1218.0,733.3 1218.5,730.7 1219.0,728.5 1219.5,727.0 1220.0,725.5 1220.5,724.1 1221.0,722.8 1221.5,721.7 1222.0,721.0 1222.5,720.7 1223.0,720.9 1223.5,721.5 1224.0,722.5 1224.5,723.7 1225.0,725.1 1225.5,726.6 1226.0,728.1 1226.5,729.7 1227.0,731.8 1227.5,734.3 1228.0,737.1 1228.5,740.0 1229.0,742.9 1229.5,745.7 1230.0,748.2 1230.5,750.1 1231.0,751.8 1231.5,753.6 1232.0,755.3 1232.5,756.9 1233.0,758.4 1233.5,759.6 1234.0,760.6 1234.5,761.3 1235.0,761.5 1235.5,761.3 1236.0,760.8 1236.5,760.0 1237.0,759.0 1237.5,757.8 1238.0,756.6 1238.5,755.1 1239.0,753.0 1239.5,750.5 1240.0,747.7 1240.5,745.0 1241.0,742.4 1241.5,740.1 1242.0,738.3 1242.5,736.5 1243.0,734.7 1243.5,733.3 1244.0,732.4 1244.5,732.4 1245.0,734.3 1245.5,737.4 1246.0,740.9 1246.5,744.0 1247.0,745.8 1247.5,747.4 1248.0,748.8 1248.5,749.9 1249.0,750.6 1249.5,750.6 1250.0,749.4 1250.5,747.0 1251.0,743.8 1251.5,740.2 1252.0,736.6 1252.5,733.2 1253.0,730.5 1253.5,728.4 1254.0,726.2 1254.5,724.2 1255.0,722.6 1255.5,721.5 1256.0,720.9 1256.5,720.3 1257.0,719.9 1257.5,719.6 1258.0,719.4 1258.5,719.5 1259.0,719.9 1259.5,720.4 1260.0,721.2 1260.5,722.1 1261.0,723.2 1261.5,724.4 1262.0,725.8 1262.5,728.5 1263.0,732.2 1263.5,736.3 1264.0,739.8 1264.5,742.1 1265.0,744.1 1265.5,745.9 1266.0,747.6 1266.5,748.8 1267.0,749.6 1267.5,749.7 1268.0,749.0 1268.5,747.7 1269.0,745.8 1269.5,743.7 1270.0,741.4 1270.5,739.2 1271.0,737.2 1271.5,735.6 1272.0,734.7 1272.5,734.5 1273.0,734.8 1273.5,735.4 1274.0,736.3 1274.5,737.5 1275.0,738.7 1275.5,740.0 1276.0,741.3 1276.5,742.5 1277.0,743.6 1277.5,744.5 1278.0,745.1 1278.5,745.5 1279.0,745.8 1279.5,746.1 1280.0,746.3 1280.5,746.5 1281.0,746.7 1281.5,746.9 1282.0,747.1 1282.5,747.3 1283.0,747.7 1283.5,748.1 1284.0,748.7 1284.5,749.4 1285.0,750.3 1285.5,751.2 1286.0,752.2 1286.5,753.2 1287.0,754.1 1287.5,754.9 1288.0,755.6 1288.5,756.1 1289.0,756.4 1289.5,756.5 1290.0,756.4 1290.5,756.3 1291.0,756.1 1291.5,755.9 1292.0,755.6 1292.5,755.4 1293.0,755.1 1293.5,754.9 1294.0,754.7 1294.5,754.6 1295.0,754.5 1295.5,754.6 1296.0,755.2 1296.5,756.1 1297.0,757.4 1297.5,758.7 1298.0,760.2 1298.5,761.6 1299.0,762.9 1299.5,764.1 1300.0,764.9 1300.5,765.2 1301.0,764.9 1301.5,763.5 1302.0,761.2 1302.5,758.4 1303.0,755.3 1303.5,752.2 1304.0,749.5 1304.5,747.4 1305.0,745.4 1305.5,743.4 1306.0,741.4 1306.5,739.6 1307.0,738.1 1307.5,737.0 1308.0,736.5 1308.5,736.5 1309.0,736.5 1309.5,736.5 1310.0,736.5 1310.5,736.5 1311.0,736.5 1311.5,736.5 1312.0,736.5 1312.5,736.9 1313.0,737.8 1313.5,739.1 1314.0,740.4 1314.5,741.7 1315.0,742.7 1315.5,743.2 1316.0,743.1 1316.5,742.5 1317.0,741.6 1317.5,740.3 1318.0,739.0 1318.5,737.7 1319.0,736.6 1319.5,735.7 1320.0,735.3 1320.5,735.3 1321.0,735.9 1321.5,737.0 1322.0,738.3 1322.5,740.0 1323.0,741.8 1323.5,743.6 1324.0,745.4 1324.5,747.2 1325.0,748.7 1325.5,749.9 1326.0,750.8 1326.5,751.7 1327.0,752.6 1327.5,753.5 1328.0,754.2 1328.5,754.8 1329.0,755.1 1329.5,755.2 1330.0,755.1 1330.5,754.9 1331.0,754.5 1331.5,753.9 1332.0,753.3 1332.5,752.6 1333.0,751.8 1333.5,750.9 1334.0,749.3 1334.5,747.1 1335.0,744.6 1335.5,741.7 1336.0,738.7 1336.5,735.8 1337.0,733.0 1337.5,730.5 1338.0,728.4 1338.5,726.8 1339.0,725.2 1339.5,723.7 1340.0,722.3 1340.5,721.3 1341.0,720.8 1341.5,720.8 1342.0,721.2 1342.5,722.0 1343.0,723.1 1343.5,724.5 1344.0,726.1 1344.5,727.8 1345.0,731.1 1345.5,736.1 1346.0,741.7 1346.5,746.9 1347.0,750.4 1347.5,752.5 1348.0,754.2 1348.5,755.4 1349.0,756.5 1349.5,757.3 1350.0,757.8 1350.5,758.0 1351.0,758.2 1351.5,758.3 1352.0,758.1 1352.5,757.8 1353.0,757.4 1353.5,756.8 1354.0,756.2 1354.5,755.5 1355.0,754.8 1355.5,754.3 1356.0,753.7 1356.5,753.3 1357.0,752.8 1357.5,752.4 1358.0,752.0 1358.5,751.5 1359.0,751.1 1359.5,750.5 1360.0,750.0 1360.5,749.3 1361.0,748.6 1361.5,747.8 1362.0,746.9 1362.5,745.9 1363.0,744.6 1363.5,743.2 1364.0,741.5 1364.5,738.8 1365.0,734.7 1365.5,730.1 1366.0,725.9 1366.5,722.7 1367.0,720.5 1367.5,718.4 1368.0,716.5 1368.5,714.9 1369.0,713.8 1369.5,713.4 1370.0,713.6 1370.5,714.0 1371.0,714.6 1371.5,715.5 1372.0,716.5 1372.5,717.6 1373.0,719.9 1373.5,723.8 1374.0,728.3 1374.5,732.4 1375.0,735.1 1375.5,736.6 1376.0,738.0 1376.5,739.3 1377.0,740.3 1377.5,741.0 1378.0,741.4 1378.5,741.4 1379.0,740.8 1379.5,739.8 1380.0,738.4 1380.5,736.9 1381.0,735.4 1381.5,734.1 1382.0,732.7 1382.5,731.1 1383.0,729.4 1383.5,728.0 1384.0,726.9 1384.5,726.5 1385.0,726.6 1385.5,727.1 1386.0,727.9 1386.5,728.8 1387.0,729.7 1387.5,730.6 1388.0,731.4 1388.5,732.0 1389.0,732.2 1389.5,732.1 1390.0,731.6 1390.5,730.9 1391.0,730.1 1391.5,729.1 1392.0,727.3 1392.5,724.4 1393.0,720.9 1393.5,717.6 1394.0,715.4 1394.5,714.0 1395.0,712.8 1395.5,711.7 1396.0,711.0 1396.5,710.7 1397.0,710.9 1397.5,711.8 1398.0,713.0 1398.5,714.6 1399.0,716.2 1399.5,718.3 1400.0,721.4 1400.5,725.1 1401.0,728.7 1401.5,731.8 1402.0,733.8 1402.5,734.8 1403.0,735.7 1403.5,736.4 1404.0,737.0 1404.5,737.6 1405.0,738.1 1405.5,738.6 1406.0,739.2 1406.5,739.8 1407.0,740.4 1407.5,741.0 1408.0,741.5 1408.5,742.0 1409.0,742.4 1409.5,742.7 1410.0,742.9 1410.5,743.0 1411.0,743.1 1411.5,743.2 1412.0,743.3 1412.5,743.4 1413.0,743.8 1413.5,744.6 1414.0,745.6 1414.5,746.8 1415.0,748.0 1415.5,749.1 1416.0,749.9 1416.5,750.2 1417.0,749.9 1417.5,748.8 1418.0,747.2 1418.5,745.5 1419.0,744.2 1419.5,743.5 1420.0,743.5 1420.5,743.5 1421.0,743.5 1421.5,743.5 1422.0,743.5 1422.5,743.5 1423.0,743.5 1423.5,744.2 1424.0,745.6 1424.5,747.5 1425.0,749.4 1425.5,751.2 1426.0,752.6 1426.5,753.2 1427.0,753.0 1427.5,752.0 1428.0,750.6 1428.5,748.8 1429.0,747.1 1429.5,745.5 1430.0,744.2 1430.5,742.7 1431.0,741.2 1431.5,739.7 1432.0,738.3 1432.5,737.3 1433.0,736.6 1433.5,736.5 1434.0,736.8 1434.5,737.3 1435.0,738.1 1435.5,739.0 1436.0,739.8 1436.5,740.6 1437.0,741.2 1437.5,741.5 1438.0,741.3 1438.5,740.5 1439.0,739.3 1439.5,737.8 1440.0,736.1 1440.5,734.5 1441.0,733.2 1441.5,731.6 1442.0,729.9 1442.5,728.3 1443.0,727.2 1443.5,727.0 1444.0,727.0 1444.5,727.2 1445.0,727.4 1445.5,727.7 1446.0,728.1 1446.5,728.4 1447.0,728.8 1447.5,729.3 1448.0,729.8 1448.5,730.3 1449.0,731.0 1449.5,731.8 1450.0,732.6 1450.5,733.5 1451.0,734.5 1451.5,735.6 1452.0,736.7 1452.5,737.9 1453.0,739.2 1453.5,740.5 1454.0,742.5 1454.5,745.1 1455.0,748.1 1455.5,751.1 1456.0,753.8 1456.5,755.9 1457.0,756.9 1457.5,756.7 1458.0,755.5 1458.5,753.6 1459.0,751.2 1459.5,748.6 1460.0,746.1 1460.5,744.0 1461.0,742.5 1461.5,741.4 1462.0,740.3 1462.5,739.3 1463.0,738.4 1463.5,737.7 1464.0,737.0 1464.5,736.6 1465.0,736.3 1465.5,736.0 1466.0,735.8 1466.5,735.6 1467.0,735.4 1467.5,735.3 1468.0,735.2 1468.5,735.2 1469.0,735.2 1469.5,735.2 1470.0,735.3 1470.5,735.3 1471.0,735.4 1471.5,735.5 1472.0,735.6 1472.5,735.7 1473.0,735.8 1473.5,736.0 1474.0,736.9 1474.5,738.7 1475.0,741.0 1475.5,743.3 1476.0,745.5 1476.5,747.8 1477.0,750.4 1477.5,752.9 1478.0,754.7 1478.5,755.2 1479.0,755.2 1479.5,754.9 1480.0,754.6 1480.5,754.1 1481.0,753.6 1481.5,753.0 1482.0,752.1 1482.5,750.2 1483.0,747.5 1483.5,744.4 1484.0,741.2 1484.5,738.2 1485.0,735.9 1485.5,734.4 1486.0,732.9 1486.5,731.5 1487.0,730.3 1487.5,729.3 1488.0,728.7 1488.5,728.5 1489.0,728.8 1489.5,729.6 1490.0,730.7 1490.5,731.8 1491.0,732.8 1491.5,733.7 1492.0,734.8 1492.5,735.9 1493.0,736.9 1493.5,737.9 1494.0,738.5 1494.5,738.9 1495.0,738.9 1495.5,738.4 1496.0,737.6 1496.5,736.6 1497.0,735.5 1497.5,734.4 1498.0,733.4 1498.5,732.0 1499.0,730.5 1499.5,729.0 1500.0,727.7 1500.5,726.8 1501.0,726.5 1501.5,727.0 1502.0,728.5 1502.5,730.5 1503.0,732.8 1503.5,735.1 1504.0,737.0 1504.5,738.4 1505.0,739.7 1505.5,740.9 1506.0,742.0 1506.5,742.9 1507.0,743.7 1507.5,744.2 1508.0,744.7 1508.5,745.2 1509.0,745.6 1509.5,746.0 1510.0,746.2 1510.5,746.4 1511.0,746.5 1511.5,746.4 1512.0,746.1 1512.5,745.6 1513.0,745.0 1513.5,744.3 1514.0,743.6 1514.5,742.8 1515.0,742.1 1515.5,741.4 1516.0,740.9 1516.5,740.5 1517.0,740.3 1517.5,740.2 1518.0,740.4 1518.5,740.6 1519.0,740.9 1519.5,741.3 1520.0,741.7 1520.5,742.0 1521.0,742.3 1521.5,742.6 1522.0,742.7 1522.5,742.7 1523.0,742.7 1523.5,742.6 1524.0,742.4 1524.5,742.2 1525.0,742.0 1525.5,741.8 1526.0,741.5 1526.5,741.0 1527.0,740.3 1527.5,739.4 1528.0,738.8 1528.5,738.5 1529.0,738.6 1529.5,738.8 1530.0,739.2 1530.5,739.7 1531.0,740.4 1531.5,741.1 1532.0,741.9 1532.5,743.5 1533.0,745.8 1533.5,748.6 1534.0,751.5 1534.5,754.3 1535.0,756.6 1535.5,758.3 1536.0,759.0 1536.5,758.9 1537.0,758.6 1537.5,758.0 1538.0,757.4 1538.5,756.6 1539.0,755.3 1539.5,753.1 1540.0,750.3 1540.5,747.2 1541.0,744.2 1541.5,741.5 1542.0,739.4 1542.5,737.4 1543.0,735.3 1543.5,733.4 1544.0,731.7 1544.5,730.4 1545.0,729.6 1545.5,729.5 1546.0,729.5 1546.5,729.6 1547.0,729.7 1547.5,729.8 1548.0,730.0 1548.5,730.2 1549.0,730.6 1549.5,731.5 1550.0,732.6 1550.5,733.5 1551.0,734.0 1551.5,733.4 1552.0,731.8 1552.5,729.6 1553.0,727.3 1553.5,725.4 1554.0,723.9 1554.5,722.4 1555.0,721.0 1555.5,719.9 1556.0,719.5 1556.5,719.5 1557.0,719.7 1557.5,720.1 1558.0,720.5 1558.5,721.0 1559.0,721.6 1559.5,722.3 1560.0,722.9 1560.5,723.8 1561.0,724.8 1561.5,726.1 1562.0,727.5 1562.5,729.0 1563.0,730.7 1563.5,732.4 1564.0,734.3 1564.5,736.6 1565.0,739.2 1565.5,742.0 1566.0,744.7 1566.5,747.7 1567.0,751.3 1567.5,755.1 1568.0,758.7 1568.5,761.7 1569.0,763.6 1569.5,763.9 1570.0,762.5 1570.5,759.7 1571.0,756.3 1571.5,752.6 1572.0,749.4 1572.5,747.2 1573.0,745.2 1573.5,743.2 1574.0,741.5 1574.5,740.5 1575.0,740.2 1575.5,740.6 1576.0,741.4 1576.5,742.4 1577.0,743.5 1577.5,744.6 1578.0,745.5 1578.5,746.5 1579.0,747.7 1579.5,748.8 1580.0,749.9 1580.5,750.6 1581.0,751.0 1581.5,750.9 1582.0,750.6 1582.5,750.1 1583.0,749.4 1583.5,748.7 1584.0,747.9 1584.5,747.1 1585.0,746.3 1585.5,745.4 1586.0,744.4 1586.5,743.3 1587.0,742.2 1587.5,741.1 1588.0,740.1 1588.5,739.2 1589.0,738.4 1589.5,737.7 1590.0,737.1 1590.5,736.5 1591.0,735.9 1591.5,735.3 1592.0,734.6 1592.5,733.8 1593.0,732.6 1593.5,731.2 1594.0,729.6 1594.5,728.1 1595.0,726.7 1595.5,725.7 1596.0,725.2 1596.5,725.3 1597.0,725.6 1597.5,726.0 1598.0,726.6 1598.5,727.3 1599.0,727.9 1599.5,728.5 1600.0,729.0 1600.5,729.5 1601.0,729.8 1601.5,730.2 1602.0,730.5 1602.5,730.8 1603.0,731.2 1603.5,731.6 1604.0,732.1 1604.5,732.7 1605.0,733.4 1605.5,734.6 1606.0,736.4 1606.5,738.5 1607.0,740.8 1607.5,743.0 1608.0,744.8 1608.5,746.2 1609.0,747.0 1609.5,747.6 1610.0,748.1 1610.5,748.2 1611.0,747.5 1611.5,745.8 1612.0,743.7 1612.5,741.4 1613.0,739.4 1613.5,738.0 1614.0,737.3 1614.5,736.7 1615.0,736.2 1615.5,735.8 1616.0,735.5 1616.5,735.3 1617.0,735.2 1617.5,735.9 1618.0,737.4 1618.5,739.4 1619.0,741.6 1619.5,743.7 1620.0,745.5 1620.5,747.2 1621.0,749.0 1621.5,750.7 1622.0,751.9 1622.5,752.2 1623.0,751.9 1623.5,751.0 1624.0,749.7 1624.5,748.2 1625.0,746.6 1625.5,745.0 1626.0,743.1 1626.5,740.8 1627.0,738.2 1627.5,735.7 1628.0,733.5 1628.5,731.9 1629.0,730.9 1629.5,730.1 1630.0,729.3 1630.5,728.6 1631.0,728.0 1631.5,727.6 1632.0,727.3 1632.5,727.2 1633.0,727.5 1633.5,728.3 1634.0,729.4 1634.5,730.6 1635.0,731.8 1635.5,732.8 1636.0,733.7 1636.5,734.8 1637.0,735.9 1637.5,737.0 1638.0,738.0 1638.5,738.9 1639.0,739.6 1639.5,740.1 1640.0,740.2 1640.5,740.1 1641.0,739.9 1641.5,739.6 1642.0,739.2 1642.5,738.7 1643.0,738.4 1643.5,738.0 1644.0,737.8 1644.5,737.7 1645.0,737.9 1645.5,738.2 1646.0,738.7 1646.5,739.4 1647.0,740.2 1647.5,740.9 1648.0,741.7 1648.5,742.4 1649.0,743.1 1649.5,743.9 1650.0,744.7 1650.5,745.6 1651.0,746.5 1651.5,747.3 1652.0,748.1 1652.5,748.7 1653.0,749.2 1653.5,749.5 1654.0,749.3 1654.5,748.3 1655.0,746.5 1655.5,744.3 1656.0,741.7 1656.5,739.2 1657.0,737.0 1657.5,735.2 1658.0,733.7 1658.5,732.2 1659.0,730.8 1659.5,729.8 1660.0,729.5 1660.5,729.7 1661.0,730.3 1661.5,731.1 1662.0,732.1 1662.5,733.1 1663.0,733.9 1663.5,734.9 1664.0,735.9 1664.5,737.1 1665.0,738.1 1665.5,738.9 1666.0,739.4 1666.5,739.5 1667.0,739.4 1667.5,739.2 1668.0,738.9 1668.5,738.6 1669.0,738.2 1669.5,737.7 1670.0,736.6 1670.5,734.2 1671.0,731.2 1671.5,728.0 1672.0,725.0 1672.5,722.8 1673.0,721.1 1673.5,719.3 1674.0,717.8 1674.5,716.4 1675.0,715.5 1675.5,715.2 1676.0,716.0 1676.5,718.1 1677.0,721.2 1677.5,724.5 1678.0,727.5 1678.5,730.5 1679.0,733.9 1679.5,737.5 1680.0,740.9 1680.5,743.8 1681.0,745.8 1681.5,746.8 1682.0,747.4 1682.5,747.8 1683.0,748.2 1683.5,748.5 1684.0,748.8 1684.5,749.2 1685.0,749.7 1685.5,750.4 1686.0,751.4 1686.5,752.5 1687.0,753.7 1687.5,755.0 1688.0,756.3 1688.5,757.5 1689.0,758.6 1689.5,759.4 1690.0,760.0 1690.5,760.3 1691.0,759.8 1691.5,758.2 1692.0,755.9 1692.5,753.0 1693.0,750.0 1693.5,746.9 1694.0,744.2 1694.5,740.8 1695.0,737.1 1695.5,733.7 1696.0,731.1 1696.5,729.8 1697.0,728.9 1697.5,728.2 1698.0,727.6 1698.5,727.3 1699.0,727.2 1699.5,727.4 1700.0,727.7 1700.5,728.2 1701.0,728.8 1701.5,729.4 1702.0,730.1 1702.5,731.0 1703.0,732.3 1703.5,733.8 1704.0,735.5 1704.5,737.2 1705.0,738.8 1705.5,740.1 1706.0,741.1 1706.5,742.2 1707.0,743.3 1707.5,744.4 1708.0,745.5 1708.5,746.4 1709.0,747.3 1709.5,748.1 1710.0,748.7 1710.5,749.2 1711.0,749.4 1711.5,749.5 1712.0,748.9 1712.5,748.0 1713.0,746.6 1713.5,745.2 1714.0,743.8 1714.5,742.5 1715.0,741.6 1715.5,741.0 1716.0,740.4 1716.5,739.9 1717.0,739.4 1717.5,739.0 1718.0,738.7 1718.5,738.5 1719.0,738.5 1719.5,738.6 1720.0,738.9 1720.5,739.3 1721.0,739.8 1721.5,740.4 1722.0,740.9 1722.5,741.4 1723.0,741.8 1723.5,742.4 1724.0,743.0 1724.5,743.6 1725.0,744.3 1725.5,744.8 1726.0,745.3 1726.5,745.6 1727.0,745.7 1727.5,745.6 1728.0,745.3 1728.5,744.8 1729.0,744.2 1729.5,743.5 1730.0,742.9 1730.5,742.4 1731.0,742.1 1731.5,742.0 1732.0,742.4 1732.5,743.2 1733.0,744.4 1733.5,745.8 1734.0,747.3 1734.5,748.9 1735.0,750.4 1735.5,751.7 1736.0,752.7 1736.5,753.3 1737.0,753.5 1737.5,752.5 1738.0,750.5 1738.5,748.0 1739.0,745.2 1739.5,742.7 1740.0,740.6 1740.5,739.2 1741.0,737.9 1741.5,736.6 1742.0,735.7 1742.5,735.2 1743.0,735.4 1743.5,735.9 1744.0,736.9 1744.5,738.1 1745.0,739.4 1745.5,740.7 1746.0,741.9 1746.5,742.9 1747.0,743.9 1747.5,744.9 1748.0,746.0 1748.5,747.0 1749.0,747.9 1749.5,748.7 1750.0,749.2 1750.5,749.5 1751.0,749.5 1751.5,749.4 1752.0,749.3 1752.5,749.2 1753.0,749.0 1753.5,748.7 1754.0,748.5 1754.5,748.2 1755.0,747.8 1755.5,747.4 1756.0,746.4 1756.5,745.0 1757.0,743.4 1757.5,741.7 1758.0,740.0 1758.5,738.6 1759.0,737.6 1759.5,736.7 1760.0,735.9 1760.5,735.1 1761.0,734.4 1761.5,733.9 1762.0,733.5 1762.5,733.3 1763.0,733.2 1763.5,733.0 1764.0,732.9 1764.5,732.8 1765.0,732.7 1765.5,732.7 1766.0,732.9 1766.5,733.5 1767.0,734.7 1767.5,736.1 1768.0,737.6 1768.5,739.1 1769.0,740.4 1769.5,741.7 1770.0,743.2 1770.5,744.8 1771.0,746.2 1771.5,747.5 1772.0,748.5 1772.5,748.9 1773.0,748.9 1773.5,748.7 1774.0,748.1 1774.5,747.3 1775.0,746.2 1775.5,744.9 1776.0,743.2" fill="none" stroke="#8080ff" stroke-width="1" stroke-linejoin="round" shape-rendering="crispEdges" clip-path="url(#cp2)"/>
<path d="M68 868h1v5h-1zM142 868h1v5h-1zM216 865h1v8h-1zM290 868h1v5h-1zM364 868h1v5h-1zM438 868h1v5h-1zM512 868h1v5h-1zM586 865h1v8h-1zM660 868h1v5h-1zM734 868h1v5h-1zM808 868h1v5h-1zM882 868h1v5h-1zM956 865h1v8h-1zM1030 868h1v5h-1zM1104 868h1v5h-1zM1178 868h1v5h-1zM1252 868h1v5h-1zM1326 865h1v8h-1zM1400 868h1v5h-1zM1474 868h1v5h-1zM1548 868h1v5h-1zM1622 868h1v5h-1zM1696 865h1v8h-1zM1770 868h1v5h-1z" fill="#ffffff"/>
<rect x="10" y="873" width="1767" height="1" fill="#ffffff"/>
<path d="M10.0,1011.2 10.5,1013.6 11.0,1015.7 11.5,1017.3 12.0,1018.4 12.5,1018.7 13.0,1018.4 13.5,1017.5 14.0,1016.3 14.5,1014.8 15.0,1013.4 15.5,1012.2 16.0,1011.4 16.5,1011.1 17.0,1011.0 17.5,1010.8 18.0,1010.7 18.5,1010.6 19.0,1010.5 19.5,1010.5 20.0,1011.0 20.5,1012.3 21.0,1013.9 21.5,1015.4 22.0,1016.2 22.5,1016.5 23.0,1016.8 23.5,1017.0 24.0,1017.2 24.5,1017.2 25.0,1016.9 25.5,1016.1 26.0,1014.9 26.5,1013.7 27.0,1012.5 27.5,1011.6 28.0,1011.2 28.5,1011.3 29.0,1011.6 29.5,1012.0 30.0,1012.3 30.5,1012.5 31.0,1012.3 31.5,1011.7 32.0,1010.8 32.5,1009.6 33.0,1008.3 33.5,1006.9 34.0,1005.5 34.5,1004.2 35.0,1003.0 35.5,1001.9 36.0,1000.6 36.5,999.3 37.0,997.9 37.5,996.7 38.0,995.6 38.5,994.8 39.0,994.3 39.5,994.3 40.0,994.8 40.5,995.7 41.0,997.0 41.5,998.4 42.0,999.8 42.5,1001.1 43.0,1002.4 43.5,1003.9 44.0,1005.4 44.5,1006.9 45.0,1008.1 45.5,1009.0 46.0,1009.3 46.5,1009.5 47.0,1009.6 47.5,1009.7 48.0,1009.8 48.5,1009.9 49.0,1010.1 49.5,1010.4 50.0,1010.9 50.5,1011.4 51.0,1011.9 51.5,1012.3 52.0,1012.5 52.5,1012.4 53.0,1012.3 53.5,1012.1 54.0,1011.9 54.5,1011.7 55.0,1011.4 55.5,1011.1 56.0,1010.9 56.5,1010.7 57.0,1010.5 57.5,1010.5 58.0,1010.6 58.5,1010.9 59.0,1011.3 59.5,1011.8 60.0,1012.3 60.5,1012.7 61.0,1012.9 61.5,1012.9 62.0,1012.0 62.5,1010.1 63.0,1007.8 63.5,1005.2 64.0,1002.8 64.5,1000.8 65.0,999.1 65.5,997.3 66.0,995.6 66.5,994.3 67.0,993.7 67.5,993.7 68.0,993.7 68.5,993.8 69.0,993.9 69.5,993.9 70.0,994.0 70.5,994.2 71.0,994.7 71.5,996.4 72.0,998.8 72.5,1001.6 73.0,1004.5 73.5,1007.2 74.0,1009.3 74.5,1010.4 75.0,1010.7 75.5,1010.9 76.0,1011.0 76.5,1011.1 77.0,1011.2 77.5,1011.3 78.0,1011.4 78.5,1011.6 79.0,1011.8 79.5,1012.3 80.0,1013.0 80.5,1014.0 81.0,1015.0 81.5,1016.1 82.0,1017.1 82.5,1018.0 83.0,1018.7 83.5,1019.1 84.0,1019.2 84.5,1018.9 85.0,1018.1 85.5,1017.1 86.0,1015.7 86.5,1014.3 87.0,1012.7 87.5,1011.2 88.0,1009.7 88.5,1008.4 89.0,1007.3 89.5,1006.6 90.0,1006.2 90.5,1006.3 91.0,1006.6 91.5,1007.2 92.0,1007.9 92.5,1008.8 93.0,1009.8 93.5,1010.8 94.0,1011.9 94.5,1012.9 95.0,1013.8 95.5,1014.6 96.0,1015.3 96.5,1015.8 97.0,1016.0 97.5,1015.9 98.0,1015.6 98.5,1015.1 99.0,1014.5 99.5,1013.8 100.0,1013.1 100.5,1012.3 101.0,1011.7 101.5,1011.1 102.0,1010.7 102.5,1010.5 103.0,1010.5 103.5,1010.6 104.0,1010.8 104.5,1011.0 105.0,1011.3 105.5,1011.6 106.0,1012.0 106.5,1012.3 107.0,1012.7 107.5,1013.3 108.0,1014.0 108.5,1014.7 109.0,1015.3 109.5,1015.7 110.0,1016.0 110.5,1015.9 111.0,1015.2 111.5,1014.2 112.0,1012.8 112.5,1011.2 113.0,1009.5 113.5,1007.7 114.0,1005.9 114.5,1004.3 115.0,1003.0 115.5,1002.0 116.0,1001.3 116.5,1000.6 117.0,999.9 117.5,999.4 118.0,998.8 118.5,998.4 119.0,998.1 119.5,998.0 120.0,998.0 120.5,998.2 121.0,998.5 121.5,998.9 122.0,999.5 122.5,1000.0 123.0,1000.6 123.5,1001.2 124.0,1001.8 124.5,1002.5 125.0,1003.4 125.5,1004.3 126.0,1005.2 126.5,1005.8 127.0,1006.2 127.5,1006.1 128.0,1005.6 128.5,1004.8 129.0,1003.8 129.5,1002.6 130.0,1001.3 130.5,1000.2 131.0,999.2 131.5,998.4 132.0,998.0 132.5,998.1 133.0,999.2 133.5,1000.9 134.0,1003.1 134.5,1005.6 135.0,1008.2 135.5,1010.7 136.0,1012.8 136.5,1014.3 137.0,1015.6 137.5,1017.0 138.0,1018.2 138.5,1019.3 139.0,1020.0 139.5,1020.5 140.0,1020.3 140.5,1018.9 141.0,1016.8 141.5,1014.4 142.0,1012.3 142.5,1010.8 143.0,1010.2 143.5,1009.9 144.0,1009.6 144.5,1009.4 145.0,1009.2 145.5,1009.3 146.0,1009.4 146.5,1009.7 147.0,1010.1 147.5,1010.5 148.0,1010.9 148.5,1011.3 149.0,1011.6 149.5,1011.7 150.0,1011.7 150.5,1011.5 151.0,1011.2 151.5,1010.8 152.0,1010.3 152.5,1009.7 153.0,1009.1 153.5,1008.5 154.0,1008.0 154.5,1007.3 155.0,1006.5 155.5,1005.6 156.0,1004.7 156.5,1004.0 157.0,1003.3 157.5,1003.0 158.0,1003.0 158.5,1003.2 159.0,1003.6 159.5,1004.1 160.0,1004.6 160.5,1005.0 161.0,1005.3 161.5,1005.5 162.0,1005.0 162.5,1003.9 163.0,1002.3 163.5,1000.3 164.0,998.4 164.5,996.6 165.0,995.1 165.5,994.3 166.0,994.3 166.5,995.2 167.0,996.7 167.5,998.6 168.0,1000.6 168.5,1002.6 169.0,1004.2 169.5,1005.6 170.0,1007.2 170.5,1008.8 171.0,1010.4 171.5,1011.9 172.0,1013.3 172.5,1014.5 173.0,1015.4 173.5,1016.0 174.0,1016.2 174.5,1015.7 175.0,1014.1 175.5,1011.8 176.0,1009.2 176.5,1006.5 177.0,1004.1 177.5,1002.3 178.0,1001.3 178.5,1000.6 179.0,999.8 179.5,999.2 180.0,998.8 180.5,998.5 181.0,998.5 181.5,998.9 182.0,999.7 182.5,1000.8 183.0,1002.1 183.5,1003.4 184.0,1004.8 184.5,1006.1 185.0,1007.2 185.5,1008.4 186.0,1009.8 186.5,1011.2 187.0,1012.7 187.5,1014.1 188.0,1015.5 188.5,1016.8 189.0,1017.9 189.5,1018.9 190.0,1019.5 190.5,1019.9 191.0,1020.0 191.5,1019.6 192.0,1018.9 192.5,1018.0 193.0,1017.0 193.5,1015.9 194.0,1015.0 194.5,1014.3 195.0,1013.8 195.5,1013.8 196.0,1014.1 196.5,1014.9 197.0,1015.9 197.5,1017.0 198.0,1018.2 198.5,1019.4 199.0,1020.4 199.5,1021.2 200.0,1021.7 200.5,1021.6 201.0,1020.5 201.5,1018.3 202.0,1015.4 202.5,1012.3 203.0,1009.1 203.5,1006.4 204.0,1004.4 204.5,1003.0 205.0,1001.7 205.5,1000.4 206.0,999.4 206.5,998.5 207.0,998.1 207.5,998.0 208.0,998.2 208.5,998.7 209.0,999.4 209.5,1000.0 210.0,1000.5 210.5,1000.9 211.0,1000.9 211.5,1000.8 212.0,1000.4 212.5,999.9 213.0,999.4 213.5,999.0 214.0,998.6 214.5,998.5 215.0,998.7 215.5,999.7 216.0,1001.2 216.5,1003.1 217.0,1005.1 217.5,1007.0 218.0,1008.7 218.5,1009.9 219.0,1010.5 219.5,1010.4 220.0,1010.3 220.5,1010.0 221.0,1009.7 221.5,1009.4 222.0,1009.1 222.5,1008.8 223.0,1008.6 223.5,1008.5 224.0,1008.5 224.5,1008.7 225.0,1008.9 225.5,1009.3 226.0,1009.7 226.5,1010.2 227.0,1010.6 227.5,1011.1 228.0,1011.9 228.5,1012.9 229.0,1014.0 229.5,1015.1 230.0,1016.0 230.5,1016.6 231.0,1016.7 231.5,1015.9 232.0,1014.2 232.5,1012.0 233.0,1009.5 233.5,1007.0 234.0,1004.7 234.5,1002.6 235.0,1000.0 235.5,997.4 236.0,994.9 236.5,992.9 237.0,991.5 237.5,991.2 238.0,991.4 238.5,991.8 239.0,992.4 239.5,993.1 240.0,993.9 240.5,994.8 241.0,995.7 241.5,996.5 242.0,997.4 242.5,998.4 243.0,999.6 243.5,1000.9 244.0,1002.0 244.5,1003.1 245.0,1003.8 245.5,1004.3 246.0,1004.5 246.5,1004.7 247.0,1004.9 247.5,1005.0 248.0,1005.2 248.5,1005.6 249.0,1006.4 249.5,1007.8 250.0,1009.4 250.5,1011.0 251.0,1012.3 251.5,1012.9 252.0,1012.9 252.5,1012.6 253.0,1012.1 253.5,1011.5 254.0,1010.8 254.5,1010.2 255.0,1009.7 255.5,1009.3 256.0,1009.2 256.5,1009.2 257.0,1009.2 257.5,1009.2 258.0,1009.2 258.5,1009.2 259.0,1009.2 259.5,1009.2 260.0,1009.2 260.5,1009.2 261.0,1008.8 261.5,1007.8 262.0,1006.4 262.5,1004.7 263.0,1002.9 263.5,1001.2 264.0,999.7 264.5,998.3 265.0,996.7 265.5,995.1 266.0,993.6 266.5,992.3 267.0,991.5 267.5,991.2 268.0,991.4 268.5,991.8 269.0,992.5 269.5,993.2 270.0,994.1 270.5,994.9 271.0,995.6 271.5,996.2 272.0,996.6 272.5,996.7 273.0,996.6 273.5,996.4 274.0,996.0 274.5,995.6 275.0,995.1 275.5,994.7 276.0,994.3 276.5,994.0 277.0,993.8 277.5,993.7 278.0,994.0 278.5,994.6 279.0,995.5 279.5,996.6 280.0,997.8 280.5,999.0 281.0,1000.2 281.5,1001.3 282.0,1002.3 282.5,1003.2 283.0,1004.1 283.5,1005.0 284.0,1005.9 284.5,1006.8 285.0,1007.6 285.5,1008.5 286.0,1009.3 286.5,1010.1 287.0,1011.0 287.5,1011.9 288.0,1012.9 288.5,1013.8 289.0,1014.7 289.5,1015.6 290.0,1016.2 290.5,1016.6 291.0,1016.7 291.5,1016.5 292.0,1016.1 292.5,1015.3 293.0,1014.4 293.5,1013.4 294.0,1012.2 294.5,1011.1 295.0,1010.0 295.5,1008.9 296.0,1008.0 296.5,1007.3 297.0,1006.9 297.5,1006.7 298.0,1006.9 298.5,1007.4 299.0,1008.0 299.5,1008.9 300.0,1009.8 300.5,1010.8 301.0,1011.8 301.5,1012.6 302.0,1013.4 302.5,1014.3 303.0,1015.3 303.5,1016.2 304.0,1017.1 304.5,1017.8 305.0,1018.3 305.5,1018.5 306.0,1018.1 306.5,1017.1 307.0,1015.5 307.5,1013.8 308.0,1011.9 308.5,1010.1 309.0,1008.6 309.5,1007.4 310.0,1006.2 310.5,1005.1 311.0,1004.0 311.5,1003.1 312.0,1002.4 312.5,1002.2 313.0,1002.6 313.5,1003.5 314.0,1004.8 314.5,1006.3 315.0,1007.9 315.5,1009.3 316.0,1010.5 316.5,1011.1 317.0,1011.2 317.5,1010.6 318.0,1009.6 318.5,1008.4 319.0,1007.2 319.5,1006.1 320.0,1005.5 320.5,1005.1 321.0,1004.7 321.5,1004.4 322.0,1004.1 322.5,1003.9 323.0,1003.7 323.5,1003.6 324.0,1003.5 324.5,1003.5 325.0,1003.5 325.5,1003.6 326.0,1003.6 326.5,1003.8 327.0,1003.9 327.5,1004.0 328.0,1004.2 328.5,1004.6 329.0,1005.4 329.5,1006.5 330.0,1007.9 330.5,1009.4 331.0,1011.0 331.5,1012.6 332.0,1014.0 332.5,1015.2 333.0,1016.1 333.5,1016.7 334.0,1016.7 334.5,1016.3 335.0,1015.6 335.5,1014.6 336.0,1013.5 336.5,1012.2 337.0,1011.0 337.5,1009.8 338.0,1008.8 338.5,1008.0 339.0,1007.6 339.5,1007.5 340.0,1007.9 340.5,1008.7 341.0,1009.8 341.5,1011.1 342.0,1012.6 342.5,1014.1 343.0,1016.1 343.5,1019.0 344.0,1022.3 344.5,1025.6 345.0,1028.5 345.5,1030.4 346.0,1031.5 346.5,1032.5 347.0,1033.4 347.5,1034.1 348.0,1034.8 348.5,1035.2 349.0,1035.5 349.5,1035.5 350.0,1035.1 350.5,1034.4 351.0,1033.3 351.5,1032.1 352.0,1030.8 352.5,1029.4 353.0,1027.9 353.5,1025.8 354.0,1023.4 354.5,1020.8 355.0,1018.1 355.5,1015.5 356.0,1013.3 356.5,1011.4 357.0,1010.0 357.5,1008.8 358.0,1007.7 358.5,1006.6 359.0,1005.6 359.5,1004.8 360.0,1004.1 360.5,1003.7 361.0,1003.5 361.5,1003.6 362.0,1004.2 362.5,1005.1 363.0,1006.3 363.5,1007.6 364.0,1009.0 364.5,1010.3 365.0,1011.6 365.5,1012.8 366.0,1013.6 366.5,1014.1 367.0,1014.2 367.5,1014.1 368.0,1013.9 368.5,1013.6 369.0,1013.3 369.5,1012.8 370.0,1012.4 370.5,1011.8 371.0,1011.1 371.5,1009.9 372.0,1008.3 372.5,1006.6 373.0,1004.7 373.5,1002.9 374.0,1001.4 374.5,1000.1 375.0,998.9 375.5,997.6 376.0,996.4 376.5,995.3 377.0,994.4 377.5,993.8 378.0,993.5 378.5,993.7 379.0,994.9 379.5,996.6 380.0,998.8 380.5,1001.2 381.0,1003.5 381.5,1005.5 382.0,1007.1 382.5,1008.6 383.0,1010.2 383.5,1011.7 384.0,1013.1 384.5,1014.3 385.0,1015.1 385.5,1015.5 386.0,1015.5 386.5,1015.5 387.0,1015.4 387.5,1015.4 388.0,1015.3 388.5,1015.2 389.0,1015.1 389.5,1015.0 390.0,1014.9 390.5,1014.7 391.0,1014.6 391.5,1014.4 392.0,1014.2 392.5,1013.5 393.0,1012.4 393.5,1010.9 394.0,1009.2 394.5,1007.5 395.0,1005.8 395.5,1004.5 396.0,1003.5 396.5,1002.3 397.0,1001.2 397.5,1000.3 398.0,999.6 398.5,999.2 399.0,999.3 399.5,999.7 400.0,1000.3 400.5,1001.1 401.0,1002.1 401.5,1003.0 402.0,1003.9 402.5,1004.7 403.0,1005.3 403.5,1005.8 404.0,1006.1 404.5,1006.4 405.0,1006.7 405.5,1006.9 406.0,1007.2 406.5,1007.4 407.0,1007.6 407.5,1007.9 408.0,1008.2 408.5,1008.5 409.0,1008.9 409.5,1009.3 410.0,1010.0 410.5,1010.8 411.0,1011.9 411.5,1013.1 412.0,1014.4 412.5,1015.7 413.0,1017.0 413.5,1018.2 414.0,1019.2 414.5,1020.1 415.0,1020.7 415.5,1021.0 416.0,1020.9 416.5,1020.2 417.0,1019.1 417.5,1017.7 418.0,1016.1 418.5,1014.3 419.0,1012.6 419.5,1011.0 420.0,1009.6 420.5,1008.5 421.0,1007.3 421.5,1006.0 422.0,1004.8 422.5,1003.8 423.0,1002.9 423.5,1002.4 424.0,1002.2 424.5,1002.6 425.0,1003.6 425.5,1005.0 426.0,1006.7 426.5,1008.4 427.0,1010.1 427.5,1011.6 428.0,1012.7 428.5,1013.4 429.0,1013.9 429.5,1014.4 430.0,1014.9 430.5,1015.3 431.0,1015.7 431.5,1016.0 432.0,1016.4 432.5,1016.7 433.0,1017.1 433.5,1017.5 434.0,1017.9 434.5,1018.4 435.0,1018.9 435.5,1019.3 436.0,1019.7 436.5,1019.9 437.0,1020.0 437.5,1019.6 438.0,1018.6 438.5,1017.1 439.0,1015.3 439.5,1013.4 440.0,1011.5 440.5,1009.8 441.0,1008.4 441.5,1007.4 442.0,1006.5 442.5,1005.5 443.0,1004.6 443.5,1003.7 444.0,1003.0 444.5,1002.4 445.0,1002.0 445.5,1001.7 446.0,1001.7 446.5,1001.9 447.0,1002.1 447.5,1002.4 448.0,1002.7 448.5,1003.0 449.0,1003.2 449.5,1003.4 450.0,1003.5 450.5,1003.3 451.0,1002.9 451.5,1002.3 452.0,1001.5 452.5,1000.7 453.0,999.9 453.5,999.1 454.0,998.5 454.5,998.1 455.0,998.0 455.5,998.2 456.0,998.9 456.5,999.9 457.0,1001.2 457.5,1002.7 458.0,1004.2 458.5,1005.7 459.0,1007.1 459.5,1008.3 460.0,1009.2 460.5,1009.9 461.0,1010.6 461.5,1011.3 462.0,1011.9 462.5,1012.4 463.0,1013.0 463.5,1013.5 464.0,1013.9 464.5,1014.3 465.0,1014.7 465.5,1015.1 466.0,1015.4 466.5,1015.7 467.0,1016.0 467.5,1016.3 468.0,1016.5 468.5,1016.8 469.0,1017.0 469.5,1017.2 470.0,1017.5 470.5,1017.7 471.0,1018.0 471.5,1018.3 472.0,1018.6 472.5,1018.9 473.0,1019.2 473.5,1019.4 474.0,1019.6 474.5,1019.7 475.0,1019.7 475.5,1019.7 476.0,1019.4 476.5,1019.0 477.0,1018.4 477.5,1017.8 478.0,1017.2 478.5,1016.5 479.0,1015.9 479.5,1015.3 480.0,1014.8 480.5,1014.5 481.0,1014.3 481.5,1014.3 482.0,1014.8 482.5,1015.6 483.0,1016.6 483.5,1017.7 484.0,1018.7 484.5,1019.4 485.0,1019.7 485.5,1019.3 486.0,1018.0 486.5,1016.1 487.0,1013.8 487.5,1011.4 488.0,1009.2 488.5,1007.5 489.0,1006.3 489.5,1005.2 490.0,1004.2 490.5,1003.3 491.0,1002.5 491.5,1001.8 492.0,1001.4 492.5,1001.2 493.0,1001.3 493.5,1001.5 494.0,1001.8 494.5,1002.2 495.0,1002.7 495.5,1003.1 496.0,1003.5 496.5,1003.9 497.0,1004.1 497.5,1004.2 498.0,1004.2 498.5,1004.1 499.0,1004.0 499.5,1003.8 500.0,1003.7 500.5,1003.6 501.0,1003.5 501.5,1003.5 502.0,1003.7 502.5,1004.2 503.0,1004.8 503.5,1005.5 504.0,1006.2 504.5,1006.8 505.0,1007.3 505.5,1007.5 506.0,1007.3 506.5,1006.6 507.0,1005.6 507.5,1004.2 508.0,1002.7 508.5,1001.1 509.0,999.6 509.5,998.1 510.0,996.9 510.5,995.8 511.0,994.6 511.5,993.4 512.0,992.2 512.5,991.0 513.0,990.0 513.5,989.2 514.0,988.7 514.5,988.4 515.0,988.7 515.5,989.5 516.0,990.8 516.5,992.5 517.0,994.4 517.5,996.4 518.0,998.8 518.5,1002.2 519.0,1006.2 519.5,1010.2 520.0,1013.6 520.5,1015.9 521.0,1017.2 521.5,1018.3 522.0,1019.2 522.5,1020.0 523.0,1020.7 523.5,1021.3 524.0,1021.9 524.5,1022.4 525.0,1022.9 525.5,1023.4 526.0,1023.9 526.5,1024.4 527.0,1024.9 527.5,1025.3 528.0,1025.7 528.5,1026.0 529.0,1026.2 529.5,1026.3 530.0,1026.2 530.5,1026.1 531.0,1025.8 531.5,1025.4 532.0,1025.0 532.5,1024.5 533.0,1024.0 533.5,1023.5 534.0,1022.9 534.5,1022.4 535.0,1021.9 535.5,1021.3 536.0,1020.6 536.5,1019.9 537.0,1019.0 537.5,1018.2 538.0,1017.4 538.5,1016.7 539.0,1016.1 539.5,1015.7 540.0,1015.5 540.5,1015.6 541.0,1016.1 541.5,1016.9 542.0,1017.8 542.5,1018.9 543.0,1019.9 543.5,1020.7 544.0,1021.4 544.5,1021.7 545.0,1021.7 545.5,1021.5 546.0,1021.1 546.5,1020.6 547.0,1020.0 547.5,1019.4 548.0,1018.6 548.5,1017.1 549.0,1015.2 549.5,1013.1 550.0,1011.1 550.5,1009.4 551.0,1008.3 551.5,1008.0 552.0,1008.4 552.5,1009.3 553.0,1010.6 553.5,1012.1 554.0,1013.9 554.5,1015.6 555.0,1017.4 555.5,1019.0 556.0,1020.3 556.5,1021.2 557.0,1021.7 557.5,1021.5 558.0,1020.3 558.5,1018.5 559.0,1016.3 559.5,1013.9 560.0,1011.6 560.5,1009.7 561.0,1008.3 561.5,1006.8 562.0,1005.3 562.5,1003.9 563.0,1002.6 563.5,1001.6 564.0,1000.9 564.5,1000.5 565.0,1000.6 565.5,1001.1 566.0,1001.9 566.5,1002.9 567.0,1004.0 567.5,1005.1 568.0,1006.2 568.5,1007.5 569.0,1009.0 569.5,1010.6 570.0,1012.0 570.5,1013.2 571.0,1014.0 571.5,1014.2 572.0,1014.1 572.5,1013.6 573.0,1013.0 573.5,1012.3 574.0,1011.4 574.5,1010.5 575.0,1009.6 575.5,1008.6 576.0,1007.1 576.5,1005.4 577.0,1003.6 577.5,1001.9 578.0,1000.5 578.5,999.5 579.0,999.2 579.5,999.3 580.0,999.5 580.5,999.9 581.0,1000.4 581.5,1000.9 582.0,1001.5 582.5,1002.3 583.0,1003.9 583.5,1006.0 584.0,1008.4 584.5,1010.6 585.0,1012.4 585.5,1013.4 586.0,1013.4 586.5,1013.0 587.0,1012.4 587.5,1011.7 588.0,1010.9 588.5,1010.2 589.0,1009.6 589.5,1009.3 590.0,1009.3 590.5,1009.7 591.0,1010.3 591.5,1011.2 592.0,1012.2 592.5,1013.4 593.0,1014.6 593.5,1015.9 594.0,1017.1 594.5,1018.2 595.0,1019.1 595.5,1019.9 596.0,1020.3 596.5,1020.5 597.0,1020.2 597.5,1019.5 598.0,1018.4 598.5,1017.2 599.0,1015.9 599.5,1014.7 600.0,1013.7 600.5,1012.5 601.0,1011.3 601.5,1010.0 602.0,1008.8 602.5,1007.7 603.0,1006.7 603.5,1005.9 604.0,1005.5 604.5,1005.2 605.0,1005.0 605.5,1004.9 606.0,1004.7 606.5,1004.6 607.0,1004.4 607.5,1004.0 608.0,1003.2 608.5,1002.1 609.0,1000.8 609.5,999.3 610.0,997.8 610.5,996.4 611.0,995.1 611.5,994.2 612.0,993.4 612.5,992.6 613.0,991.9 613.5,991.2 614.0,990.7 614.5,990.5 615.0,990.5 615.5,991.0 616.0,991.9 616.5,993.2 617.0,994.5 617.5,996.0 618.0,997.4 618.5,999.4 619.0,1001.6 619.5,1004.1 620.0,1006.7 620.5,1009.1 621.0,1011.2 621.5,1012.9 622.0,1014.3 622.5,1015.7 623.0,1017.1 623.5,1018.3 624.0,1019.3 624.5,1020.0 625.0,1020.4 625.5,1020.4 626.0,1019.7 626.5,1018.5 627.0,1016.8 627.5,1014.9 628.0,1013.0 628.5,1011.0 629.0,1009.3 629.5,1007.7 630.0,1005.8 630.5,1003.8 631.0,1001.7 631.5,999.7 632.0,997.8 632.5,996.2 633.0,994.9 633.5,994.0 634.0,993.7 634.5,993.8 635.0,994.1 635.5,994.5 636.0,995.0 636.5,995.6 637.0,996.3 637.5,997.0 638.0,998.2 638.5,999.7 639.0,1001.4 639.5,1003.1 640.0,1004.8 640.5,1006.1 641.0,1007.1 641.5,1008.0 642.0,1008.8 642.5,1009.7 643.0,1010.4 643.5,1011.0 644.0,1011.4 644.5,1011.7 645.0,1011.7 645.5,1011.3 646.0,1010.5 646.5,1009.5 647.0,1008.2 647.5,1006.9 648.0,1005.5 648.5,1004.2 649.0,1003.1 649.5,1002.3 650.0,1001.8 650.5,1001.7 651.0,1002.1 651.5,1002.9 652.0,1003.9 652.5,1004.9 653.0,1006.1 653.5,1007.1 654.0,1008.4 654.5,1010.0 655.0,1011.6 655.5,1013.3 656.0,1014.7 656.5,1015.9 657.0,1016.6 657.5,1016.7 658.0,1016.6 658.5,1016.3 659.0,1015.9 659.5,1015.3 660.0,1014.8 660.5,1014.2 661.0,1013.5 661.5,1012.9 662.0,1012.4 662.5,1012.0 663.0,1011.6 663.5,1011.3 664.0,1011.0 664.5,1010.6 665.0,1010.3 665.5,1010.0 666.0,1009.7 666.5,1009.4 667.0,1009.2 667.5,1009.0 668.0,1008.9 668.5,1008.8 669.0,1008.7 669.5,1008.7 670.0,1008.8 670.5,1009.0 671.0,1009.2 671.5,1009.5 672.0,1009.8 672.5,1010.1 673.0,1010.5 673.5,1010.8 674.0,1011.2 674.5,1011.6 675.0,1012.2 675.5,1012.9 676.0,1013.6 676.5,1014.4 677.0,1015.0 677.5,1015.6 678.0,1015.9 678.5,1016.0 679.0,1015.9 679.5,1015.6 680.0,1015.3 680.5,1014.8 681.0,1014.3 681.5,1013.8 682.0,1013.2 682.5,1012.7 683.0,1012.1 683.5,1011.6 684.0,1011.2 684.5,1010.8 685.0,1010.6 685.5,1010.5 686.0,1010.4 686.5,1010.3 687.0,1010.3 687.5,1010.3 688.0,1010.2 688.5,1010.2 689.0,1010.2 689.5,1010.1 690.0,1010.0 690.5,1009.9 691.0,1009.6 691.5,1009.0 692.0,1008.2 692.5,1007.2 693.0,1006.3 693.5,1005.5 694.0,1004.8 694.5,1004.3 695.0,1004.2 695.5,1004.5 696.0,1005.0 696.5,1005.8 697.0,1006.7 697.5,1007.8 698.0,1009.0 698.5,1010.2 699.0,1011.4 699.5,1012.6 700.0,1014.2 700.5,1016.1 701.0,1018.0 701.5,1019.8 702.0,1021.4 702.5,1022.5 703.0,1023.1 703.5,1023.4 704.0,1023.7 704.5,1023.9 705.0,1024.1 705.5,1024.2 706.0,1024.2 706.5,1024.0 707.0,1023.4 707.5,1022.5 708.0,1021.4 708.5,1020.2 709.0,1018.9 709.5,1017.6 710.0,1016.4 710.5,1015.3 711.0,1014.1 711.5,1012.8 712.0,1011.4 712.5,1010.0 713.0,1008.5 713.5,1007.1 714.0,1005.7 714.5,1004.5 715.0,1003.5 715.5,1002.6 716.0,1002.0 716.5,1001.7 717.0,1001.8 717.5,1002.1 718.0,1002.6 718.5,1003.2 719.0,1004.0 719.5,1004.7 720.0,1005.4 720.5,1006.0 721.0,1006.5 721.5,1006.7 722.0,1006.6 722.5,1006.0 723.0,1004.9 723.5,1003.6 724.0,1002.0 724.5,1000.3 725.0,998.6 725.5,997.0 726.0,995.6 726.5,994.5 727.0,993.8 727.5,993.1 728.0,992.4 728.5,991.7 729.0,991.2 729.5,990.8 730.0,990.5 730.5,990.4 731.0,990.5 731.5,990.7 732.0,991.0 732.5,991.4 733.0,991.9 733.5,992.5 734.0,993.0 734.5,993.6 735.0,994.3 735.5,995.0 736.0,996.0 736.5,997.2 737.0,998.6 737.5,1000.0 738.0,1001.4 738.5,1002.9 739.0,1004.3 739.5,1005.6 740.0,1006.8 740.5,1008.0 741.0,1009.3 741.5,1010.7 742.0,1011.9 742.5,1013.0 743.0,1013.8 743.5,1014.2 744.0,1014.2 744.5,1013.6 745.0,1012.7 745.5,1011.4 746.0,1010.0 746.5,1008.3 747.0,1006.6 747.5,1004.9 748.0,1003.4 748.5,1002.0 749.0,1000.9 749.5,1000.0 750.0,999.2 750.5,998.5 751.0,997.8 751.5,997.2 752.0,996.8 752.5,996.7 753.0,997.3 753.5,998.8 754.0,1001.1 754.5,1003.7 755.0,1006.4 755.5,1009.0 756.0,1011.1 756.5,1012.6 757.0,1013.3 757.5,1013.7 758.0,1014.0 758.5,1014.3 759.0,1014.5 759.5,1014.8 760.0,1015.1 760.5,1015.5 761.0,1016.1 761.5,1016.9 762.0,1018.0 762.5,1019.1 763.0,1020.3 763.5,1021.5 764.0,1022.6 764.5,1023.5 765.0,1024.3 765.5,1024.8 766.0,1025.0 766.5,1024.5 767.0,1023.2 767.5,1021.4 768.0,1019.2 768.5,1017.0 769.0,1015.1 769.5,1013.5 770.0,1011.8 770.5,1010.0 771.0,1008.3 771.5,1006.9 772.0,1005.9 772.5,1005.5 773.0,1006.5 773.5,1009.3 774.0,1013.0 774.5,1016.8 775.0,1020.0 775.5,1021.7 776.0,1022.3 776.5,1022.8 777.0,1023.2 777.5,1023.4 778.0,1023.5 778.5,1023.3 779.0,1022.8 779.5,1022.0 780.0,1020.9 780.5,1019.7 781.0,1018.4 781.5,1017.0 782.0,1015.6 782.5,1014.3 783.0,1013.1 783.5,1012.0 784.0,1011.0 784.5,1010.0 785.0,1009.0 785.5,1007.8 786.0,1006.6 786.5,1005.1 787.0,1003.4 787.5,1000.7 788.0,997.3 788.5,993.7 789.0,990.2 789.5,987.3 790.0,985.5 790.5,984.6 791.0,983.8 791.5,983.1 792.0,982.6 792.5,982.4 793.0,982.7 793.5,983.5 794.0,984.7 794.5,986.2 795.0,987.7 795.5,989.9 796.0,993.0 796.5,996.7 797.0,1000.6 797.5,1004.0 798.0,1006.5 798.5,1008.3 799.0,1010.0 799.5,1011.5 800.0,1012.5 800.5,1013.0 801.0,1012.6 801.5,1011.5 802.0,1009.9 802.5,1007.9 803.0,1005.9 803.5,1004.0 804.0,1002.4 804.5,1001.4 805.0,1000.5 805.5,999.6 806.0,999.0 806.5,998.5 807.0,998.5 807.5,999.1 808.0,1000.1 808.5,1001.6 809.0,1003.3 809.5,1005.1 810.0,1006.8 810.5,1008.4 811.0,1009.6 811.5,1010.3 812.0,1010.4 812.5,1009.9 813.0,1008.8 813.5,1007.4 814.0,1005.8 814.5,1004.3 815.0,1002.9 815.5,1001.8 816.0,1001.1 816.5,1000.5 817.0,999.8 817.5,999.3 818.0,998.7 818.5,998.2 819.0,997.8 819.5,997.4 820.0,997.0 820.5,996.8 821.0,996.5 821.5,996.3 822.0,996.0 822.5,995.8 823.0,995.7 823.5,995.5 824.0,995.5 824.5,995.5 825.0,995.8 825.5,996.3 826.0,997.2 826.5,998.2 827.0,999.3 827.5,1000.5 828.0,1001.7 828.5,1002.8 829.0,1003.8 829.5,1004.6 830.0,1005.2 830.5,1005.5 831.0,1005.4 831.5,1005.3 832.0,1005.1 832.5,1004.8 833.0,1004.5 833.5,1004.2 834.0,1004.0 834.5,1003.7 835.0,1003.6 835.5,1003.5 836.0,1003.5 836.5,1003.9 837.0,1004.4 837.5,1005.1 838.0,1006.0 838.5,1006.9 839.0,1007.8 839.5,1008.7 840.0,1009.5 840.5,1010.3 841.0,1010.8 841.5,1011.1 842.0,1011.2 842.5,1010.6 843.0,1009.4 843.5,1007.7 844.0,1006.0 844.5,1004.4 845.0,1003.1 845.5,1002.5 846.0,1002.6 846.5,1003.2 847.0,1004.3 847.5,1005.6 848.0,1007.0 848.5,1008.5 849.0,1009.9 849.5,1011.1 850.0,1012.0 850.5,1012.5 851.0,1012.5 851.5,1012.4 852.0,1012.2 852.5,1012.0 853.0,1011.8 853.5,1011.4 854.0,1010.7 854.5,1009.6 855.0,1008.3 855.5,1006.9 856.0,1005.4 856.5,1004.1 857.0,1003.0 857.5,1002.2 858.0,1001.7 858.5,1001.8 859.0,1002.2 859.5,1003.0 860.0,1004.0 860.5,1005.1 861.0,1006.4 861.5,1007.6 862.0,1008.9 862.5,1010.1 863.0,1011.1 863.5,1011.9 864.0,1012.3 864.5,1012.5 865.0,1012.4 865.5,1012.2 866.0,1011.9 866.5,1011.5 867.0,1011.1 867.5,1010.6 868.0,1010.2 868.5,1009.7 869.0,1009.2 869.5,1008.7 870.0,1008.3 870.5,1007.9 871.0,1007.7 871.5,1007.5 872.0,1007.5 872.5,1007.7 873.0,1008.4 873.5,1009.3 874.0,1010.5 874.5,1011.8 875.0,1013.2 875.5,1014.6 876.0,1015.9 876.5,1017.1 877.0,1018.1 877.5,1018.8 878.0,1019.2 878.5,1019.1 879.0,1018.4 879.5,1017.1 880.0,1015.4 880.5,1013.5 881.0,1011.4 881.5,1009.3 882.0,1007.4 882.5,1005.8 883.0,1004.6 883.5,1003.8 884.0,1003.0 884.5,1002.3 885.0,1001.6 885.5,1001.0 886.0,1000.5 886.5,1000.0 887.0,999.6 887.5,999.4 888.0,999.2 888.5,999.2 889.0,999.4 889.5,999.8 890.0,1000.2 890.5,1000.8 891.0,1001.5 891.5,1002.2 892.0,1003.0 892.5,1003.8 893.0,1004.8 893.5,1006.3 894.0,1008.3 894.5,1010.5 895.0,1012.9 895.5,1015.3 896.0,1017.6 896.5,1019.5 897.0,1020.9 897.5,1021.7 898.0,1021.7 898.5,1021.3 899.0,1020.8 899.5,1020.0 900.0,1019.2 900.5,1018.1 901.0,1016.7 901.5,1014.9 902.0,1013.0 902.5,1011.0 903.0,1009.1 903.5,1007.4 904.0,1006.0 904.5,1004.5 905.0,1002.9 905.5,1001.4 906.0,1000.0 906.5,998.9 907.0,998.2 907.5,998.0 908.0,998.1 908.5,998.4 909.0,998.8 909.5,999.3 910.0,999.8 910.5,1000.4 911.0,1000.9 911.5,1001.3 912.0,1001.6 912.5,1001.7 913.0,1001.6 913.5,1001.4 914.0,1001.1 914.5,1000.8 915.0,1000.4 915.5,1000.1 916.0,1000.0 916.5,1000.0 917.0,1000.1 917.5,1000.4 918.0,1000.8 918.5,1001.3 919.0,1001.8 919.5,1002.4 920.0,1003.0 920.5,1003.7 921.0,1004.9 921.5,1006.2 922.0,1007.6 922.5,1008.8 923.0,1009.8 923.5,1010.4 924.0,1010.5 924.5,1010.5 925.0,1010.5 925.5,1010.5 926.0,1010.5 926.5,1010.5 927.0,1010.5 927.5,1010.5 928.0,1010.5 928.5,1010.5 929.0,1010.5 929.5,1010.5 930.0,1010.5 930.5,1010.5 931.0,1010.5 931.5,1010.5 932.0,1010.3 932.5,1010.0 933.0,1009.5 933.5,1009.0 934.0,1008.4 934.5,1007.8 935.0,1007.3 935.5,1006.8 936.0,1006.4 936.5,1006.1 937.0,1006.0 937.5,1006.2 938.0,1006.8 938.5,1007.8 939.0,1009.0 939.5,1010.4 940.0,1011.8 940.5,1013.3 941.0,1014.7 941.5,1016.0 942.0,1017.0 942.5,1017.7 943.0,1018.0 943.5,1017.8 944.0,1017.2 944.5,1016.4 945.0,1015.2 945.5,1014.0 946.0,1012.7 946.5,1011.4 947.0,1010.3 947.5,1009.3 948.0,1008.5 948.5,1007.6 949.0,1006.7 949.5,1005.9 950.0,1005.2 950.5,1004.6 951.0,1004.3 951.5,1004.2 952.0,1004.3 952.5,1004.3 953.0,1004.4 953.5,1004.5 954.0,1004.6 954.5,1004.7 955.0,1004.8 955.5,1004.9 956.0,1005.0 956.5,1005.0 957.0,1004.8 957.5,1004.5 958.0,1004.1 958.5,1003.5 959.0,1002.9 959.5,1002.2 960.0,1001.4 960.5,1000.7 961.0,1000.0 961.5,999.3 962.0,998.6 962.5,998.0 963.0,997.5 963.5,997.0 964.0,996.4 964.5,995.8 965.0,995.3 965.5,994.7 966.0,994.2 966.5,993.7 967.0,993.3 967.5,992.9 968.0,992.6 968.5,992.3 969.0,992.2 969.5,992.0 970.0,991.9 970.5,991.8 971.0,991.7 971.5,991.6 972.0,991.5 972.5,991.4 973.0,991.3 973.5,991.3 974.0,991.2 974.5,991.2 975.0,991.2 975.5,991.3 976.0,991.7 976.5,992.3 977.0,993.1 977.5,994.0 978.0,995.0 978.5,995.9 979.0,996.8 979.5,997.4 980.0,997.9 980.5,998.1 981.0,998.3 981.5,998.5 982.0,998.6 982.5,998.7 983.0,998.8 983.5,999.0 984.0,999.3 984.5,999.9 985.0,1000.7 985.5,1001.9 986.0,1003.2 986.5,1004.5 987.0,1005.9 987.5,1007.3 988.0,1008.5 988.5,1009.4 989.0,1010.1 989.5,1010.5 990.0,1010.0 990.5,1008.0 991.0,1005.1 991.5,1001.6 992.0,998.1 992.5,995.2 993.0,993.2 993.5,992.4 994.0,991.7 994.5,991.1 995.0,990.7 995.5,990.5 996.0,991.0 996.5,993.2 997.0,996.6 997.5,1000.7 998.0,1004.8 998.5,1008.4 999.0,1010.9 999.5,1013.2 1000.0,1015.4 1000.5,1017.2 1001.0,1018.4 1001.5,1018.7 1002.0,1018.5 1002.5,1017.9 1003.0,1017.1 1003.5,1016.1 1004.0,1014.9 1004.5,1013.5 1005.0,1012.2 1005.5,1010.6 1006.0,1008.2 1006.5,1005.2 1007.0,1002.0 1007.5,998.7 1008.0,995.7 1008.5,993.2 1009.0,991.4 1009.5,990.0 1010.0,988.6 1010.5,987.3 1011.0,986.1 1011.5,985.2 1012.0,984.5 1012.5,984.2 1013.0,984.3 1013.5,985.0 1014.0,986.1 1014.5,987.5 1015.0,989.2 1015.5,991.1 1016.0,993.4 1016.5,997.4 1017.0,1002.4 1017.5,1007.6 1018.0,1012.3 1018.5,1015.6 1019.0,1016.8 1019.5,1017.0 1020.0,1017.1 1020.5,1017.3 1021.0,1017.4 1021.5,1017.5 1022.0,1017.5 1022.5,1017.3 1023.0,1016.4 1023.5,1015.0 1024.0,1013.1 1024.5,1011.0 1025.0,1008.9 1025.5,1006.8 1026.0,1005.0 1026.5,1003.7 1027.0,1003.0 1027.5,1003.0 1028.0,1003.2 1028.5,1003.5 1029.0,1003.9 1029.5,1004.5 1030.0,1005.1 1030.5,1005.7 1031.0,1006.4 1031.5,1007.1 1032.0,1007.8 1032.5,1008.5 1033.0,1009.1 1033.5,1009.6 1034.0,1010.0 1034.5,1010.3 1035.0,1010.5 1035.5,1010.4 1036.0,1010.2 1036.5,1009.8 1037.0,1009.3 1037.5,1008.6 1038.0,1007.8 1038.5,1007.0 1039.0,1006.1 1039.5,1005.2 1040.0,1004.3 1040.5,1003.4 1041.0,1002.6 1041.5,1001.9 1042.0,1001.3 1042.5,1000.8 1043.0,1000.6 1043.5,1000.5 1044.0,1000.6 1044.5,1000.8 1045.0,1001.2 1045.5,1001.6 1046.0,1002.1 1046.5,1002.5 1047.0,1002.8 1047.5,1002.9 1048.0,1003.0 1048.5,1002.9 1049.0,1002.7 1049.5,1002.5 1050.0,1002.3 1050.5,1002.1 1051.0,1001.9 1051.5,1001.8 1052.0,1001.7 1052.5,1001.9 1053.0,1002.3 1053.5,1002.7 1054.0,1003.2 1054.5,1003.4 1055.0,1003.5 1055.5,1003.4 1056.0,1003.2 1056.5,1003.0 1057.0,1002.8 1057.5,1002.6 1058.0,1002.4 1058.5,1002.1 1059.0,1001.9 1059.5,1001.8 1060.0,1001.7 1060.5,1001.8 1061.0,1002.2 1061.5,1003.0 1062.0,1004.1 1062.5,1005.4 1063.0,1006.8 1063.5,1008.3 1064.0,1009.8 1064.5,1011.2 1065.0,1012.4 1065.5,1013.4 1066.0,1014.0 1066.5,1014.2 1067.0,1014.1 1067.5,1013.9 1068.0,1013.5 1068.5,1013.0 1069.0,1012.3 1069.5,1011.6 1070.0,1010.9 1070.5,1010.1 1071.0,1009.4 1071.5,1008.6 1072.0,1007.9 1072.5,1007.3 1073.0,1006.7 1073.5,1006.3 1074.0,1006.1 1074.5,1006.0 1075.0,1006.1 1075.5,1006.5 1076.0,1007.1 1076.5,1007.8 1077.0,1008.7 1077.5,1009.8 1078.0,1010.8 1078.5,1012.0 1079.0,1013.1 1079.5,1014.1 1080.0,1015.1 1080.5,1015.9 1081.0,1016.7 1081.5,1017.2 1082.0,1017.4 1082.5,1017.5 1083.0,1017.3 1083.5,1017.0 1084.0,1016.6 1084.5,1016.2 1085.0,1015.6 1085.5,1015.1 1086.0,1014.5 1086.5,1013.9 1087.0,1013.4 1087.5,1012.9 1088.0,1012.6 1088.5,1012.3 1089.0,1012.2 1089.5,1012.3 1090.0,1012.5 1090.5,1012.8 1091.0,1013.3 1091.5,1013.8 1092.0,1014.4 1092.5,1015.0 1093.0,1015.6 1093.5,1016.2 1094.0,1016.8 1094.5,1017.3 1095.0,1017.8 1095.5,1018.2 1096.0,1018.4 1096.5,1018.5 1097.0,1018.0 1097.5,1016.4 1098.0,1014.1 1098.5,1011.5 1099.0,1009.0 1099.5,1006.9 1100.0,1005.2 1100.5,1003.4 1101.0,1001.7 1101.5,1000.1 1102.0,998.8 1102.5,998.1 1103.0,998.0 1103.5,998.1 1104.0,998.4 1104.5,998.7 1105.0,999.2 1105.5,999.7 1106.0,1000.2 1106.5,1000.7 1107.0,1001.1 1107.5,1001.5 1108.0,1001.8 1108.5,1002.0 1109.0,1002.2 1109.5,1002.3 1110.0,1002.5 1110.5,1002.6 1111.0,1002.8 1111.5,1003.0 1112.0,1003.2 1112.5,1003.5 1113.0,1003.9 1113.5,1004.8 1114.0,1006.2 1114.5,1008.0 1115.0,1009.9 1115.5,1011.9 1116.0,1013.7 1116.5,1015.2 1117.0,1016.6 1117.5,1018.0 1118.0,1019.4 1118.5,1020.7 1119.0,1021.7 1119.5,1022.4 1120.0,1022.5 1120.5,1022.4 1121.0,1022.1 1121.5,1021.8 1122.0,1021.3 1122.5,1020.8 1123.0,1020.2 1123.5,1019.5 1124.0,1018.8 1124.5,1018.1 1125.0,1017.3 1125.5,1016.5 1126.0,1015.5 1126.5,1014.4 1127.0,1013.0 1127.5,1011.5 1128.0,1010.0 1128.5,1008.4 1129.0,1006.8 1129.5,1005.3 1130.0,1003.8 1130.5,1002.1 1131.0,1000.1 1131.5,998.3 1132.0,996.7 1132.5,995.7 1133.0,995.5 1133.5,995.7 1134.0,996.1 1134.5,996.8 1135.0,997.5 1135.5,998.4 1136.0,999.3 1136.5,1000.2 1137.0,1001.2 1137.5,1002.3 1138.0,1003.5 1138.5,1004.8 1139.0,1006.2 1139.5,1007.7 1140.0,1009.2 1140.5,1010.9 1141.0,1012.8 1141.5,1015.1 1142.0,1017.5 1142.5,1019.7 1143.0,1021.7 1143.5,1023.3 1144.0,1024.7 1144.5,1026.2 1145.0,1027.5 1145.5,1028.6 1146.0,1029.4 1146.5,1029.7 1147.0,1029.6 1147.5,1028.9 1148.0,1027.8 1148.5,1026.4 1149.0,1024.7 1149.5,1022.9 1150.0,1021.2 1150.5,1019.5 1151.0,1018.0 1151.5,1016.9 1152.0,1016.2 1152.5,1016.0 1153.0,1016.2 1153.5,1016.5 1154.0,1017.0 1154.5,1017.6 1155.0,1018.1 1155.5,1018.6 1156.0,1019.0 1156.5,1019.2 1157.0,1019.2 1157.5,1019.2 1158.0,1019.1 1158.5,1018.9 1159.0,1018.8 1159.5,1018.5 1160.0,1017.7 1160.5,1016.7 1161.0,1015.4 1161.5,1014.2 1162.0,1013.2 1162.5,1012.4 1163.0,1012.2 1163.5,1012.7 1164.0,1013.7 1164.5,1015.1 1165.0,1016.9 1165.5,1018.8 1166.0,1020.8 1166.5,1022.7 1167.0,1024.3 1167.5,1025.7 1168.0,1026.5 1168.5,1026.7 1169.0,1026.3 1169.5,1025.4 1170.0,1024.0 1170.5,1022.4 1171.0,1020.6 1171.5,1018.7 1172.0,1016.9 1172.5,1015.3 1173.0,1014.1 1173.5,1013.0 1174.0,1011.9 1174.5,1010.9 1175.0,1009.9 1175.5,1009.0 1176.0,1008.1 1176.5,1007.3 1177.0,1006.6 1177.5,1005.9 1178.0,1005.2 1178.5,1004.6 1179.0,1003.9 1179.5,1003.4 1180.0,1003.1 1180.5,1003.0 1181.0,1003.1 1181.5,1003.6 1182.0,1004.2 1182.5,1005.0 1183.0,1005.9 1183.5,1006.8 1184.0,1007.7 1184.5,1008.5 1185.0,1009.2 1185.5,1009.7 1186.0,1009.9 1186.5,1009.9 1187.0,1009.5 1187.5,1008.9 1188.0,1008.2 1188.5,1007.3 1189.0,1006.5 1189.5,1005.8 1190.0,1005.2 1190.5,1005.0 1191.0,1004.8 1191.5,1004.7 1192.0,1004.7 1192.5,1004.6 1193.0,1004.5 1193.5,1004.4 1194.0,1004.4 1194.5,1004.3 1195.0,1004.3 1195.5,1004.2 1196.0,1004.2 1196.5,1004.2 1197.0,1004.2 1197.5,1004.4 1198.0,1004.7 1198.5,1005.1 1199.0,1005.6 1199.5,1006.2 1200.0,1006.8 1200.5,1007.5 1201.0,1008.2 1201.5,1008.9 1202.0,1009.7 1202.5,1010.7 1203.0,1012.0 1203.5,1013.4 1204.0,1014.9 1204.5,1016.5 1205.0,1018.0 1205.5,1019.3 1206.0,1020.5 1206.5,1021.4 1207.0,1022.1 1207.5,1022.6 1208.0,1023.2 1208.5,1023.7 1209.0,1024.1 1209.5,1024.5 1210.0,1024.7 1210.5,1024.8 1211.0,1024.4 1211.5,1023.6 1212.0,1022.3 1212.5,1020.6 1213.0,1018.7 1213.5,1016.5 1214.0,1014.4 1214.5,1012.2 1215.0,1010.1 1215.5,1008.3 1216.0,1006.7 1216.5,1005.4 1217.0,1004.0 1217.5,1002.6 1218.0,1001.2 1218.5,1000.0 1219.0,999.0 1219.5,998.3 1220.0,997.7 1220.5,997.3 1221.0,996.8 1221.5,996.5 1222.0,996.3 1222.5,996.2 1223.0,996.5 1223.5,997.5 1224.0,998.9 1224.5,1000.7 1225.0,1002.7 1225.5,1004.8 1226.0,1006.9 1226.5,1008.9 1227.0,1011.5 1227.5,1014.5 1228.0,1017.7 1228.5,1020.9 1229.0,1023.8 1229.5,1026.2 1230.0,1027.9 1230.5,1028.5 1231.0,1028.2 1231.5,1027.2 1232.0,1025.6 1232.5,1023.7 1233.0,1021.5 1233.5,1019.2 1234.0,1017.0 1234.5,1014.9 1235.0,1013.1 1235.5,1011.8 1236.0,1010.9 1236.5,1010.0 1237.0,1009.2 1237.5,1008.5 1238.0,1007.8 1238.5,1007.2 1239.0,1006.6 1239.5,1006.0 1240.0,1005.5 1240.5,1005.0 1241.0,1004.5 1241.5,1004.0 1242.0,1003.5 1242.5,1003.0 1243.0,1002.7 1243.5,1002.4 1244.0,1002.2 1244.5,1002.2 1245.0,1002.5 1245.5,1002.9 1246.0,1003.5 1246.5,1004.2 1247.0,1005.1 1247.5,1006.0 1248.0,1006.9 1248.5,1007.9 1249.0,1008.7 1249.5,1009.5 1250.0,1010.4 1250.5,1011.2 1251.0,1012.1 1251.5,1013.0 1252.0,1013.9 1252.5,1014.6 1253.0,1015.4 1253.5,1016.1 1254.0,1016.9 1254.5,1017.7 1255.0,1018.4 1255.5,1019.0 1256.0,1019.4 1256.5,1019.7 1257.0,1019.7 1257.5,1019.7 1258.0,1019.5 1258.5,1019.3 1259.0,1019.1 1259.5,1018.8 1260.0,1018.4 1260.5,1018.1 1261.0,1017.4 1261.5,1016.0 1262.0,1014.2 1262.5,1012.2 1263.0,1010.3 1263.5,1008.7 1264.0,1007.7 1264.5,1007.5 1265.0,1007.7 1265.5,1008.2 1266.0,1008.8 1266.5,1009.5 1267.0,1010.2 1267.5,1010.9 1268.0,1011.6 1268.5,1012.1 1269.0,1012.4 1269.5,1012.5 1270.0,1012.3 1270.5,1012.0 1271.0,1011.6 1271.5,1011.1 1272.0,1010.5 1272.5,1009.9 1273.0,1009.3 1273.5,1008.7 1274.0,1007.7 1274.5,1006.6 1275.0,1005.3 1275.5,1004.0 1276.0,1002.7 1276.5,1001.4 1277.0,1000.3 1277.5,999.4 1278.0,998.8 1278.5,998.5 1279.0,998.5 1279.5,998.9 1280.0,999.5 1280.5,1000.3 1281.0,1001.3 1281.5,1002.4 1282.0,1003.6 1282.5,1004.8 1283.0,1006.1 1283.5,1007.3 1284.0,1008.4 1284.5,1009.5 1285.0,1010.6 1285.5,1011.8 1286.0,1013.0 1286.5,1014.3 1287.0,1015.6 1287.5,1016.7 1288.0,1017.8 1288.5,1018.8 1289.0,1019.5 1289.5,1020.1 1290.0,1020.6 1290.5,1021.1 1291.0,1021.5 1291.5,1021.9 1292.0,1022.2 1292.5,1022.4 1293.0,1022.5 1293.5,1022.3 1294.0,1021.2 1294.5,1019.5 1295.0,1017.2 1295.5,1014.6 1296.0,1011.8 1296.5,1009.0 1297.0,1006.3 1297.5,1004.0 1298.0,1002.1 1298.5,1000.7 1299.0,999.2 1299.5,997.8 1300.0,996.5 1300.5,995.3 1301.0,994.4 1301.5,993.8 1302.0,993.7 1302.5,994.4 1303.0,996.0 1303.5,998.2 1304.0,1000.9 1304.5,1003.9 1305.0,1007.0 1305.5,1010.0 1306.0,1012.7 1306.5,1015.0 1307.0,1016.6 1307.5,1017.4 1308.0,1017.4 1308.5,1017.2 1309.0,1016.8 1309.5,1016.2 1310.0,1015.5 1310.5,1014.7 1311.0,1013.9 1311.5,1013.0 1312.0,1012.2 1312.5,1011.4 1313.0,1010.7 1313.5,1010.0 1314.0,1009.3 1314.5,1008.5 1315.0,1007.7 1315.5,1006.9 1316.0,1006.1 1316.5,1005.3 1317.0,1004.5 1317.5,1003.8 1318.0,1003.1 1318.5,1002.6 1319.0,1002.2 1319.5,1001.9 1320.0,1001.7 1320.5,1001.9 1321.0,1002.8 1321.5,1004.4 1322.0,1006.4 1322.5,1008.7 1323.0,1011.2 1323.5,1013.6 1324.0,1015.9 1324.5,1017.8 1325.0,1019.2 1325.5,1019.9 1326.0,1019.9 1326.5,1019.1 1327.0,1017.9 1327.5,1016.2 1328.0,1014.2 1328.5,1012.1 1329.0,1010.0 1329.5,1008.0 1330.0,1006.2 1330.5,1004.7 1331.0,1003.6 1331.5,1002.4 1332.0,1001.3 1332.5,1000.4 1333.0,999.6 1333.5,999.2 1334.0,999.4 1334.5,1000.2 1335.0,1001.7 1335.5,1003.5 1336.0,1005.5 1336.5,1007.5 1337.0,1009.4 1337.5,1011.3 1338.0,1013.5 1338.5,1015.8 1339.0,1018.1 1339.5,1020.1 1340.0,1021.9 1340.5,1023.2 1341.0,1023.9 1341.5,1024.5 1342.0,1025.1 1342.5,1025.7 1343.0,1026.2 1343.5,1026.6 1344.0,1026.9 1344.5,1027.2 1345.0,1027.4 1345.5,1027.5 1346.0,1027.2 1346.5,1025.7 1347.0,1024.2 1347.5,1023.1 1348.0,1022.0 1348.5,1020.9 1349.0,1020.0 1349.5,1019.5 1350.0,1019.2 1350.5,1019.2 1351.0,1019.2 1351.5,1019.2 1352.0,1019.2 1352.5,1019.1 1353.0,1019.1 1353.5,1019.0 1354.0,1018.9 1354.5,1018.7 1355.0,1018.0 1355.5,1016.4 1356.0,1014.1 1356.5,1011.5 1357.0,1008.9 1357.5,1006.5 1358.0,1004.8 1358.5,1003.8 1359.0,1002.9 1359.5,1002.1 1360.0,1001.5 1360.5,1000.9 1361.0,1000.6 1361.5,1000.5 1362.0,1000.8 1362.5,1001.8 1363.0,1003.2 1363.5,1004.9 1364.0,1006.7 1364.5,1009.3 1365.0,1013.0 1365.5,1017.4 1366.0,1021.7 1366.5,1025.5 1367.0,1028.0 1367.5,1029.6 1368.0,1031.1 1368.5,1032.3 1369.0,1033.2 1369.5,1033.5 1370.0,1033.0 1370.5,1031.6 1371.0,1029.5 1371.5,1027.0 1372.0,1024.4 1372.5,1021.8 1373.0,1019.0 1373.5,1015.4 1374.0,1011.8 1374.5,1008.7 1375.0,1006.8 1375.5,1005.8 1376.0,1004.9 1376.5,1004.1 1377.0,1003.7 1377.5,1003.5 1378.0,1003.8 1378.5,1004.7 1379.0,1006.0 1379.5,1007.6 1380.0,1009.3 1380.5,1010.9 1381.0,1012.3 1381.5,1014.0 1382.0,1015.8 1382.5,1017.6 1383.0,1019.4 1383.5,1020.8 1384.0,1021.8 1384.5,1022.2 1385.0,1022.2 1385.5,1021.9 1386.0,1021.6 1386.5,1021.1 1387.0,1020.6 1387.5,1020.1 1388.0,1019.5 1388.5,1019.0 1389.0,1018.5 1389.5,1017.8 1390.0,1017.1 1390.5,1016.4 1391.0,1015.8 1391.5,1015.3 1392.0,1015.0 1392.5,1014.9 1393.0,1014.7 1393.5,1014.7 1394.0,1014.6 1394.5,1014.5 1395.0,1014.4 1395.5,1014.3 1396.0,1014.2 1396.5,1013.9 1397.0,1013.6 1397.5,1013.3 1398.0,1012.9 1398.5,1012.5 1399.0,1012.2 1399.5,1011.9 1400.0,1011.8 1400.5,1011.7 1401.0,1012.0 1401.5,1012.4 1402.0,1013.1 1402.5,1013.9 1403.0,1014.7 1403.5,1015.7 1404.0,1016.6 1404.5,1017.7 1405.0,1019.1 1405.5,1020.8 1406.0,1022.6 1406.5,1024.5 1407.0,1026.2 1407.5,1027.7 1408.0,1028.8 1408.5,1029.4 1409.0,1030.0 1409.5,1030.4 1410.0,1030.8 1410.5,1031.0 1411.0,1031.0 1411.5,1030.9 1412.0,1030.6 1412.5,1030.4 1413.0,1030.1 1413.5,1029.9 1414.0,1029.8 1414.5,1029.9 1415.0,1030.5 1415.5,1031.4 1416.0,1032.6 1416.5,1033.9 1417.0,1035.3 1417.5,1036.7 1418.0,1037.9 1418.5,1039.0 1419.0,1039.7 1419.5,1040.0 1420.0,1039.9 1420.5,1039.3 1421.0,1038.4 1421.5,1037.3 1422.0,1036.2 1422.5,1035.1 1423.0,1034.1 1423.5,1033.4 1424.0,1033.0 1424.5,1033.1 1425.0,1033.3 1425.5,1033.7 1426.0,1034.2 1426.5,1034.8 1427.0,1035.4 1427.5,1036.0 1428.0,1036.8 1428.5,1037.8 1429.0,1038.9 1429.5,1040.1 1430.0,1041.5 1430.5,1043.1 1431.0,1044.7 1431.5,1046.9 1432.0,1049.6 1432.5,1052.7 1433.0,1056.1 1433.5,1059.7 1434.0,1063.4 1434.5,1067.2 1435.0,1071.4 1435.5,1075.9 1436.0,1080.6 1436.5,1085.6 1437.0,1090.5 1437.5,1095.5 1438.0,1100.7 1438.5,1106.7 1439.0,1113.7 1439.5,1122.7 1440.0,1133.2 1440.5,1144.7 1441.0,1161.3 1441.5,1162.0 1442.0,1162.0 1442.5,1162.0 1443.0,1162.0 1443.5,1162.0 1444.0,1162.0 1444.5,1162.0 1445.0,1162.0 1445.5,1162.0 1446.0,1162.0 1446.5,1162.0 1447.0,1162.0 1447.5,1161.9 1448.0,1147.9 1448.5,1134.3 1449.0,1119.7 1449.5,1104.0 1450.0,1088.8 1450.5,1073.8 1451.0,1058.8 1451.5,1043.9 1452.0,1029.0 1452.5,1014.1 1453.0,999.0 1453.5,983.9 1454.0,967.3 1454.5,952.5 1455.0,943.1 1455.5,935.5 1456.0,929.7 1456.5,926.1 1457.0,923.5 1457.5,921.4 1458.0,920.0 1458.5,919.6 1459.0,920.0 1459.5,920.8 1460.0,921.9 1460.5,923.1 1461.0,924.3 1461.5,925.5 1462.0,926.9 1462.5,928.4 1463.0,930.0 1463.5,931.7 1464.0,933.5 1464.5,935.3 1465.0,937.4 1465.5,939.8 1466.0,942.2 1466.5,944.6 1467.0,946.9 1467.5,948.9 1468.0,950.6 1468.5,951.8 1469.0,952.6 1469.5,953.3 1470.0,953.8 1470.5,954.3 1471.0,954.9 1471.5,955.5 1472.0,956.3 1472.5,957.3 1473.0,958.9 1473.5,960.7 1474.0,962.8 1474.5,965.0 1475.0,967.1 1475.5,969.0 1476.0,970.6 1476.5,972.0 1477.0,973.3 1477.5,974.5 1478.0,975.7 1478.5,976.8 1479.0,977.8 1479.5,978.8 1480.0,979.8 1480.5,980.8 1481.0,981.8 1481.5,982.9 1482.0,983.8 1482.5,984.7 1483.0,985.4 1483.5,985.9 1484.0,986.2 1484.5,986.1 1485.0,985.8 1485.5,985.2 1486.0,984.4 1486.5,983.4 1487.0,982.3 1487.5,981.2 1488.0,980.2 1488.5,979.2 1489.0,978.3 1489.5,977.5 1490.0,976.7 1490.5,975.8 1491.0,975.0 1491.5,974.2 1492.0,973.5 1492.5,972.9 1493.0,972.5 1493.5,972.4 1494.0,972.5 1494.5,972.6 1495.0,972.7 1495.5,973.0 1496.0,973.3 1496.5,973.6 1497.0,974.0 1497.5,974.5 1498.0,975.6 1498.5,977.1 1499.0,979.0 1499.5,981.1 1500.0,983.2 1500.5,985.3 1501.0,988.1 1501.5,991.2 1502.0,994.3 1502.5,997.1 1503.0,999.3 1503.5,1000.5 1504.0,1001.0 1504.5,1001.4 1505.0,1001.8 1505.5,1002.1 1506.0,1002.3 1506.5,1002.6 1507.0,1002.8 1507.5,1003.1 1508.0,1003.4 1508.5,1003.8 1509.0,1004.1 1509.5,1004.4 1510.0,1004.7 1510.5,1005.0 1511.0,1005.2 1511.5,1005.4 1512.0,1005.5 1512.5,1005.5 1513.0,1005.4 1513.5,1005.4 1514.0,1005.3 1514.5,1005.2 1515.0,1005.1 1515.5,1004.9 1516.0,1004.8 1516.5,1004.6 1517.0,1004.3 1517.5,1004.0 1518.0,1003.2 1518.5,1001.9 1519.0,1000.3 1519.5,998.6 1520.0,996.9 1520.5,995.4 1521.0,994.2 1521.5,993.2 1522.0,992.2 1522.5,991.3 1523.0,990.7 1523.5,990.4 1524.0,990.7 1524.5,991.4 1525.0,992.3 1525.5,993.4 1526.0,994.5 1526.5,995.3 1527.0,995.9 1527.5,995.9 1528.0,995.7 1528.5,995.3 1529.0,994.7 1529.5,994.0 1530.0,993.3 1530.5,992.5 1531.0,991.8 1531.5,990.9 1532.0,989.7 1532.5,988.4 1533.0,987.2 1533.5,986.2 1534.0,985.5 1534.5,985.5 1535.0,986.2 1535.5,987.6 1536.0,989.3 1536.5,991.2 1537.0,993.1 1537.5,994.9 1538.0,997.0 1538.5,999.2 1539.0,1001.4 1539.5,1003.3 1540.0,1004.7 1540.5,1006.1 1541.0,1007.4 1541.5,1008.5 1542.0,1009.4 1542.5,1009.9 1543.0,1009.9 1543.5,1009.4 1544.0,1008.4 1544.5,1007.1 1545.0,1005.7 1545.5,1004.3 1546.0,1003.2 1546.5,1002.4 1547.0,1002.2 1547.5,1002.0 1548.0,1001.9 1548.5,1001.8 1549.0,1001.8 1549.5,1001.7 1550.0,1001.7 1550.5,1001.9 1551.0,1002.1 1551.5,1002.5 1552.0,1002.7 1552.5,1002.9 1553.0,1002.9 1553.5,1002.5 1554.0,1001.7 1554.5,1000.6 1555.0,999.4 1555.5,998.1 1556.0,996.9 1556.5,995.9 1557.0,995.2 1557.5,994.6 1558.0,994.0 1558.5,993.7 1559.0,994.0 1559.5,994.9 1560.0,996.2 1560.5,997.8 1561.0,999.5 1561.5,1000.9 1562.0,1002.0 1562.5,1003.0 1563.0,1004.0 1563.5,1004.9 1564.0,1005.8 1564.5,1006.6 1565.0,1007.4 1565.5,1008.1 1566.0,1008.6 1566.5,1009.1 1567.0,1009.6 1567.5,1010.1 1568.0,1010.6 1568.5,1011.0 1569.0,1011.4 1569.5,1011.7 1570.0,1012.0 1570.5,1012.2 1571.0,1012.2 1571.5,1012.1 1572.0,1011.8 1572.5,1011.2 1573.0,1010.4 1573.5,1009.5 1574.0,1008.5 1574.5,1007.5 1575.0,1006.4 1575.5,1005.0 1576.0,1003.3 1576.5,1001.3 1577.0,999.3 1577.5,997.4 1578.0,995.7 1578.5,994.4 1579.0,993.5 1579.5,992.6 1580.0,991.8 1580.5,991.2 1581.0,991.0 1581.5,991.3 1582.0,992.9 1582.5,995.1 1583.0,997.6 1583.5,1000.0 1584.0,1002.1 1584.5,1004.6 1585.0,1007.2 1585.5,1009.8 1586.0,1012.1 1586.5,1014.0 1587.0,1015.2 1587.5,1015.5 1588.0,1015.0 1588.5,1014.1 1589.0,1012.9 1589.5,1011.6 1590.0,1010.2 1590.5,1009.0 1591.0,1007.5 1591.5,1005.9 1592.0,1004.2 1592.5,1002.7 1593.0,1001.6 1593.5,1001.0 1594.0,1001.1 1594.5,1001.9 1595.0,1003.0 1595.5,1004.4 1596.0,1005.8 1596.5,1007.0 1597.0,1007.8 1597.5,1008.0 1598.0,1008.0 1598.5,1008.0 1599.0,1008.0 1599.5,1008.0 1600.0,1008.0 1600.5,1008.0 1601.0,1008.0 1601.5,1007.8 1602.0,1006.8 1602.5,1005.3 1603.0,1003.5 1603.5,1001.5 1604.0,999.5 1604.5,997.8 1605.0,996.5 1605.5,995.3 1606.0,994.1 1606.5,993.1 1607.0,992.4 1607.5,992.2 1608.0,993.7 1608.5,996.8 1609.0,1000.6 1609.5,1004.3 1610.0,1007.1 1610.5,1009.5 1611.0,1012.0 1611.5,1014.4 1612.0,1016.6 1612.5,1018.5 1613.0,1019.8 1613.5,1020.4 1614.0,1020.4 1614.5,1020.0 1615.0,1019.2 1615.5,1018.2 1616.0,1017.2 1616.5,1016.1 1617.0,1015.0 1617.5,1014.1 1618.0,1013.2 1618.5,1012.2 1619.0,1011.2 1619.5,1010.3 1620.0,1009.4 1620.5,1008.6 1621.0,1008.1 1621.5,1007.8 1622.0,1007.6 1622.5,1007.5 1623.0,1007.3 1623.5,1007.2 1624.0,1007.0 1624.5,1006.7 1625.0,1005.7 1625.5,1004.0 1626.0,1001.9 1626.5,999.7 1627.0,997.8 1627.5,996.6 1628.0,995.7 1628.5,994.9 1629.0,994.4 1629.5,994.2 1630.0,995.3 1630.5,997.9 1631.0,1001.4 1631.5,1005.3 1632.0,1009.0 1632.5,1011.9 1633.0,1014.5 1633.5,1017.2 1634.0,1019.8 1634.5,1022.3 1635.0,1024.5 1635.5,1026.3 1636.0,1027.6 1636.5,1028.5 1637.0,1029.2 1637.5,1029.8 1638.0,1030.2 1638.5,1030.5 1639.0,1030.4 1639.5,1029.7 1640.0,1028.4 1640.5,1026.8 1641.0,1024.9 1641.5,1022.9 1642.0,1020.9 1642.5,1019.1 1643.0,1017.3 1643.5,1015.3 1644.0,1013.1 1644.5,1011.0 1645.0,1009.0 1645.5,1007.3 1646.0,1005.9 1646.5,1005.0 1647.0,1004.1 1647.5,1003.3 1648.0,1002.5 1648.5,1001.9 1649.0,1001.4 1649.5,1001.1 1650.0,1001.0 1650.5,1001.0 1651.0,1001.0 1651.5,1001.0 1652.0,1001.1 1652.5,1001.2 1653.0,1001.2 1653.5,1001.3 1654.0,1001.4 1654.5,1001.6 1655.0,1001.7 1655.5,1002.2 1656.0,1003.1 1656.5,1004.4 1657.0,1006.0 1657.5,1007.7 1658.0,1009.4 1658.5,1011.0 1659.0,1012.5 1659.5,1014.2 1660.0,1016.1 1660.5,1018.0 1661.0,1019.9 1661.5,1021.6 1662.0,1023.0 1662.5,1023.9 1663.0,1024.3 1663.5,1024.2 1664.0,1024.0 1664.5,1023.7 1665.0,1023.3 1665.5,1022.8 1666.0,1022.3 1666.5,1021.9 1667.0,1021.4 1667.5,1021.0 1668.0,1020.7 1668.5,1020.3 1669.0,1020.0 1669.5,1019.7 1670.0,1019.4 1670.5,1019.1 1671.0,1018.7 1671.5,1018.3 1672.0,1017.8 1672.5,1017.3 1673.0,1016.5 1673.5,1015.3 1674.0,1013.9 1674.5,1012.3 1675.0,1010.6 1675.5,1008.9 1676.0,1007.2 1676.5,1005.6 1677.0,1004.3 1677.5,1003.0 1678.0,1001.7 1678.5,1000.3 1679.0,999.0 1679.5,997.7 1680.0,996.7 1680.5,996.0 1681.0,995.5 1681.5,995.5 1682.0,996.1 1682.5,997.1 1683.0,998.5 1683.5,1000.1 1684.0,1001.8 1684.5,1003.4 1685.0,1004.8 1685.5,1006.0 1686.0,1006.6 1686.5,1006.7 1687.0,1006.5 1687.5,1006.2 1688.0,1005.8 1688.5,1005.4 1689.0,1005.0 1689.5,1004.6 1690.0,1004.3 1690.5,1004.2 1691.0,1004.3 1691.5,1004.6 1692.0,1005.1 1692.5,1005.7 1693.0,1006.5 1693.5,1007.2 1694.0,1008.0 1694.5,1008.7 1695.0,1009.4 1695.5,1009.9 1696.0,1010.3 1696.5,1010.5 1697.0,1010.7 1697.5,1010.8 1698.0,1010.8 1698.5,1010.9 1699.0,1011.0 1699.5,1011.1 1700.0,1011.2 1700.5,1011.5 1701.0,1011.9 1701.5,1012.6 1702.0,1013.3 1702.5,1014.1 1703.0,1014.8 1703.5,1015.6 1704.0,1016.1 1704.5,1016.6 1705.0,1016.7 1705.5,1016.7 1706.0,1016.4 1706.5,1016.0 1707.0,1015.4 1707.5,1014.8 1708.0,1014.1 1708.5,1013.4 1709.0,1012.7 1709.5,1011.7 1710.0,1010.5 1710.5,1009.4 1711.0,1008.6 1711.5,1008.5 1712.0,1008.8 1712.5,1009.3 1713.0,1010.1 1713.5,1011.0 1714.0,1011.9 1714.5,1012.8 1715.0,1013.8 1715.5,1015.1 1716.0,1016.4 1716.5,1017.7 1717.0,1018.7 1717.5,1019.2 1718.0,1019.3 1718.5,1019.4 1719.0,1019.5 1719.5,1019.5 1720.0,1019.6 1720.5,1019.6 1721.0,1019.7 1721.5,1019.7 1722.0,1019.7 1722.5,1019.7 1723.0,1019.7 1723.5,1019.4 1724.0,1014.8 1724.5,1009.7 1725.0,1008.2 1725.5,1007.1 1726.0,1006.3 1726.5,1005.6 1727.0,1005.1 1727.5,1004.6 1728.0,1004.0 1728.5,1003.5 1729.0,1002.8 1729.5,1001.9 1730.0,1001.0 1730.5,1000.0 1731.0,999.1 1731.5,998.3 1732.0,997.7 1732.5,997.5 1733.0,997.5 1733.5,997.5 1734.0,997.6 1734.5,997.8 1735.0,997.9 1735.5,998.1 1736.0,998.3 1736.5,998.5 1737.0,998.8 1737.5,999.3 1738.0,999.9 1738.5,1000.5 1739.0,1001.1 1739.5,1001.7 1740.0,1002.2 1740.5,1002.6 1741.0,1002.9 1741.5,1003.0 1742.0,1002.8 1742.5,1002.4 1743.0,1002.0 1743.5,1001.5 1744.0,1001.0 1744.5,1000.7 1745.0,1000.5 1745.5,1000.7 1746.0,1001.7 1746.5,1003.4 1747.0,1005.5 1747.5,1007.7 1748.0,1009.9 1748.5,1011.8 1749.0,1013.2 1749.5,1014.6 1750.0,1015.9 1750.5,1017.2 1751.0,1018.4 1751.5,1019.4 1752.0,1020.1 1752.5,1020.5 1753.0,1020.4 1753.5,1020.1 1754.0,1019.6 1754.5,1018.8 1755.0,1017.9 1755.5,1016.9 1756.0,1015.8 1756.5,1014.6 1757.0,1013.3 1757.5,1012.1 1758.0,1010.8 1758.5,1009.0 1759.0,1006.9 1759.5,1004.6 1760.0,1002.4 1760.5,1000.4 1761.0,998.8 1761.5,997.8 1762.0,997.1 1762.5,996.4 1763.0,995.9 1763.5,995.6 1764.0,995.5 1764.5,995.8 1765.0,996.5 1765.5,997.4 1766.0,998.4 1766.5,999.3 1767.0,1000.0 1767.5,1000.4 1768.0,1000.4 1768.5,1000.2 1769.0,999.8 1769.5,999.3 1770.0,998.8 1770.5,998.3 1771.0,998.1 1771.5,998.0 1772.0,998.1 1772.5,998.4 1773.0,998.8 1773.5,999.4 1774.0,1000.2 1774.5,1001.0 1775.0,1001.9 1775.5,1003.0 1776.0,1004.8" fill="none" stroke="#8080ff" stroke-width="1" stroke-linejoin="round" shape-rendering="crispEdges" clip-path="url(#cp3)"/>
<path d="M68 1137h1v5h-1zM142 1137h1v5h-1zM216 1134h1v8h-1zM290 1137h1v5h-1zM364 1137h1v5h-1zM438 1137h1v5h-1zM512 1137h1v5h-1zM586 1134h1v8h-1zM660 1137h1v5h-1zM734 1137h1v5h-1zM808 1137h1v5h-1zM882 1137h1v5h-1zM956 1134h1v8h-1zM1030 1137h1v5h-1zM1104 1137h1v5h-1zM1178 1137h1v5h-1zM1252 1137h1v5h-1zM1326 1134h1v8h-1zM1400 1137h1v5h-1zM1474 1137h1v5h-1zM1548 1137h1v5h-1zM1622 1137h1v5h-1zM1696 1134h1v8h-1zM1770 1137h1v5h-1z" fill="#ffffff"/>
<text class="yl" transform="translate(1764,84.5) rotate(-90) scale(1.18,1)" text-anchor="middle" letter-spacing="1.0">[rel]</text>
<text class="yl" transform="translate(1764,144.8) rotate(-90) scale(1.11,1)" text-anchor="middle">5</text>
<text class="yl" transform="translate(1764,200.5) rotate(-90) scale(1.11,1)" text-anchor="middle">0</text>
<text class="yl" transform="translate(1764,257.6) rotate(-90) scale(1.11,1)" text-anchor="middle" letter-spacing="1.2" style="white-space:pre">- 5</text>
<text class="yl" transform="translate(1764,313.3) rotate(-90) scale(1.11,1)" text-anchor="middle" letter-spacing="1.2" style="white-space:pre">- 10</text>
<rect x="1762" y="336" width="1" height="14" fill="#8080ff"/>
<rect x="1762" y="350" width="15" height="1" fill="#8080ff"/>
<text class="yl" transform="translate(1764,353.5) rotate(-90) scale(1.18,1)" text-anchor="middle" letter-spacing="1.0">[rel]</text>
<text class="yl" transform="translate(1764,395.0) rotate(-90) scale(1.11,1)" text-anchor="middle">5</text>
<text class="yl" transform="translate(1764,469.5) rotate(-90) scale(1.11,1)" text-anchor="middle">0</text>
<text class="yl" transform="translate(1764,545.5) rotate(-90) scale(1.11,1)" text-anchor="middle" letter-spacing="1.2" style="white-space:pre">- 5</text>
<rect x="1762" y="605" width="1" height="14" fill="#8080ff"/>
<rect x="1762" y="619" width="15" height="1" fill="#8080ff"/>
<text class="yl" transform="translate(1764,622.5) rotate(-90) scale(1.18,1)" text-anchor="middle" letter-spacing="1.0">[rel]</text>
<text class="yl" transform="translate(1764,672.8) rotate(-90) scale(1.11,1)" text-anchor="middle">5</text>
<text class="yl" transform="translate(1764,738.5) rotate(-90) scale(1.11,1)" text-anchor="middle">0</text>
<text class="yl" transform="translate(1764,805.8) rotate(-90) scale(1.11,1)" text-anchor="middle" letter-spacing="1.2" style="white-space:pre">- 5</text>
<rect x="1762" y="874" width="1" height="14" fill="#8080ff"/>
<rect x="1762" y="888" width="15" height="1" fill="#8080ff"/>
<text class="yl" transform="translate(1764,891.5) rotate(-90) scale(1.18,1)" text-anchor="middle" letter-spacing="1.0">[rel]</text>
<text class="yl" transform="translate(1764,951.9) rotate(-90) scale(1.11,1)" text-anchor="middle">5</text>
<text class="yl" transform="translate(1764,1007.5) rotate(-90) scale(1.11,1)" text-anchor="middle">0</text>
<text class="yl" transform="translate(1764,1064.7) rotate(-90) scale(1.11,1)" text-anchor="middle" letter-spacing="1.2" style="white-space:pre">- 5</text>
<text class="yl" transform="translate(1764,1120.3) rotate(-90) scale(1.11,1)" text-anchor="middle" letter-spacing="1.2" style="white-space:pre">- 10</text>
<rect x="1762" y="67" width="15" height="14" fill="#8080ff"/>
<path d="M1772 322h5v1h-5zM1769 311h8v1h-8zM1772 300h5v1h-5zM1772 289h5v1h-5zM1772 278h5v1h-5zM1772 267h5v1h-5zM1769 256h8v1h-8zM1772 245h5v1h-5zM1772 233h5v1h-5zM1772 222h5v1h-5zM1772 211h5v1h-5zM1769 200h8v1h-8zM1772 189h5v1h-5zM1772 178h5v1h-5zM1772 167h5v1h-5zM1772 155h5v1h-5zM1769 144h8v1h-8zM1772 133h5v1h-5zM1772 122h5v1h-5zM1772 111h5v1h-5zM1772 100h5v1h-5zM1769 89h8v1h-8zM1772 78h5v1h-5z" fill="#ffffff"/>
<path d="M1772 588h5v1h-5zM1772 573h5v1h-5zM1772 558h5v1h-5zM1769 544h8v1h-8zM1772 529h5v1h-5zM1772 514h5v1h-5zM1772 499h5v1h-5zM1772 484h5v1h-5zM1769 469h8v1h-8zM1772 454h5v1h-5zM1772 439h5v1h-5zM1772 424h5v1h-5zM1772 409h5v1h-5zM1769 395h8v1h-8zM1772 380h5v1h-5zM1772 365h5v1h-5zM1772 350h5v1h-5z" fill="#ffffff"/>
<path d="M1769 870h8v1h-8zM1772 856h5v1h-5zM1772 843h5v1h-5zM1772 830h5v1h-5zM1772 817h5v1h-5zM1769 804h8v1h-8zM1772 791h5v1h-5zM1772 777h5v1h-5zM1772 764h5v1h-5zM1772 751h5v1h-5zM1769 738h8v1h-8zM1772 725h5v1h-5zM1772 712h5v1h-5zM1772 699h5v1h-5zM1772 685h5v1h-5zM1769 672h8v1h-8zM1772 659h5v1h-5zM1772 646h5v1h-5zM1772 633h5v1h-5zM1772 620h5v1h-5zM1769 607h8v1h-8z" fill="#ffffff"/>
<path d="M1772 1129h5v1h-5zM1769 1118h8v1h-8zM1772 1107h5v1h-5zM1772 1096h5v1h-5zM1772 1085h5v1h-5zM1772 1074h5v1h-5zM1769 1063h8v1h-8zM1772 1052h5v1h-5zM1772 1040h5v1h-5zM1772 1029h5v1h-5zM1772 1018h5v1h-5zM1769 1007h8v1h-8zM1772 996h5v1h-5zM1772 985h5v1h-5zM1772 974h5v1h-5zM1772 962h5v1h-5zM1769 951h8v1h-8zM1772 940h5v1h-5zM1772 929h5v1h-5zM1772 918h5v1h-5zM1772 907h5v1h-5zM1769 896h8v1h-8zM1772 885h5v1h-5z" fill="#ffffff"/>
<g shape-rendering="geometricPrecision"><polyline points="23.2,22.9 27.3,14.2 35.1,31.7 39.4,23.0" fill="none" stroke="#333333" stroke-width="1.9" stroke-linejoin="round"/><path d="M34.9 15v7.6" stroke="#6a7b8c" stroke-width="1.8" fill="none"/><path d="M33.0 21.6h3.8l-1.9 2.2z" fill="#55667a"/><path d="M506.2 29H524V17z" fill="#333333"/><path d="M536 17V29H553.8z" fill="#333333"/><path d="M754 13h8l2 2v9h-10z" fill="#333333"/><rect x="755" y="14" width="6" height="2" fill="#ffffff"/><circle cx="759" cy="21.4" r="1.5" fill="#ffffff"/><path d="M773.2 25.2V29.1H762.2M766 25L761.6 29.1L766 33.3" fill="none" stroke="#333333" stroke-width="2"/><path d="M802.1 18V23H785.3M790.6 17.5L784.8 23L790.6 28.5" fill="none" stroke="#333333" stroke-width="2"/><path d="M1764.3 16.5L1777.3 29.7M1777.3 16.5L1764.3 29.7" fill="none" stroke="#333333" stroke-width="2"/></g><rect x="286" y="21" width="20" height="2" fill="#1a1a1a"/><rect x="290" y="16" width="2" height="5" fill="#8c8c8c"/><rect x="295" y="13" width="2" height="8" fill="#8c8c8c"/><rect x="300" y="18" width="2" height="3" fill="#8c8c8c"/><rect x="312" y="9" width="1" height="28" fill="#b4b4b4"/><rect x="405" y="9" width="1" height="28" fill="#b4b4b4"/><rect x="498" y="9" width="1" height="28" fill="#b4b4b4"/><rect x="591" y="9" width="1" height="28" fill="#b4b4b4"/><rect x="654" y="9" width="1" height="28" fill="#b4b4b4"/><rect x="747" y="9" width="1" height="28" fill="#b4b4b4"/><rect x="569" y="16" width="4" height="14" fill="#333333"/><rect x="577" y="16" width="4" height="14" fill="#333333"/><rect x="607" y="16" width="2" height="14" fill="#2a2a2a"/><rect x="601" y="22" width="14" height="2" fill="#2a2a2a"/><rect x="631" y="22" width="14" height="2" fill="#2a2a2a"/><rect x="666" y="16" width="1" height="14" fill="#000000"/><rect x="670" y="16" width="1" height="14" fill="#000000"/><rect x="674" y="16" width="1" height="14" fill="#000000"/><rect x="694" y="18" width="14" height="1" fill="#000000"/><rect x="694" y="22" width="14" height="1" fill="#000000"/><rect x="694" y="26" width="14" height="1" fill="#000000"/><rect x="730" y="14" width="2" height="18" fill="#000000"/><rect x="722" y="22" width="18" height="2" fill="#000000"/><rect x="724" y="16" width="3" height="3" fill="#000000"/><rect x="724" y="27" width="3" height="3" fill="#000000"/><rect x="735" y="16" width="3" height="3" fill="#000000"/><rect x="735" y="27" width="3" height="3" fill="#000000"/>
<rect x="21" y="66" width="1" height="1077" fill="#ff5050"/>
</svg>
</body></html>
